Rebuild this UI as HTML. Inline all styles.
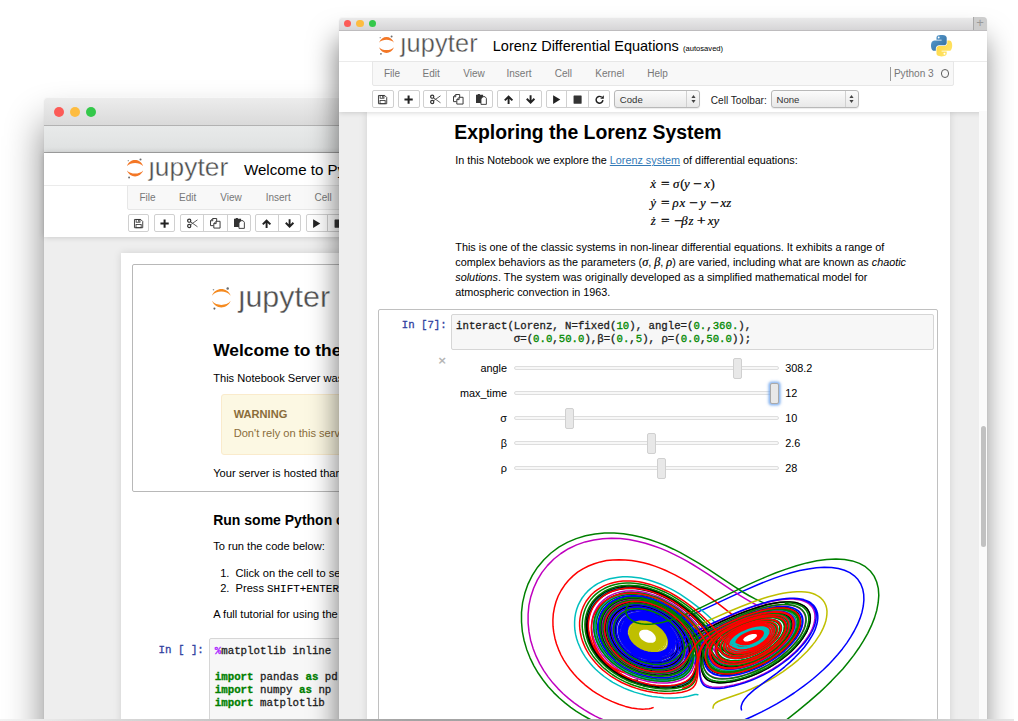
<!DOCTYPE html>
<html lang="en"><head><meta charset="utf-8"><title>Jupyter</title>
<style>
html,body{margin:0;padding:0;background:#fff;}
body{width:1018px;height:721px;overflow:hidden;position:relative;font-family:"Liberation Sans",sans-serif;color:#000;}
.abs,.win *{position:absolute;}
.win{position:absolute;background:#fff;border-radius:4px 4px 0 0;}
.t{white-space:pre;line-height:1;}
.btn{background:#fff;border:1px solid #d0d0d0;box-sizing:border-box;border-radius:2px;}
.btn i{top:0;bottom:0;width:1px;background:#d0d0d0;}
.menu{color:#777;font-size:10px;}
.mono{font-family:"Liberation Mono",monospace;-webkit-text-stroke:0.3px currentColor;}
.math{font-family:"Liberation Serif",serif;font-style:italic;-webkit-text-stroke:0.2px #000;}
svg{overflow:visible;}
.ic{fill:#333;}
.tl{border-radius:50%;}
.logoj{font-family:"Liberation Sans",sans-serif;color:#4e4e4e;-webkit-text-stroke:0.35px #fff;}
.kw{color:#008000;font-weight:bold;}
.num{color:#080;}
.sl{height:4px;border:1px solid #dedede;background:#f7f7f7;border-radius:3px;box-sizing:border-box;}
.sh{width:9px;height:21px;border:1px solid #d0d0d0;background:#e8e8e8;border-radius:2px;box-sizing:border-box;}
.lab{font-size:10.85px;text-align:right;width:80px;}
</style></head><body>

<!-- ================= BACK WINDOW ================= -->
<div class="win" id="w1" style="left:44px;top:97.3px;width:640px;height:640px;box-shadow:0 26px 38px rgba(0,0,0,.48), 0 1px 1px rgba(0,0,0,.12);">
  <div style="left:0;top:0;width:100%;height:28.4px;border-radius:4px 4px 0 0;background:linear-gradient(#ededed,#dadada);border-bottom:1px solid #b2b2b2;box-sizing:border-box;box-shadow:inset 0 1px 0 rgba(255,255,255,.55);"></div>
  <div class="tl" style="left:10px;top:9.9px;width:10px;height:10px;background:#fc5b57;"></div>
  <div class="tl" style="left:25.5px;top:9.9px;width:10px;height:10px;background:#fdbc40;"></div>
  <div class="tl" style="left:41.5px;top:9.9px;width:10px;height:10px;background:#34c84a;"></div>
  <div style="left:0;top:28.4px;width:100%;height:27.8px;background:linear-gradient(#e8eaea,#dfe1e1);border-bottom:1px solid #a6a6a6;box-sizing:border-box;"></div>
  <!-- header -->
  <div id="w1c" style="left:0;top:56.2px;width:100%;height:600px;background:#eee;">
    <div style="left:0;top:0;width:100%;height:83.5px;background:#fff;box-shadow:0 0 6px rgba(0,0,0,.18);"></div>
    <svg style="left:82.50px;top:6.50px;" width="16.1" height="16.5" viewBox="0 0 100 100" preserveAspectRatio="none">
<path d="M0,36 C9,12 30,0 50,0 C70,0 91,12 100,36 C88,23.0 69,17.5 50,17.5 C31,17.5 12,23.0 0,36 Z" fill="#f37726"/>
<path d="M0,64 C9,88 30,100 50,100 C70,100 91,88 100,64 C88,77.0 69,82.5 50,82.5 C31,82.5 12,77.0 0,64 Z" fill="#f37726"/>
<circle cx="84" cy="-3" r="6.5" fill="#6a6a6b"/><circle cx="8" cy="4" r="4.2" fill="#8e8e8e"/><circle cx="13" cy="106" r="5.6" fill="#616262"/>
</svg>
<div class="t logoj" style="left:104.80px;top:0.24px;font-size:26.3px;letter-spacing:0.1px;">jupyter</div>
<div style="left:105.33px;top:0.00px;width:5.26px;height:6.98px;background:#fff;"></div>
    <div class="t" style="left:200.3px;top:8.6px;font-size:15.1px;margin-left:-0.4px;">Welcome to Python</div>
    <div style="left:0;top:31.3px;width:100%;height:1px;background:#ebebeb;"></div><div style="left:83px;top:31.3px;width:600px;height:24.8px;background:#f8f8f8;border:1px solid #e7e7e7;box-sizing:border-box;border-radius:0 0 2px 2px;"></div>
    <div class="t menu" style="left:95.4px;top:39.6px;">File</div>
    <div class="t menu" style="left:135px;top:39.6px;">Edit</div>
    <div class="t menu" style="left:176.2px;top:39.6px;">View</div>
    <div class="t menu" style="left:221.7px;top:39.6px;">Insert</div>
    <div class="t menu" style="left:270.5px;top:39.6px;">Cell</div>
    <div class="btn" style="left:83.6px;top:61.0px;width:21.90px;height:17.90px;"></div><svg style="left:89.95px;top:65.35px;" width="9.2" height="9.2" viewBox="0 0 10 10"><path d="M0.5,0.5 H7.3 L9.5,2.7 V9.5 H0.5 Z" fill="none" stroke="#333" stroke-width="1"/><rect x="2.3" y="0.5" width="4.2" height="3" fill="none" stroke="#333" stroke-width="0.9"/><rect x="4.6" y="1" width="1.2" height="2" fill="#333"/><rect x="2.2" y="6" width="5.6" height="3.5" fill="none" stroke="#333" stroke-width="0.9"/></svg><div class="btn" style="left:110.19999999999999px;top:61.0px;width:21.20px;height:17.90px;"></div><svg style="left:116.20px;top:65.35px;" width="9.2" height="9.2" viewBox="0 0 10 10"><path d="M3.9,0.5 H6.1 V3.9 H9.5 V6.1 H6.1 V9.5 H3.9 V6.1 H0.5 V3.9 H3.9 Z" fill="#222"/></svg><div class="btn" style="left:136.2px;top:61.0px;width:70.70px;height:17.90px;"><i style="left:21.90px;"></i><i style="left:45.50px;"></i></div><svg style="left:142.60px;top:64.65px;" width="10.6" height="10.6" viewBox="0 0 10 10"><path d="M3.4,3.6 L9.9,8.3 M3.4,6.4 L9.9,1.7" stroke="#555" stroke-width="0.9" fill="none"/><circle cx="2.1" cy="2.5" r="1.5" fill="none" stroke="#333" stroke-width="1.15"/><circle cx="2.1" cy="7.5" r="1.5" fill="none" stroke="#333" stroke-width="1.15"/></svg><svg style="left:166.10px;top:64.65px;" width="10.6" height="10.6" viewBox="0 0 10 10"><path d="M2.6,0.5 H6.3 V3 M2.6,0.5 L0.5,2.6 V7.2 H3.3 M2.6,0.5 V2.6 H0.5" fill="none" stroke="#333" stroke-width="0.9"/><path d="M5.8,3.1 H9.5 V9.5 H3.6 V5.3 Z M5.8,3.1 V5.3 H3.6" fill="none" stroke="#333" stroke-width="0.9"/></svg><svg style="left:189.65px;top:64.55px;" width="10.8" height="10.8" viewBox="0 0 10 10"><path d="M0,0.6 H1.6 V0 H3.6 V0.6 H6.6 V2.6 L4.6,4.6 V8.4 H0 Z" fill="#333"/><path d="M6.4,2.5 H8.4 L9.6,4 V9.6 H4.6 V4.6 Z" fill="#fff" stroke="#333" stroke-width="0.85"/></svg><div class="btn" style="left:211.1px;top:61.0px;width:46.00px;height:17.90px;"><i style="left:21.60px;"></i></div><svg style="left:218.05px;top:65.35px;" width="9.2" height="9.2" viewBox="0 0 10 10"><path d="M5,0.2 L9.9,5.1 L8.4,6.6 L6.05,4.25 V9.8 H3.95 V4.25 L1.6,6.6 L0.1,5.1 Z" fill="#222"/></svg><svg style="left:241.05px;top:65.35px;" width="9.2" height="9.2" viewBox="0 0 10 10"><path d="M5,9.8 L9.9,4.9 L8.4,3.4 L6.05,5.75 V0.2 H3.95 V5.75 L1.6,3.4 L0.1,4.9 Z" fill="#222"/></svg><div class="btn" style="left:261.6px;top:61.0px;width:66.40px;height:17.90px;"><i style="left:20.30px;"></i><i style="left:42.90px;"></i></div><svg style="left:267.90px;top:65.35px;" width="9.2" height="9.2" viewBox="0 0 10 10"><path d="M1.2,0.2 L9,5 L1.2,9.8 Z" fill="#222"/></svg><svg style="left:290.10px;top:65.35px;" width="9.2" height="9.2" viewBox="0 0 10 10"><rect x="0.6" y="0.6" width="8.8" height="8.8" rx="0.5" fill="#333"/></svg><svg style="left:312.40px;top:65.35px;" width="9.2" height="9.2" viewBox="0 0 10 10"><path d="M8.6,5.6 A3.7,3.7 0 1 1 7.2,2.3" fill="none" stroke="#222" stroke-width="1.6"/><path d="M9.6,0.3 V4.2 H5.7 Z" fill="#222"/></svg>
    <!-- notebook container -->
    <div style="left:76.7px;top:99.5px;width:600px;height:600px;background:#fff;box-shadow:0 0 8px rgba(0,0,0,.12);">
      <div style="left:11.5px;top:11px;width:600px;height:228px;border:1px solid #b8b8b8;border-radius:2px;box-sizing:border-box;"></div>
      <svg style="left:91.50px;top:35.70px;" width="18.7" height="18.5" viewBox="0 0 100 100" preserveAspectRatio="none">
<path d="M0,36 C9,12 30,0 50,0 C70,0 91,12 100,36 C88,19.5 69,14 50,14 C31,14 12,19.5 0,36 Z" fill="#f58a1f"/>
<path d="M0,64 C9,88 30,100 50,100 C70,100 91,88 100,64 C88,80.5 69,86 50,86 C31,86 12,80.5 0,64 Z" fill="#f58a1f"/>
<circle cx="84" cy="-3" r="6.5" fill="#6a6a6b"/><circle cx="8" cy="4" r="4.2" fill="#8e8e8e"/><circle cx="13" cy="106" r="5.6" fill="#616262"/>
</svg>
<div class="t logoj" style="left:117.90px;top:27.87px;font-size:30.4px;letter-spacing:0.05px;">jupyter</div>
<div style="left:118.51px;top:27.46px;width:6.08px;height:8.21px;background:#fff;"></div>
      <div class="t" style="left:92.5px;top:89.5px;font-size:17.4px;font-weight:bold;">Welcome to the Temporary Notebook</div>
      <div class="t" style="left:92.5px;top:119.7px;font-size:11.1px;">This Notebook Server was launched</div>
      <div style="left:100px;top:141px;width:500px;height:61px;background:#fcf8e3;border:1px solid #faebcc;border-radius:3px;box-sizing:border-box;"></div>
      <div class="t" style="left:113px;top:156.2px;font-size:11.1px;font-weight:bold;color:#8a6d3b;">WARNING</div>
      <div class="t" style="left:113px;top:175.5px;font-size:11.1px;color:#8a6d3b;">Don't rely on this server</div>
      <div class="t" style="left:92.5px;top:215px;font-size:11.1px;">Your server is hosted thanks</div>
      <div class="t" style="left:92.5px;top:260.3px;font-size:14px;font-weight:bold;">Run some Python code</div>
      <div class="t" style="left:92.5px;top:287.7px;font-size:11.1px;">To run the code below:</div>
      <div class="t" style="left:99.5px;top:314.9px;font-size:11.1px;">1.  Click on the cell to select</div>
      <div class="t" style="left:99.5px;top:330.1px;font-size:11.1px;">2.  Press <span class="mono" style="position:static;font-size:10.9px;-webkit-text-stroke:0.1px currentColor;">SHIFT+ENTER</span></div>
      <div class="t" style="left:92.5px;top:356.5px;font-size:11.1px;">A full tutorial for using the</div>
      <div style="left:88px;top:385.5px;width:500px;height:120px;background:#f7f7f7;border:1px solid #d6d6d6;border-radius:2px;box-sizing:border-box;"></div>
      <div class="t mono" style="left:37.8px;top:391.6px;font-size:10.8px;color:#303f9f;">In [ ]:</div>
      <div class="t mono" style="left:94px;top:391.6px;font-size:10.8px;line-height:13.2px;color:#222;"><span style="position:static;color:#aa22ff;font-weight:bold;">%</span>matplotlib inline

<span class="kw" style="position:static">import</span> pandas <span class="kw" style="position:static">as</span> pd
<span class="kw" style="position:static">import</span> numpy <span class="kw" style="position:static">as</span> np
<span class="kw" style="position:static">import</span> matplotlib</div>
    </div>
  </div>
</div>

<!-- ================= FRONT WINDOW ================= -->
<div class="win" id="w2" style="left:339px;top:16.5px;width:648px;height:720px;box-shadow:-2px 22px 28px rgba(0,0,0,.5), 0 1px 1px rgba(0,0,0,.12);">
  <div style="left:0;top:0;width:100%;height:14.5px;border-radius:4px 4px 0 0;background:linear-gradient(#ebebeb,#d6d5d7);border-bottom:1px solid #bebcbe;box-sizing:border-box;box-shadow:inset 0 1px 0 rgba(255,255,255,.5);"></div>
  <div class="tl" style="left:4.7px;top:3.3px;width:7.4px;height:7.4px;background:#fc5b57;"></div>
  <div class="tl" style="left:17.3px;top:3.3px;width:7.4px;height:7.4px;background:#fdbc40;"></div>
  <div class="tl" style="left:30px;top:3.3px;width:7.4px;height:7.4px;background:#34c84a;"></div>
  <div style="left:633.5px;top:0;width:14.5px;height:13.5px;background:#cdcdcd;border-left:1px solid #a8a8a8;border-radius:0 4px 0 0;box-sizing:border-box;"></div>
  <div class="t" style="left:637.2px;top:-0.5px;font-size:13px;color:#9a9a9a;">+</div>
  <div id="w2c" style="left:0;top:14.5px;width:100%;height:700px;background:#eee;overflow:hidden;">
    <!-- notebook container -->
    <div style="left:28px;top:80px;width:583px;height:640px;background:#fff;box-shadow:0 0 8px rgba(0,0,0,.12);"></div>
    <!-- header -->
    <div style="left:0;top:0;width:100%;height:80.9px;background:#fff;box-shadow:0 0 6px rgba(0,0,0,.2);"></div>
    <svg style="left:40.40px;top:6.20px;" width="15" height="15.9" viewBox="0 0 100 100" preserveAspectRatio="none">
<path d="M0,36 C9,12 30,0 50,0 C70,0 91,12 100,36 C88,23.0 69,17.5 50,17.5 C31,17.5 12,23.0 0,36 Z" fill="#f37726"/>
<path d="M0,64 C9,88 30,100 50,100 C70,100 91,88 100,64 C88,77.0 69,82.5 50,82.5 C31,82.5 12,77.0 0,64 Z" fill="#f37726"/>
<circle cx="84" cy="-3" r="6.5" fill="#6a6a6b"/><circle cx="8" cy="4" r="4.2" fill="#8e8e8e"/><circle cx="13" cy="106" r="5.6" fill="#616262"/>
</svg>
<div class="t logoj" style="left:61.60px;top:0.28px;font-size:25.3px;letter-spacing:0.2px;">jupyter</div>
<div style="left:62.11px;top:0.00px;width:5.06px;height:6.77px;background:#fff;"></div>
    <div class="t" style="left:153.8px;top:7.7px;font-size:14.5px;">Lorenz Differential Equations</div>
    <div class="t" style="left:344px;top:14.2px;font-size:7.6px;">(autosaved)</div>
    <svg style="left:592px;top:4.100000000000001px;" width="21.2" height="21.58" viewBox="0 0 111 113">
<defs><linearGradient id="pb" x1="0" y1="0" x2="1" y2="1"><stop offset="0" stop-color="#5a9fd4"/><stop offset="1" stop-color="#306998"/></linearGradient>
<linearGradient id="py" x1="0" y1="0" x2="1" y2="1"><stop offset="0" stop-color="#ffd43b"/><stop offset="1" stop-color="#ffe873"/></linearGradient></defs>
<path fill="url(#pb)" d="M54.9,0 C50.3,0 46,0.4 42.1,1.1 C30.8,3.1 28.7,7.3 28.7,15 V25.25 H55.5 V28.66 H18.6 C10.8,28.66 4,33.3 1.9,42.25 C-0.6,52.5 -0.7,58.8 1.9,69.5 C3.8,77.4 8.3,83.1 16.1,83.1 H25.4 V70.8 C25.4,62 33,54.2 42.1,54.2 H68.9 C76.3,54.2 82.3,48 82.3,40.6 V15 C82.3,7.8 76.2,2.3 68.9,1.1 C64.3,0.3 59.5,0 54.9,0 Z M40.4,8.2 A5.05,5.1 0 1 1 40.4,18.4 A5.05,5.1 0 1 1 40.4,8.2 Z"/>
<path fill="url(#py)" d="M85.6,28.66 V40.6 C85.6,49.8 77.8,57.6 68.9,57.6 H42.1 C34.8,57.6 28.7,63.8 28.7,71.2 V96.7 C28.7,104 35,108.3 42.1,110.3 C50.6,112.8 58.7,113.3 68.9,110.3 C75.6,108.4 82.3,104.5 82.3,96.7 V86.5 H55.5 V83.1 H95.7 C103.5,83.1 106.4,77.7 109.1,69.5 C111.9,61.1 111.8,53 109.1,42.25 C107.2,34.5 103.5,28.66 95.7,28.66 Z M70.6,93.3 A5.05,5.1 0 1 1 70.6,103.5 A5.05,5.1 0 1 1 70.6,93.3 Z"/>
</svg>
    <div style="left:0;top:30.2px;width:100%;height:1px;background:#ebebeb;"></div><div style="left:33.4px;top:30.2px;width:581.5px;height:24.4px;background:#f8f8f8;border:1px solid #e7e7e7;box-sizing:border-box;border-radius:0 0 2px 2px;"></div>
    <div class="t menu" style="left:45px;top:38px;">File</div>
    <div class="t menu" style="left:83.6px;top:38px;">Edit</div>
    <div class="t menu" style="left:124.3px;top:38px;">View</div>
    <div class="t menu" style="left:167.5px;top:38px;">Insert</div>
    <div class="t menu" style="left:215.8px;top:38px;">Cell</div>
    <div class="t menu" style="left:256.3px;top:38px;">Kernel</div>
    <div class="t menu" style="left:308.2px;top:38px;">Help</div>
    <div style="left:550.5px;top:36px;width:1px;height:13.5px;background:#999;"></div>
    <div class="t menu" style="left:554.9px;top:38.2px;font-size:10.1px;">Python 3</div>
    <div style="left:601.6px;top:38.1px;width:8.8px;height:8.8px;border:1.4px solid #5e5e5e;border-radius:50%;box-sizing:border-box;"></div>
    <div class="btn" style="left:33.30000000000001px;top:59.400000000000006px;width:21.50px;height:17.60px;"></div><svg style="left:39.45px;top:63.60px;" width="9.2" height="9.2" viewBox="0 0 10 10"><path d="M0.5,0.5 H7.3 L9.5,2.7 V9.5 H0.5 Z" fill="none" stroke="#333" stroke-width="1"/><rect x="2.3" y="0.5" width="4.2" height="3" fill="none" stroke="#333" stroke-width="0.9"/><rect x="4.6" y="1" width="1.2" height="2" fill="#333"/><rect x="2.2" y="6" width="5.6" height="3.5" fill="none" stroke="#333" stroke-width="0.9"/></svg><div class="btn" style="left:59.30000000000001px;top:59.400000000000006px;width:21.40px;height:17.60px;"></div><svg style="left:65.40px;top:63.60px;" width="9.2" height="9.2" viewBox="0 0 10 10"><path d="M3.9,0.5 H6.1 V3.9 H9.5 V6.1 H6.1 V9.5 H3.9 V6.1 H0.5 V3.9 H3.9 Z" fill="#222"/></svg><div class="btn" style="left:84.30000000000001px;top:59.400000000000006px;width:69.70px;height:17.60px;"><i style="left:21.80px;"></i><i style="left:44.80px;"></i></div><svg style="left:90.65px;top:62.90px;" width="10.6" height="10.6" viewBox="0 0 10 10"><path d="M3.4,3.6 L9.9,8.3 M3.4,6.4 L9.9,1.7" stroke="#555" stroke-width="0.9" fill="none"/><circle cx="2.1" cy="2.5" r="1.5" fill="none" stroke="#333" stroke-width="1.15"/><circle cx="2.1" cy="7.5" r="1.5" fill="none" stroke="#333" stroke-width="1.15"/></svg><svg style="left:113.80px;top:62.90px;" width="10.6" height="10.6" viewBox="0 0 10 10"><path d="M2.6,0.5 H6.3 V3 M2.6,0.5 L0.5,2.6 V7.2 H3.3 M2.6,0.5 V2.6 H0.5" fill="none" stroke="#333" stroke-width="0.9"/><path d="M5.8,3.1 H9.5 V9.5 H3.6 V5.3 Z M5.8,3.1 V5.3 H3.6" fill="none" stroke="#333" stroke-width="0.9"/></svg><svg style="left:136.90px;top:62.80px;" width="10.8" height="10.8" viewBox="0 0 10 10"><path d="M0,0.6 H1.6 V0 H3.6 V0.6 H6.6 V2.6 L4.6,4.6 V8.4 H0 Z" fill="#333"/><path d="M6.4,2.5 H8.4 L9.6,4 V9.6 H4.6 V4.6 Z" fill="#fff" stroke="#333" stroke-width="0.85"/></svg><div class="btn" style="left:158.3px;top:59.400000000000006px;width:44.50px;height:17.60px;"><i style="left:20.80px;"></i></div><svg style="left:164.85px;top:63.60px;" width="9.2" height="9.2" viewBox="0 0 10 10"><path d="M5,0.2 L9.9,5.1 L8.4,6.6 L6.05,4.25 V9.8 H3.95 V4.25 L1.6,6.6 L0.1,5.1 Z" fill="#222"/></svg><svg style="left:187.10px;top:63.60px;" width="9.2" height="9.2" viewBox="0 0 10 10"><path d="M5,9.8 L9.9,4.9 L8.4,3.4 L6.05,5.75 V0.2 H3.95 V5.75 L1.6,3.4 L0.1,4.9 Z" fill="#222"/></svg><div class="btn" style="left:207.10000000000002px;top:59.400000000000006px;width:63.90px;height:17.60px;"><i style="left:19.20px;"></i><i style="left:40.80px;"></i></div><svg style="left:212.85px;top:63.60px;" width="9.2" height="9.2" viewBox="0 0 10 10"><path d="M1.2,0.2 L9,5 L1.2,9.8 Z" fill="#222"/></svg><svg style="left:234.00px;top:63.60px;" width="9.2" height="9.2" viewBox="0 0 10 10"><rect x="0.6" y="0.6" width="8.8" height="8.8" rx="0.5" fill="#333"/></svg><svg style="left:255.60px;top:63.60px;" width="9.2" height="9.2" viewBox="0 0 10 10"><path d="M8.6,5.6 A3.7,3.7 0 1 1 7.2,2.3" fill="none" stroke="#222" stroke-width="1.6"/><path d="M9.6,0.3 V4.2 H5.7 Z" fill="#222"/></svg><div style="left:275.2px;top:59.4px;width:86.0px;height:17.6px;border:1px solid #b8b8b8;border-radius:3px;box-sizing:border-box;background:linear-gradient(#fbfbfb,#e8e8e8);box-shadow:0 1px 1px rgba(0,0,0,.08);"></div><div style="left:347.2px;top:60.4px;width:1px;height:15.6px;background:#d0d0d0;"></div><div class="t" style="left:280.8px;top:64.1px;font-size:9.6px;color:#333;">Code</div><svg style="left:351.7px;top:64.2px;" width="5" height="8" viewBox="0 0 5 8"><path d="M2.5,0 L4.6,3 H0.4 Z M2.5,8 L4.6,5 H0.4 Z" fill="#444"/></svg><div class="t" style="left:371.8px;top:64.6px;font-size:10.1px;color:#222;">Cell Toolbar:</div><div style="left:431.9px;top:59.4px;width:87.8px;height:17.6px;border:1px solid #b8b8b8;border-radius:3px;box-sizing:border-box;background:linear-gradient(#fbfbfb,#e8e8e8);box-shadow:0 1px 1px rgba(0,0,0,.08);"></div><div style="left:505.7px;top:60.4px;width:1px;height:15.6px;background:#d0d0d0;"></div><div class="t" style="left:437.5px;top:64.1px;font-size:9.6px;color:#333;">None</div><svg style="left:510.2px;top:64.2px;" width="5" height="8" viewBox="0 0 5 8"><path d="M2.5,0 L4.6,3 H0.4 Z M2.5,8 L4.6,5 H0.4 Z" fill="#444"/></svg>
    <!-- content -->
    <div class="t" style="left:116.3px;top:92.3px;font-size:19.4px;font-weight:bold;margin-left:-1px;">Exploring the Lorenz System</div>
    <div class="t" style="left:116.3px;top:124.4px;font-size:10.82px;">In this Notebook we explore the <span style="position:static;color:#337ab7;text-decoration:underline;">Lorenz system</span> of differential equations:</div>
    <div class="t math" style="left:311.3px;top:147.4px;font-size:12.8px;">ẋ</div><div class="t math" style="left:322.1px;top:147.4px;font-size:12.8px;font-style:normal;transform:scaleX(1.18);transform-origin:0 50%;-webkit-text-stroke:0.35px #000;">=</div><div class="t math" style="left:334.0px;top:147.4px;font-size:12.8px;">σ</div><div class="t math" style="left:341.3px;top:147.4px;font-size:12.8px;font-style:normal;">(</div><div class="t math" style="left:345.0px;top:147.4px;font-size:12.8px;">y</div><div class="t math" style="left:354.0px;top:147.4px;font-size:12.8px;font-style:normal;transform:scaleX(1.18);transform-origin:0 50%;-webkit-text-stroke:0.35px #000;">−</div><div class="t math" style="left:365.3px;top:147.4px;font-size:12.8px;">x</div><div class="t math" style="left:371.6px;top:147.4px;font-size:12.8px;font-style:normal;">)</div><div class="t math" style="left:311.3px;top:165.6px;font-size:12.8px;">ẏ</div><div class="t math" style="left:322.1px;top:165.6px;font-size:12.8px;font-style:normal;transform:scaleX(1.18);transform-origin:0 50%;-webkit-text-stroke:0.35px #000;">=</div><div class="t math" style="left:333.5px;top:165.6px;font-size:12.8px;">ρ</div><div class="t math" style="left:340.5px;top:165.6px;font-size:12.8px;">x</div><div class="t math" style="left:350.1px;top:165.6px;font-size:12.8px;font-style:normal;transform:scaleX(1.18);transform-origin:0 50%;-webkit-text-stroke:0.35px #000;">−</div><div class="t math" style="left:360.9px;top:165.6px;font-size:12.8px;">y</div><div class="t math" style="left:370.7px;top:165.6px;font-size:12.8px;font-style:normal;transform:scaleX(1.18);transform-origin:0 50%;-webkit-text-stroke:0.35px #000;">−</div><div class="t math" style="left:381.6px;top:165.6px;font-size:12.8px;">xz</div><div class="t math" style="left:311.8px;top:183.7px;font-size:12.8px;">ż</div><div class="t math" style="left:322.1px;top:183.7px;font-size:12.8px;font-style:normal;transform:scaleX(1.18);transform-origin:0 50%;-webkit-text-stroke:0.35px #000;">=</div><div class="t math" style="left:334.9px;top:183.7px;font-size:12.8px;font-style:normal;transform:scaleX(1.18);transform-origin:0 50%;-webkit-text-stroke:0.35px #000;">−</div><div class="t math" style="left:342.3px;top:183.7px;font-size:12.8px;">β</div><div class="t math" style="left:349.6px;top:183.7px;font-size:12.8px;">z</div><div class="t math" style="left:357.5px;top:183.7px;font-size:12.8px;font-style:normal;transform:scaleX(1.18);transform-origin:0 50%;-webkit-text-stroke:0.35px #000;">+</div><div class="t math" style="left:368.8px;top:183.7px;font-size:12.8px;">xy</div>
    <div class="t" style="left:116.3px;top:209.4px;font-size:10.82px;line-height:15px;">This is one of the classic systems in non-linear differential equations. It exhibits a range of
complex behaviors as the parameters (<span class="math" style="position:static;font-size:12.2px;line-height:1">σ</span>, <span class="math" style="position:static;font-size:12.2px;line-height:1">β</span>, <span class="math" style="position:static;font-size:12.2px;line-height:1">ρ</span>) are varied, including what are known as <em style="position:static">chaotic</em>
<em style="position:static">solutions</em>. The system was originally developed as a simplified mathematical model for
atmospheric convection in 1963.</div>
    <!-- code cell -->
    <div style="left:39.3px;top:278px;width:559.5px;height:500px;border:1px solid #c0c0c0;border-radius:2px;box-sizing:border-box;"></div>
    <div style="left:112px;top:283px;width:482.5px;height:35.5px;background:#f7f7f7;border:1px solid #d6d6d6;border-radius:2px;box-sizing:border-box;"></div>
    <div class="t mono" style="left:62.8px;top:289.3px;font-size:10.7px;color:#303f9f;">In [7]:</div>
    <div class="t mono" style="left:117.1px;top:289.3px;font-size:10.7px;line-height:12.7px;color:#222;">interact(Lorenz, N=fixed(<span class="num" style="position:static">10</span>), angle=(<span class="num" style="position:static">0.</span>,<span class="num" style="position:static">360.</span>),
         σ=(<span class="num" style="position:static">0.0</span>,<span class="num" style="position:static">50.0</span>),β=(<span class="num" style="position:static">0.</span>,<span class="num" style="position:static">5</span>), ρ=(<span class="num" style="position:static">0.0</span>,<span class="num" style="position:static">50.0</span>));</div>
    <div class="t" style="left:99.2px;top:322.6px;font-size:13.5px;color:#b0b0b0;-webkit-text-stroke:0.3px #b0b0b0;">×</div>
    <div class="t lab" style="left:88.0px;top:332.2px;">angle</div><div class="sl" style="left:174.5px;top:335.4px;width:265.3px;"></div><div class="sh" style="left:394.0px;top:326.9px;"></div><div class="t" style="left:446.2px;top:332.2px;font-size:10.85px;">308.2</div><div class="t lab" style="left:88.0px;top:357.0px;">max_time</div><div class="sl" style="left:174.5px;top:360.2px;width:265.3px;"></div><div class="sh" style="left:430.7px;top:351.7px;box-shadow:0 0 2.5px 1.6px rgba(95,155,235,.75);border-color:#a9a9a9;"></div><div class="t" style="left:446.2px;top:357.0px;font-size:10.85px;">12</div><div class="t lab" style="left:88.0px;top:381.8px;">σ</div><div class="sl" style="left:174.5px;top:385.0px;width:265.3px;"></div><div class="sh" style="left:225.9px;top:376.5px;"></div><div class="t" style="left:446.2px;top:381.8px;font-size:10.85px;">10</div><div class="t lab" style="left:88.0px;top:406.8px;">β</div><div class="sl" style="left:174.5px;top:410.0px;width:265.3px;"></div><div class="sh" style="left:307.6px;top:401.5px;"></div><div class="t" style="left:446.2px;top:406.8px;font-size:10.85px;">2.6</div><div class="t lab" style="left:88.0px;top:432.0px;">ρ</div><div class="sl" style="left:174.5px;top:435.2px;width:265.3px;"></div><div class="sh" style="left:317.9px;top:426.7px;"></div><div class="t" style="left:446.2px;top:432.0px;font-size:10.85px;">28</div>
    <svg style="left:0;top:0;" width="648" height="700" viewBox="0 0 648 700" fill="none" stroke-width="1.5" stroke-linejoin="round" stroke-linecap="round">
<path stroke="#0000ff" d="M384.7,697.6 404.7,689.3 413.1,685.5 422.7,680.9 429.9,677.2 437.7,672.8 446.1,667.8 455.1,662.0 464.6,655.2 469.4,651.5 474.4,647.5 479.3,643.2 484.3,638.7 489.3,633.9 494.1,628.8 498.8,623.5 503.4,617.9 507.7,612.1 511.6,606.1 515.2,600.0 518.4,593.7 521.0,587.4 523.0,581.2 524.3,575.0 524.9,569.0 524.7,563.3 523.7,557.9 521.8,553.0 519.0,548.6 515.3,544.8 510.8,541.6 505.5,539.2 499.4,537.5 492.6,536.5 485.3,536.3 477.4,536.7 469.3,537.9 460.8,539.6 452.2,541.8 443.5,544.4 434.9,547.4 426.4,550.6 418.1,554.0 402.3,560.9 363.1,579.1 352.8,583.6 348.1,585.5 343.7,587.2 335.8,589.9 332.2,590.9 325.7,592.5 320.1,593.5 317.6,593.7 313.1,593.9 311.0,593.8 307.5,593.4 305.9,593.0 303.2,592.2 301.0,591.1 299.3,589.9 298.1,588.7 297.6,588.0 297.1,586.7 296.9,585.5 297.0,584.9 297.4,583.7 298.1,582.7 299.8,581.5 301.2,580.9 303.7,580.4 305.6,580.3 308.6,580.5 310.7,580.9 313.9,581.8 317.1,583.0 320.2,584.6 323.1,586.4 325.9,588.3 328.4,590.4 330.7,592.6 332.7,594.9 335.0,597.9 336.5,600.1 338.0,603.1 339.0,605.3 339.9,608.0 340.5,610.7 340.8,613.3 340.8,615.7 340.6,618.0 340.1,620.2 339.3,622.2 338.3,624.1 337.0,625.9 335.5,627.5 333.7,628.9 331.6,630.2 329.2,631.3 326.5,632.2 324.2,632.8 320.9,633.2 318.1,633.3 315.2,633.3 312.0,632.9 308.7,632.4 306.3,631.8 302.7,630.8 300.2,629.8 296.5,628.2 293.9,626.8 291.4,625.3 289.0,623.6 286.6,621.6 284.3,619.5 282.2,617.2 280.2,614.8 278.5,612.1 277.0,609.4 275.9,606.5 275.4,605.0 274.7,602.0 274.6,600.5 274.5,597.5 274.6,596.0 275.1,593.1 276.1,590.4 277.4,587.8 278.2,586.6 279.2,585.5 281.3,583.4 282.4,582.4 285.0,580.8 287.8,579.5 290.8,578.5 294.0,577.9 295.6,577.7 298.9,577.6 302.2,577.8 305.6,578.2 308.8,578.9 313.6,580.4 316.6,581.6 320.8,583.7 324.7,586.0 328.2,588.5 331.4,591.1 334.1,593.7 336.5,596.3 339.2,599.7 341.3,603.0 342.9,606.2 344.1,609.2 345.1,612.8 345.6,616.1 345.7,619.2 345.3,622.1 344.5,625.3 343.4,627.7 341.9,630.0 340.1,632.0 337.8,633.9 335.2,635.5 332.6,636.6 329.0,637.7 325.6,638.4 321.8,638.7 318.7,638.8 315.3,638.6 311.7,638.2 307.8,637.4 305.1,636.8 300.8,635.4 297.9,634.3 293.4,632.2 290.4,630.6 287.4,628.7 284.4,626.6 281.6,624.2 278.9,621.5 276.3,618.7 275.1,617.1 273.0,613.9 271.2,610.5 269.7,606.9 269.2,605.1 268.4,601.4 268.2,599.5 268.1,595.8 268.3,593.9 269.1,590.3 269.7,588.6 271.2,585.3 272.2,583.7 273.3,582.3 275.9,579.6 277.3,578.4 280.5,576.3 284.0,574.7 287.7,573.5 291.7,572.7 295.7,572.4 299.8,572.5 303.9,573.0 308.0,573.8 313.8,575.5 319.2,577.7 324.3,580.3 328.8,583.1 332.9,586.1 336.5,589.1 340.6,593.1 343.9,597.0 346.6,600.7 349.2,605.1 351.2,609.2 352.7,613.7 353.7,617.9 354.2,622.2 354.3,626.7 353.8,630.8 353.3,633.1 352.8,634.9 351.4,638.1 349.7,640.7 347.5,643.1 345.1,645.0 342.0,646.7 338.3,648.1 334.5,649.1 329.9,649.8 325.6,650.1 320.8,650.0 315.2,649.6 310.6,648.9 305.7,647.8 300.3,646.3 294.6,644.3 290.7,642.6 286.7,640.6 282.6,638.2 278.5,635.5 274.5,632.5 270.7,629.0 267.0,625.1 263.6,620.8 262.1,618.6 259.4,613.8 258.3,611.3 257.3,608.7 256.4,606.0 255.8,603.4 255.3,600.6 255.0,597.9 254.9,595.2 255.0,592.4 255.3,589.7 255.9,587.1 256.7,584.5 257.6,582.0 258.8,579.6 260.2,577.2 261.8,575.0 263.6,573.0 265.5,571.1 267.7,569.3 269.9,567.8 272.3,566.4 274.9,565.2 277.5,564.1 280.2,563.3 283.0,562.6 285.9,562.1 288.8,561.8 291.7,561.6 294.7,561.7 297.6,561.8 303.4,562.6 309.0,563.8 311.8,564.6 317.1,566.4 319.6,567.5 324.5,569.7 331.2,573.4 337.1,577.2 340.7,579.8 343.9,582.4 346.9,584.9 350.8,588.6 356.2,594.4 359.6,598.6 362.9,603.4 366.5,609.4 372.9,621.0 374.9,624.0 377.1,626.6 379.6,628.7 382.6,630.5 384.3,631.2 386.2,631.8 389.7,632.5 392.0,632.7 394.6,632.8 397.4,632.6 400.4,632.3 406.0,631.2 412.1,629.4 416.1,627.8 418.9,626.6 424.5,623.7 430.2,620.2 433.0,618.2 435.7,616.0 438.3,613.7 440.8,611.3 444.0,607.5 446.6,603.5 447.9,600.9 448.4,599.6 449.1,597.0 449.3,595.8 449.3,593.4 449.1,592.3 448.3,590.3 447.7,589.3 446.3,587.7 445.3,586.9 443.1,585.7 440.5,584.8 437.5,584.3 434.2,584.1 430.7,584.1 425.0,584.8 421.2,585.5 415.3,587.0 409.5,588.7 404.1,590.7 398.9,592.9 392.8,595.7 387.4,598.6 382.9,601.3 379.1,604.0 376.1,606.5 373.6,608.9 371.7,611.2 369.9,614.0 368.7,616.7 367.9,619.3 367.5,622.2 367.4,625.1 367.9,628.2 368.8,631.0 369.9,633.3 371.4,635.4 373.4,637.2 375.8,638.8 378.2,639.9 381.2,640.8 383.9,641.2 387.1,641.5 389.7,641.5 392.7,641.3 395.9,640.9 399.4,640.3 403.3,639.4 410.5,637.2 415.2,635.5 418.5,634.0 425.5,630.6 429.1,628.5 432.8,626.2 438.3,622.3 443.6,618.0 448.5,613.1 451.5,609.7 452.9,607.9 455.3,604.3 456.4,602.5 458.1,598.9 458.7,597.1 459.5,593.6 459.7,591.9 459.6,590.3 459.4,588.7 459.1,587.2 458.5,585.8 457.7,584.5 456.8,583.3 455.7,582.2 454.4,581.3 453.0,580.4 451.3,579.7 449.6,579.1 445.6,578.3 443.4,578.0 438.8,577.9 436.4,578.1 431.3,578.6 423.4,580.2 418.1,581.5 412.9,583.1 403.0,586.6 396.2,589.4 390.0,592.2 384.5,594.9 379.7,597.4 375.4,599.8 370.7,602.8 367.7,604.9 364.4,607.5 362.3,609.3 360.6,611.1 358.6,613.4 357.0,615.7 354.5,619.9 349.9,629.1 347.4,633.0 346.1,634.6 344.6,636.1 342.9,637.5 341.0,638.9 338.3,640.4 335.0,641.7 331.9,642.5 328.5,643.2 324.6,643.6 321.3,643.7 316.5,643.4 312.5,643.0 308.2,642.2 305.2,641.5 300.5,640.1 297.2,638.9 293.8,637.4 290.3,635.8 286.9,633.8 283.4,631.5 280.0,629.0 276.8,626.1 273.6,623.0 272.2,621.3 269.5,617.7 268.2,615.8 266.0,611.8 265.1,609.7 263.6,605.4 263.1,603.2 262.5,598.7 262.4,596.5 262.5,594.3 262.7,592.1 263.1,589.9 263.7,587.8 264.5,585.7 265.4,583.7 266.4,581.8 267.7,580.0 269.1,578.3 270.6,576.7 272.2,575.2 274.0,573.9 275.9,572.6 277.9,571.5 280.0,570.6 282.2,569.8 286.7,568.6 289.1,568.2 293.9,567.8 296.3,567.8 301.1,568.1 303.5,568.5 308.2,569.4 310.5,570.0 315.0,571.5 321.3,574.2 325.2,576.1 328.9,578.3 332.2,580.4 335.4,582.7 340.8,587.2 343.2,589.4 346.4,592.7 350.7,597.9 352.8,600.8 354.6,603.6 357.0,607.9 359.1,612.6 361.1,618.2 364.0,628.4 365.2,632.1 366.6,635.3 368.4,638.2 369.4,639.5 370.7,640.7 372.1,641.7 373.7,642.7 375.6,643.5 377.2,644.1 379.6,644.6 381.6,644.9 384.7,645.1 387.3,645.1 390.2,645.0 393.4,644.6 399.5,643.5 406.7,641.6 413.1,639.3 420.2,636.3 423.9,634.5 427.8,632.4 433.8,628.8 439.8,624.6 445.7,619.8 451.2,614.4 454.6,610.6 457.6,606.7 458.9,604.7 461.1,600.6 462.8,596.5 463.3,594.5 463.7,592.6 463.9,590.7 463.9,588.9 463.7,587.1 463.3,585.4 462.6,583.9 461.8,582.4 460.7,581.1 459.5,579.9 458.0,578.8 456.3,577.9 454.5,577.1 452.5,576.4 450.3,576.0 448.0,575.6 442.9,575.4 440.3,575.5 434.7,576.0 431.8,576.4 425.9,577.6 420.0,579.1 414.2,580.9 408.6,582.8 400.6,585.8 393.2,588.9 386.6,591.9 380.7,594.7 374.1,598.2 368.6,601.4 364.1,604.3 358.9,608.1 355.1,611.7 353.1,613.9 351.4,616.0 345.6,624.4 343.2,627.5 341.7,629.1 340.0,630.7 338.1,632.1 336.0,633.5 333.6,634.6 331.6,635.4 328.6,636.3 326.2,636.8 323.5,637.1 320.6,637.3 315.2,637.1 311.7,636.7 309.2,636.3 305.3,635.4 302.6,634.6 298.4,633.0 295.5,631.8 292.7,630.3 289.8,628.6 286.9,626.7 284.2,624.5 280.2,620.9 277.8,618.1 275.6,615.2 273.7,612.1 272.9,610.4 271.5,607.1 270.9,605.3 270.2,601.8 269.9,600.0 269.8,596.5 270.0,594.8 270.7,591.4 271.2,589.7 272.6,586.6 273.5,585.1 274.5,583.7 276.8,581.1 278.1,579.9 281.1,577.9 282.7,577.0 286.0,575.6 289.6,574.6 293.4,574.0 297.3,573.8 299.2,573.8 303.1,574.2 306.9,574.9 312.5,576.4 316.1,577.7 321.1,580.0 325.7,582.6 328.5,584.4 331.1,586.3 334.6,589.2 338.6,593.1 342.0,596.9 344.6,600.5 347.2,604.9 349.1,608.9 350.4,612.7 351.4,616.9 351.8,621.3 351.7,625.3 351.0,628.9 350.0,632.3 348.4,635.3 346.4,638.0 344.1,640.2 341.2,642.1 337.6,643.7 334.1,644.9 329.8,645.7 324.8,646.2 320.1,646.2 314.9,645.8 310.6,645.2 307.5,644.6 302.7,643.3 299.3,642.2 295.7,640.9 292.1,639.3 288.5,637.5 284.8,635.3 281.1,632.9 277.4,630.1 273.9,626.9 272.3,625.2 269.1,621.6 267.6,619.6 264.9,615.5 263.8,613.3 261.8,608.8 261.0,606.5 259.9,601.7 259.5,599.3 259.4,596.8 259.4,594.4 259.6,592.0 260.0,589.6 260.6,587.3 261.4,585.0 262.3,582.9 263.5,580.8 264.8,578.7 266.2,576.9 267.9,575.1 269.7,573.4 271.6,571.9 273.6,570.6 275.8,569.4 278.1,568.3 280.4,567.4 282.9,566.7 285.4,566.1 290.5,565.4 295.8,565.3 298.4,565.5 303.6,566.1 306.1,566.6 311.1,567.9 313.6,568.7 318.2,570.4 324.8,573.5 328.8,575.7 332.5,578.0 335.9,580.4 339.1,582.8 344.6,587.5 347.0,589.8 350.1,593.2 354.4,598.4 357.7,603.3 360.7,608.5 363.3,613.8 367.1,623.2 368.5,626.3 370.3,629.5 372.3,632.3 373.7,633.7 374.8,634.7 376.5,635.9 378.0,636.7 380.1,637.6 381.9,638.1 383.9,638.5 386.1,638.9 388.6,639.0 391.2,639.0 394.2,638.9 397.4,638.5 403.4,637.3 410.3,635.3 414.8,633.6 417.9,632.3 424.5,629.1 427.9,627.2 431.4,625.1 436.5,621.5 441.5,617.4 446.1,613.0 450.2,608.2 452.5,604.8 453.5,603.2 455.2,599.8 455.8,598.1 456.6,594.9 456.9,591.8 456.8,590.4 456.5,589.0 456.0,587.6 455.4,586.4 454.6,585.2 453.7,584.2 452.6,583.2 451.3,582.4 449.9,581.6 448.3,581.0 444.8,580.1 440.8,579.6 436.5,579.6 434.2,579.8 429.5,580.3 424.6,581.2 419.7,582.4 414.9,583.7 410.1,585.3 405.5,586.9 399.0,589.5 393.0,592.1 387.6,594.6 382.9,597.1 378.7,599.5 375.1,601.7 371.0,604.5 367.7,607.1 365.1,609.6 363.4,611.4 361.6,613.7 360.2,615.9 359.0,618.1 357.2,622.3 353.6,632.6 352.5,635.1 351.4,637.1 349.9,639.3 348.4,641.1 346.6,642.8 344.9,644.0 341.9,645.7 338.9,647.0 335.2,648.0 330.9,648.8 326.8,649.2 322.2,649.3 316.9,649.0 312.5,648.4 307.8,647.5 304.4,646.7 299.0,645.1 295.3,643.7 291.4,642.1 287.5,640.2 283.5,637.9 279.5,635.3 275.5,632.3 271.7,628.9 268.1,625.2 266.4,623.2 263.3,618.8 261.9,616.6 259.4,611.8 258.4,609.2 257.5,606.7 256.8,604.1 256.3,601.4 256.0,598.8 255.8,596.1 255.9,593.4 256.2,590.8 256.6,588.2 257.3,585.6 258.2,583.2 259.3,580.8 260.6,578.5 262.1,576.3 263.7,574.2 265.6,572.3 267.6,570.6 269.8,569.0 272.1,567.6 274.5,566.3 277.1,565.2 279.7,564.3 282.4,563.6 285.2,563.0 288.0,562.7 290.8,562.5 293.7,562.4 299.4,562.8 302.2,563.1 307.8,564.3 313.2,565.8 315.8,566.7 320.7,568.7 327.7,572.1 333.8,575.8 339.3,579.6 345.5,584.7 348.2,587.2 351.8,590.7 356.7,596.3 359.8,600.4 362.9,605.0 365.7,610.0 372.1,622.1 374.0,625.0 376.1,627.6 378.6,629.8 381.5,631.5 383.1,632.3 385.0,632.9 388.4,633.6 390.7,633.9 393.3,634.0 396.0,633.9 399.0,633.6 404.6,632.6 410.8,630.8 414.8,629.3 417.6,628.2 423.4,625.3 429.4,621.8 432.3,619.8 435.2,617.6 438.0,615.3 440.6,612.8 444.2,608.9 447.1,604.8 448.7,602.0 449.3,600.6 450.3,597.9 450.5,596.6 450.8,594.0 450.7,592.8 450.1,590.5 449.7,589.5 448.3,587.6 447.4,586.8 445.3,585.4 442.8,584.3 439.8,583.6 438.1,583.4 434.7,583.2 430.9,583.3 427.0,583.8 422.9,584.5 416.8,585.9 410.7,587.7 404.9,589.8 399.5,592.0 393.0,595.0 387.3,597.9 382.5,600.7 378.5,603.5 375.2,606.0 372.5,608.5 370.4,610.9 368.5,613.7 367.1,616.4 366.0,619.5 365.5,622.5 365.3,625.9 365.5,629.0 366.2,632.4 367.2,635.1 368.6,637.5 370.2,639.4 372.1,641.0 374.5,642.5 377.6,643.6 380.7,644.3 383.6,644.6 386.0,644.7 388.8,644.6 391.8,644.3 397.6,643.5 404.3,641.9 408.8,640.5 412.1,639.3 419.0,636.4 426.5,632.7 432.3,629.2 438.3,625.2 444.1,620.6 449.7,615.5 453.1,611.8 456.2,607.9 457.5,605.9 459.9,601.9 461.8,597.9 462.4,595.9 462.9,594.0 463.2,592.1 463.3,590.2 463.3,588.5 463.0,586.8 462.5,585.1 461.8,583.6 460.9,582.2 459.8,581.0 458.5,579.8 457.0,578.8 455.3,577.9 453.4,577.2 451.4,576.6 449.2,576.2 444.4,575.8 441.8,575.7 436.4,576.1 433.6,576.4 427.9,577.5 422.1,578.8 416.3,580.5 410.7,582.3 402.6,585.3 395.2,588.3 388.5,591.3 382.5,594.2 375.7,597.7 370.0,600.9 365.4,603.8 360.1,607.7 358.0,609.6 355.6,611.9 353.7,614.1 352.0,616.2 346.4,624.7 343.7,628.2 342.2,629.8 340.5,631.4 338.6,632.8 336.5,634.2 334.1,635.3 332.1,636.1 329.2,637.0 326.7,637.5 324.1,637.9 321.1,638.1 318.0,638.1 314.6,637.9 310.9,637.4 307.1,636.6 303.0,635.5 300.1,634.5 295.8,632.7 292.8,631.2 289.9,629.5 287.0,627.6 284.1,625.5 281.3,623.0 277.5,619.0 275.2,616.0 273.2,612.8 271.5,609.4 270.8,607.7 269.7,604.1 269.3,602.3 268.9,598.7 268.9,596.8 269.3,593.2 269.6,591.5 270.8,588.1 271.5,586.5 273.4,583.5 274.5,582.1 275.8,580.8 278.6,578.4 280.1,577.4 283.4,575.7 285.2,575.0 288.9,573.9 290.8,573.5 294.7,573.1 296.7,573.1 300.7,573.2 302.7,573.4 306.7,574.1 312.5,575.7 317.9,577.7 321.3,579.4 324.5,581.1 327.5,582.9 330.2,584.8 335.2,588.8 337.3,590.7 340.2,593.7 344.2,598.4 346.1,601.2 347.7,603.8 349.0,606.4 350.1,608.8 351.0,611.1 351.9,614.0 352.5,616.8 352.9,620.0 353.1,622.4 353.1,625.3 352.8,627.9 352.4,630.4 351.7,632.8 351.0,634.5 350.2,636.2 349.3,637.8 348.1,639.3 346.8,640.7 345.3,642.1 343.5,643.3 341.4,644.5 339.7,645.3 337.0,646.2 334.8,646.9 332.3,647.4 329.5,647.8 324.2,648.1 318.0,648.0 312.3,647.3 306.0,646.1 302.6,645.1 299.0,644.0 293.5,641.9 287.7,639.1 281.9,635.7 278.1,632.9 276.2,631.4"/>
<path stroke="#008000" d="M274.2,698.4 264.5,694.7 259.4,692.4 254.1,689.9 248.6,687.0 243.1,683.8 237.4,680.3 231.7,676.3 226.0,671.9 220.3,667.0 214.7,661.6 209.3,655.7 204.2,649.2 199.3,642.3 194.9,634.8 191.0,626.8 187.7,618.4 185.1,609.5 183.3,600.3 182.5,590.9 182.5,581.3 183.6,571.7 185.8,562.3 189.0,553.1 193.3,544.4 198.6,536.2 204.9,528.7 212.0,522.0 219.8,516.2 228.3,511.4 237.2,507.6 246.5,504.8 256.0,502.9 265.5,502.0 275.1,502.0 284.4,502.7 293.6,504.2 302.5,506.2 311.1,508.7 319.3,511.6 327.1,514.8 334.5,518.2 341.4,521.7 348.0,525.3 360.1,532.4 370.7,539.2 395.5,555.7 404.6,561.5 409.8,564.5 416.1,567.9 427.1,573.0 427.6,573.4 427.6,573.6 427.5,573.8 427.0,574.2 415.8,578.7 407.4,582.5 398.9,587.0 391.1,591.6 385.6,595.4 380.2,599.8 377.9,601.9 376.0,603.9 374.4,605.8 373.0,607.7 371.5,610.1 370.4,612.4 369.5,614.7 369.0,616.9 368.6,619.5 368.6,622.0 368.8,624.3 369.2,626.6 369.9,628.7 370.9,630.7 372.1,632.6 373.6,634.3 375.4,635.8 377.1,636.8 379.1,637.7 381.3,638.5 384.0,639.1 386.2,639.3 389.5,639.5 392.3,639.4 395.3,639.1 398.7,638.7 402.3,637.9 406.3,636.9 410.5,635.6 413.5,634.5 418.3,632.5 421.6,631.0 428.4,627.3 431.9,625.1 435.3,622.7 438.7,620.1 442.1,617.3 446.7,612.8 450.8,607.9 453.1,604.5 454.1,602.8 455.7,599.4 456.4,597.7 457.1,594.5 457.3,592.9 457.3,591.3 457.2,589.9 456.8,588.5 456.3,587.1 455.7,585.9 454.8,584.8 453.8,583.7 452.7,582.8 451.4,581.9 449.9,581.2 446.5,580.1 444.7,579.8 440.6,579.3 438.4,579.3 433.8,579.5 426.6,580.6 421.6,581.7 416.7,583.0 411.8,584.5 407.1,586.1 398.2,589.6 392.3,592.2 386.9,594.8 382.1,597.3 378.0,599.6 374.4,601.9 370.3,604.7 367.8,606.6 365.0,609.1 363.3,610.9 361.4,613.3 359.9,615.5 358.6,617.7 356.7,621.9 353.0,631.8 351.8,634.4 350.6,636.4 349.0,638.7 347.4,640.4 345.5,642.1 343.7,643.3 340.5,645.0 336.5,646.5 332.5,647.4 327.7,648.0 323.3,648.2 318.3,648.0 312.6,647.4 308.0,646.5 303.0,645.3 299.4,644.2 295.8,642.9 292.0,641.3 288.2,639.4 284.3,637.2 278.5,633.3 274.7,630.2 272.8,628.5 269.3,624.9 267.7,623.0 264.6,618.8 263.2,616.6 260.8,612.0 259.8,609.5 258.9,607.1 258.2,604.5 257.7,602.0 257.3,599.4 257.1,596.8 257.1,594.3 257.3,591.7 257.7,589.2 258.3,586.7 259.2,584.3 260.2,581.9 261.4,579.7 262.7,577.5 264.3,575.5 266.1,573.6 268.0,571.9 270.0,570.3 272.2,568.9 274.5,567.6 277.0,566.5 279.5,565.6 282.1,564.8 284.7,564.2 287.4,563.8 290.2,563.5 295.7,563.5 298.5,563.7 304.0,564.4 306.7,565.0 312.0,566.4 314.5,567.2 319.4,569.1 326.2,572.4 332.4,575.9 336.1,578.4 339.5,580.9 345.4,585.8 350.3,590.6 355.2,596.1 358.9,601.2 361.9,605.8 365.0,611.4 370.8,623.3 372.8,626.7 374.8,629.1 376.4,630.6 377.6,631.6 380.5,633.3 382.2,634.0 384.0,634.6 386.1,635.1 388.3,635.4 390.7,635.6 393.3,635.6 396.2,635.4 399.4,635.1 402.8,634.4 406.5,633.5 413.2,631.4 417.5,629.6 420.5,628.3 426.7,625.0 429.8,623.0 432.9,620.9 437.4,617.4 440.3,614.9 443.1,612.2 446.7,608.0 449.7,603.6 451.2,600.6 451.7,599.1 452.5,596.3 452.7,594.9 452.7,592.2 452.5,591.0 451.7,588.7 451.0,587.6 449.3,585.8 447.1,584.3 444.3,583.1 441.1,582.4 437.6,582.0 433.7,582.0 427.4,582.7 423.1,583.5 416.6,585.0 410.2,587.0 404.1,589.2 398.4,591.5 391.5,594.7 385.6,597.8 379.5,601.4 375.6,604.1 371.7,607.3 368.7,610.4 366.5,613.3 364.7,616.6 363.4,619.7 362.6,623.3 362.0,627.6 362.0,632.4 362.4,636.8 363.1,640.4 364.2,643.3 365.4,645.6 367.1,647.6 369.1,649.1 371.8,650.3 374.6,651.1 378.3,651.6 382.0,651.7 385.6,651.5 389.7,651.1 393.2,650.5 397.2,649.6 401.5,648.5 406.3,647.1 411.5,645.2 417.3,642.9 421.3,641.0 425.5,638.9 429.9,636.5 434.4,633.8 439.0,630.8 445.9,625.6 450.5,621.8 452.7,619.7 456.9,615.5 458.9,613.2 462.6,608.6 464.3,606.2 467.2,601.4 468.3,598.9 469.3,596.5 470.1,594.1 470.7,591.7 471.0,589.4 471.1,587.2 471.0,585.0 470.6,583.0 469.9,581.1 469.0,579.3 467.8,577.7 466.3,576.2 464.6,574.9 462.6,573.8 460.5,572.9 458.1,572.1 455.4,571.6 452.7,571.2 449.7,571.0 446.6,571.0 443.4,571.2 440.1,571.5 433.3,572.6 426.3,574.2 415.9,577.2 406.0,580.7 393.9,585.6 381.1,591.3 367.4,598.0 357.8,603.3 353.7,605.9 350.4,608.2 347.6,610.4 345.3,612.5 336.3,621.4 334.1,623.2 332.1,624.6 328.8,626.4 325.0,627.7 321.4,628.5 317.4,628.8 314.8,628.8 312.0,628.5 307.0,627.6 303.9,626.7 301.8,625.9 297.6,623.9 293.4,621.4 291.3,619.9 289.4,618.3 287.5,616.5 285.8,614.5 284.3,612.5 282.9,610.3 281.8,608.0 280.9,605.6 280.0,602.0 279.9,599.6 280.0,597.2 280.4,594.9 280.8,593.8 281.7,591.7 282.2,590.6 283.6,588.7 284.4,587.9 285.3,587.0 287.2,585.6 289.3,584.3 291.6,583.4 294.1,582.6 296.7,582.2 299.3,582.0 303.4,582.1 306.1,582.5 310.1,583.4 312.7,584.3 316.4,585.8 318.7,587.0 322.0,588.9 324.9,591.0 327.6,593.2 329.9,595.4 332.6,598.4 334.2,600.7 336.0,603.6 337.4,606.5 338.3,609.2 338.9,611.8 339.1,614.3 339.0,616.7 338.5,619.4 337.8,621.4 336.6,623.8 334.9,625.9 333.2,627.4 331.2,628.7 329.0,629.9 326.4,630.8 323.5,631.6 320.2,632.0 317.5,632.1 314.6,632.0 311.6,631.7 308.3,631.1 306.1,630.6 302.6,629.5 300.2,628.6 295.4,626.3 293.0,624.9 290.6,623.3 288.3,621.6 286.1,619.6 284.0,617.5 282.1,615.2 279.6,611.5 278.2,608.8 277.1,606.1 276.4,603.3 276.1,601.9 275.9,599.0 275.9,597.6 276.3,594.8 276.6,593.5 277.5,590.9 278.1,589.6 279.6,587.3 280.4,586.2 281.4,585.2 283.5,583.4 285.9,581.8 288.6,580.6 291.5,579.7 294.5,579.1 297.6,578.8 302.3,578.9 305.5,579.3 310.1,580.4 313.1,581.4 317.4,583.1 321.3,585.2 325.0,587.4 328.2,589.8 331.1,592.3 333.7,594.8 336.5,598.2 338.3,600.6 340.2,603.8 341.7,606.9 343.0,610.5 343.6,613.3 343.9,616.5 343.8,619.5 343.2,622.3 342.3,624.9 341.1,627.2 339.4,629.4 337.4,631.4 334.9,633.1 332.5,634.3 329.1,635.5 326.0,636.2 322.4,636.7 318.5,636.9 315.2,636.7 311.7,636.3 308.0,635.6 305.5,635.0 301.4,633.8 298.7,632.7 295.8,631.5 293.0,630.0 290.2,628.4 287.4,626.5 284.6,624.4 282.0,622.1 279.5,619.5 277.2,616.7 275.2,613.7 274.3,612.2 272.7,608.9 272.1,607.3 271.0,603.8 270.7,602.1 270.3,598.6 270.3,596.9 270.7,593.5 271.1,591.8 272.2,588.6 272.9,587.1 274.7,584.2 275.8,582.9 277.0,581.6 279.6,579.4 281.1,578.5 284.3,576.8 287.7,575.6 291.3,574.7 295.0,574.3 296.9,574.2 300.8,574.4 304.6,574.8 310.2,576.1 313.8,577.2 318.9,579.3 323.6,581.8 327.8,584.5 331.7,587.3 336.1,591.1 338.9,593.9 342.0,597.7 344.6,601.3 347.0,605.5 348.8,609.5 350.1,614.0 350.9,618.0 351.1,621.7 350.9,625.1 350.2,628.8 349.0,632.1 347.3,635.1 346.1,636.7 345.0,637.8 342.5,639.9 339.4,641.8 336.2,643.1 332.5,644.2 328.0,644.9 323.9,645.2 319.3,645.2 315.4,644.9 311.2,644.4 306.7,643.4 303.5,642.6 298.5,641.0 295.0,639.6 291.5,638.0 287.9,636.1 284.3,634.0 280.7,631.5 277.2,628.6 275.5,627.1 272.2,623.8 269.2,620.2 266.5,616.2 265.3,614.1 263.3,609.8 262.4,607.6 261.2,603.0 260.8,600.6 260.6,598.3 260.5,595.9 260.6,593.6 260.9,591.2 261.4,589.0 262.0,586.7 262.8,584.6 263.8,582.5 265.0,580.5 266.3,578.6 267.8,576.8 269.5,575.1 271.2,573.6 273.2,572.2 275.2,570.9 277.3,569.8 279.6,568.9 281.9,568.1 284.3,567.4 289.2,566.5 291.7,566.3 296.8,566.3 299.4,566.4 304.4,567.1 306.9,567.6 311.7,568.9 314.1,569.7 318.6,571.4 324.9,574.4 328.8,576.6 332.4,578.9 335.7,581.2 338.7,583.5 344.1,588.2 346.4,590.5 349.4,593.8 352.0,596.9 354.3,599.9 357.3,604.6 360.0,609.7 362.6,615.6 365.9,624.7 367.4,628.2 369.2,631.7 371.1,634.4 372.4,635.7 373.9,637.0 375.5,638.1 377.0,638.8 379.1,639.7 380.9,640.2 385.1,640.9 388.4,641.0 391.2,641.0 394.2,640.7 397.6,640.2 403.9,638.9 411.1,636.7 415.9,634.9 419.2,633.4 426.1,629.9 429.7,627.8 433.4,625.5 438.8,621.6 444.0,617.2 448.8,612.3 451.7,608.9 453.0,607.2 455.3,603.6 456.3,601.8 457.9,598.2 458.5,596.5 459.1,593.1 459.2,591.4 459.1,589.8 458.9,588.3 458.4,586.9 457.8,585.5 457.0,584.3 456.0,583.2 454.8,582.1 453.5,581.2 452.0,580.4 450.4,579.7 448.6,579.2 444.6,578.4 442.4,578.3 437.8,578.2 435.3,578.4 430.3,579.0 425.1,580.0 419.9,581.3 414.7,582.8 409.6,584.4 404.8,586.2 397.9,588.9 387.8,593.5 382.6,596.1 378.1,598.5 374.2,600.8 369.7,603.7 367.0,605.8 363.9,608.3 360.4,611.9 358.6,614.2 357.1,616.4 355.0,620.1 350.6,629.3 348.3,633.2 347.0,634.8 345.6,636.3 344.1,637.8 342.3,639.1 339.7,640.7 337.2,641.8 334.5,642.8 331.3,643.5 327.7,644.1 324.6,644.4 320.2,644.4 316.4,644.2 312.4,643.8 308.0,643.0 303.4,641.8 300.1,640.8 295.0,638.8 291.5,637.2 288.0,635.3 284.5,633.2 281.0,630.7 277.5,627.9 274.3,624.8 272.7,623.1 269.8,619.6 268.5,617.7 266.0,613.7 265.0,611.6 263.3,607.2 262.6,605.0 261.7,600.4 261.5,598.2 261.5,595.9 261.6,593.6 261.9,591.3 262.3,589.1 263.0,587.0 263.8,584.9 264.7,582.8 265.9,580.9 267.2,579.0 268.7,577.3 270.3,575.7 272.0,574.2 273.9,572.8 275.8,571.6 277.9,570.5 280.1,569.6 284.7,568.2 287.1,567.7 291.9,567.1 294.4,567.0 299.4,567.2 301.9,567.5 306.7,568.3 309.1,568.9 313.7,570.3 320.3,572.9 326.3,576.0 330.0,578.2 333.4,580.4 336.5,582.7 339.4,585.0 342.0,587.3 345.5,590.7 347.6,592.8 350.3,596.0 352.6,599.1 354.6,601.9 357.3,606.4 359.7,611.3 361.9,617.0 365.0,626.4 366.3,629.8 367.9,633.2 369.8,636.2 371.0,637.5 372.4,638.7 374.0,639.8 375.8,640.8 377.8,641.6 379.6,642.1 383.7,642.8 386.9,642.9 389.7,642.9 392.7,642.7 396.0,642.2 402.3,640.9 409.6,638.8 416.1,636.3 423.1,633.1 426.8,631.1 430.6,628.9 436.3,625.2 441.9,620.9 447.3,616.0 450.6,612.6 452.2,610.8 455.0,607.1 456.3,605.2 458.5,601.4 459.4,599.5 460.7,595.7 461.1,593.9 461.3,592.1 461.4,590.4 461.3,588.7 460.9,587.1 460.4,585.6 459.7,584.2 458.8,582.9 457.7,581.7 456.4,580.6 455.0,579.7 453.3,578.9 451.5,578.2 449.6,577.7 447.5,577.3 442.9,576.9 440.4,576.9 435.3,577.2 432.6,577.6 427.1,578.5 421.6,579.8 416.1,581.4 410.7,583.1 405.5,585.0 400.6,586.9 393.7,589.8 387.5,592.6 381.9,595.3 377.1,597.9 371.7,601.1 368.2,603.2 364.4,606.0 362.0,607.9 360.0,609.7 356.7,613.2 355.0,615.4 353.6,617.6 348.4,626.5 346.0,630.0 344.6,631.7 343.1,633.2 341.4,634.7 339.4,636.1 337.2,637.3 334.7,638.4 331.9,639.4 329.5,640.0 326.0,640.5 323.0,640.8 319.8,640.9 316.3,640.7 312.6,640.3 309.9,639.9 305.7,638.9 302.7,638.1 298.2,636.5 295.0,635.2 291.8,633.6 288.6,631.8 285.4,629.7 282.3,627.4 277.8,623.4 275.1,620.4 272.5,617.1 270.3,613.6 269.3,611.8 267.7,607.9 267.0,606.0 266.1,602.0 265.8,600.0 265.7,595.9 265.8,593.9 266.6,590.0 267.2,588.1 268.8,584.5 269.8,582.8 271.0,581.2 272.3,579.7 273.7,578.3 276.9,575.8 278.6,574.7 282.4,572.9 286.4,571.6 288.5,571.1 292.8,570.5 297.2,570.4 299.5,570.5 303.8,571.1 306.0,571.5 310.3,572.5 316.4,574.6 322.0,577.1 325.5,579.0 328.8,581.0 331.8,583.1 334.6,585.2 339.5,589.4 341.7,591.5 344.5,594.6 348.4,599.5 350.2,602.3 351.8,604.9 353.1,607.5 354.5,610.7 355.6,613.7 356.4,616.5 357.6,622.2 358.3,628.3 358.5,634.4 358.1,640.7 357.7,643.5 357.3,645.7 356.2,649.2 355.4,650.8 354.6,652.0 353.6,653.2 352.4,654.4 350.9,655.5 349.5,656.3 347.3,657.3 344.7,658.2 342.2,658.8 339.3,659.4 335.8,659.8 332.8,660.1 325.8,660.2 318.5,659.7 313.5,659.0 309.8,658.4 306.0,657.6 301.8,656.5 295.3,654.5 290.6,652.7 285.8,650.6 280.8,648.1 278.2,646.7 273.2,643.5 270.6,641.7 265.6,637.7 263.2,635.5 258.5,630.6 256.3,628.0 254.1,625.2 252.2,622.3 250.3,619.3 248.7,616.2 247.2,612.9 245.9,609.5 244.9,606.1 244.1,602.5 243.5,599.0 243.2,595.4 243.3,591.8 243.6,588.2 244.2,584.7 245.1,581.2 246.3,577.8 247.8,574.6 249.6,571.5 251.7,568.6 254.0,565.9 256.6,563.4 259.5,561.1 262.5,559.1 265.7,557.3 269.1,555.8 272.6,554.5 276.2,553.5 279.9,552.8 283.7,552.3 287.5,552.1 291.3,552.1 295.1,552.3 298.8,552.7 302.5,553.3 306.2,554.1 309.7,555.0 316.6,557.2 319.9,558.5 326.2,561.2 332.0,564.2 339.8,568.9 346.7,573.6 350.7,576.7 354.4,579.7 357.7,582.6 362.1,586.6 368.0,592.7 374.1,599.9 383.1,611.5 386.3,615.0 388.6,617.0 391.1,618.6 393.8,619.8 396.1,620.5 399.3,621.0 402.9,621.1 406.7,620.6 410.8,619.7 415.2,618.2 418.7,616.6 422.1,614.6 425.4,612.4 428.4,609.8 431.0,607.1 432.9,604.3 433.6,602.9 434.0,601.5 434.3,600.2 434.3,598.9 433.9,597.2 433.3,596.1 432.5,595.2 430.9,594.1 429.6,593.6 428.0,593.2 426.3,592.9 423.5,592.8 421.5,592.9 418.4,593.3 412.9,594.5 407.6,596.3 401.8,598.8 396.8,601.5 392.8,604.3 389.8,607.1 388.6,608.5 387.7,609.8 387.0,611.1 386.4,612.8 386.1,614.0 386.1,615.5 386.3,616.6 386.8,618.0 387.6,619.2 388.4,620.1 389.7,621.1 390.9,621.8 392.7,622.5 394.2,623.0 396.5,623.4 399.1,623.5 401.9,623.4 404.2,623.2 407.6,622.5 410.2,621.8 413.0,620.9 415.8,619.8 418.7,618.5 421.6,616.9 426.2,613.9 428.8,611.8 430.4,610.3 432.6,608.0 433.8,606.4 435.4,603.9 436.1,602.3 436.6,600.8 436.9,599.3 436.7,597.2 436.3,595.9 435.6,594.8 434.6,593.8 433.4,593.0 431.9,592.3 430.3,591.8 427.3,591.4 425.2,591.3 423.0,591.4 420.6,591.7 417.0,592.3"/>
<path stroke="#ff0000" d="M314.0,676.6 312.2,677.2 310.2,677.7 305.8,678.1 303.4,678.2 298.3,677.8 292.6,676.9 286.4,675.4 279.8,673.3 272.7,670.4 265.3,666.8 261.5,664.7 257.6,662.4 253.7,659.8 249.8,656.9 245.9,653.8 242.1,650.4 238.3,646.7 234.7,642.8 231.2,638.5 227.9,633.9 224.8,629.1 222.0,624.0 219.6,618.6 217.5,613.0 215.9,607.2 214.7,601.2 214.0,595.2 213.9,589.0 214.3,582.9 215.4,576.8 217.0,570.8 219.2,565.0 222.1,559.5 225.5,554.3 229.4,549.5 233.8,545.1 238.6,541.2 243.9,537.8 249.5,535.0 255.3,532.7 261.3,530.9 267.5,529.6 273.8,528.9 280.1,528.7 286.3,528.9 292.5,529.5 298.5,530.5 304.5,531.8 310.2,533.3 315.8,535.1 321.1,537.1 326.3,539.3 331.2,541.6 335.9,543.9 344.6,548.7 352.4,553.5 362.7,560.4 371.3,566.6 380.8,573.8 399.6,588.6 405.8,593.7 407.3,595.3 408.3,596.6 408.8,597.7 408.9,598.8 408.7,599.7 408.2,600.8 404.9,604.9 403.7,607.0 403.5,608.1 403.5,609.0 403.9,609.9 404.6,610.5 405.4,610.9 406.4,611.2 407.5,611.3 408.8,611.2 411.7,610.5 414.3,609.4 416.5,607.8 417.5,606.9 418.1,606.1 418.6,605.1 418.7,604.3 418.5,603.5 418.1,603.0 417.5,602.6 416.5,602.2 415.2,602.1 413.7,602.2 412.1,602.5 410.5,602.9 407.5,604.3 405.1,606.0 404.3,606.9 403.6,607.9 403.3,608.8 403.3,609.5 403.6,610.3 404.2,610.9 405.1,611.3 406.2,611.6 407.4,611.7 408.8,611.6 410.3,611.3 411.8,610.8 414.6,609.6 417.0,607.9 418.0,606.8 418.7,606.0 419.1,604.9 419.2,604.1 419.0,603.3 418.6,602.7 417.9,602.2 416.7,601.9 415.3,601.8 413.7,601.9 412.0,602.2 410.3,602.7 408.6,603.4 407.1,604.2 405.7,605.1 404.6,606.0 403.7,607.0 403.0,608.1 402.7,609.0 402.7,609.8 403.1,610.6 403.7,611.2 404.8,611.7 405.9,611.9 407.2,612.0 408.7,611.9 410.3,611.6 411.9,611.1 414.9,609.8 416.4,608.8 417.4,607.9 418.6,606.8 419.2,605.9 419.7,604.7 419.8,603.9 419.6,603.1 419.2,602.5 418.5,602.0 417.3,601.6 415.8,601.4 414.1,601.5 412.3,601.9 410.5,602.4 408.7,603.1 407.0,603.9 405.5,604.9 404.3,605.9 403.3,606.9 402.5,608.1 402.1,609.0 402.1,610.0 402.6,610.9 403.2,611.5 404.3,612.1 405.5,612.3 406.9,612.4 408.5,612.3 410.2,612.0 412.0,611.4 415.1,610.0 416.7,609.0 417.9,608.0 419.1,606.8 419.8,605.8 420.3,604.6 420.4,603.7 420.2,602.9 419.8,602.2 419.0,601.7 417.7,601.2 416.1,601.1 414.3,601.2 412.3,601.5 410.3,602.1 408.4,602.9 406.6,603.8 405.0,604.8 403.7,605.9 402.7,606.9 401.8,608.2 401.5,609.2 401.5,610.3 401.9,611.2 402.6,611.9 403.8,612.5 405.1,612.8 406.6,612.8 408.2,612.7 410.0,612.4 411.9,611.8 413.8,611.1 415.3,610.3 417.1,609.2 418.3,608.2 419.6,606.9 420.4,605.8 421.0,604.5 421.1,603.5 420.9,602.6 420.4,601.9 419.6,601.3 418.2,600.8 416.5,600.7 414.5,600.8 412.4,601.2 410.2,601.8 408.1,602.6 406.2,603.6 404.6,604.7 403.1,605.8 402.0,607.0 401.1,608.3 400.8,609.4 400.8,610.5 401.2,611.6 402.1,612.4 403.4,613.0 404.8,613.2 406.4,613.3 408.2,613.2 410.2,612.8 412.2,612.1 414.2,611.3 415.8,610.5 417.7,609.2 419.0,608.2 420.1,607.0 421.0,605.9 421.7,604.4 421.8,603.4 421.7,602.4 421.1,601.6 420.3,600.9 418.8,600.4 416.9,600.2 414.8,600.4 412.5,600.8 410.2,601.5 408.0,602.3 405.9,603.4 404.1,604.5 402.6,605.7 401.4,606.9 400.4,608.4 400.0,609.5 400.0,610.8 400.4,611.9 401.4,612.8 402.7,613.4 404.2,613.7 405.8,613.8 407.7,613.7 409.8,613.3 412.0,612.7 414.2,611.8 415.9,610.9 417.9,609.6 419.4,608.5 420.9,607.0 421.8,605.7 422.5,604.1 422.6,603.0 422.4,602.0 421.8,601.1 420.8,600.4 419.2,599.9 417.1,599.7 414.8,599.9 412.3,600.4 409.8,601.2 407.4,602.2 405.2,603.3 403.3,604.5 401.8,605.8 400.5,607.1 399.5,608.6 399.1,609.8 399.1,611.2 399.7,612.3 400.7,613.3 402.1,613.9 403.7,614.3 405.5,614.4 407.5,614.3 409.7,613.8 412.0,613.2 414.4,612.2 416.2,611.3 418.4,609.9 420.0,608.6 421.6,607.0 422.6,605.6 423.2,604.3 423.5,603.0 423.3,601.8 422.8,600.9 421.8,600.1 420.1,599.5 417.9,599.2 415.4,599.4 412.7,599.9 410.0,600.7 407.5,601.7 405.1,602.9 403.0,604.2 400.9,605.9 399.6,607.2 398.6,608.9 398.2,610.1 398.2,611.5 398.8,612.8 399.8,613.8 401.4,614.5 403.0,614.9 404.9,615.0 407.1,614.9 409.4,614.5 411.9,613.8 414.4,612.8 416.4,611.8 418.8,610.3 420.5,608.9 422.3,607.1 423.4,605.6 424.1,604.2 424.4,602.8 424.3,601.5 423.7,600.5 422.7,599.6 420.8,598.9 419.0,598.7 416.3,598.8 413.4,599.2 410.5,600.0 407.7,601.1 404.6,602.6 402.3,604.0 400.1,605.8 398.7,607.3 397.6,609.0 397.1,610.6 397.2,612.1 397.9,613.4 399.1,614.4 400.8,615.2 402.5,615.6 404.6,615.7 406.9,615.5 409.4,615.1 412.1,614.3 414.8,613.2 416.9,612.1 419.5,610.5 421.3,609.0 423.3,607.1 424.4,605.5 425.2,603.9 425.5,602.4 425.3,601.0 424.6,599.9 423.4,599.0 421.3,598.3 419.3,598.0 416.4,598.2 413.2,598.8 410.1,599.7 407.0,600.9 403.7,602.5 401.3,604.1 399.0,605.9 397.6,607.5 396.5,609.3 396.0,611.1 396.1,612.6 396.8,614.0 398.1,615.1 399.9,615.9 401.8,616.3 404.4,616.5 406.9,616.3 409.7,615.7 412.5,614.8 415.5,613.6 417.8,612.4 420.5,610.6 422.5,609.0 424.2,607.3 425.5,605.5 426.3,603.7 426.7,602.1 426.5,600.6 425.7,599.3 424.4,598.3 423.6,598.0 422.2,597.6 419.9,597.4 416.7,597.5 413.3,598.2 409.9,599.2 406.6,600.5 403.0,602.3 400.4,603.9 398.0,605.9 396.5,607.6 395.3,609.6 394.7,611.4 394.9,613.1 395.1,613.8 395.8,614.7 397.2,615.9 399.1,616.8 401.1,617.2 403.4,617.3 406.1,617.2 409.0,616.7 412.1,615.8 415.2,614.5 417.7,613.2 420.8,611.3 423.0,609.6 424.9,607.7 426.4,605.8 427.4,603.9 427.9,602.0 427.8,600.4 427.6,599.6 427.1,598.9 425.8,597.8 425.0,597.4 423.4,596.9 420.4,596.6 416.8,596.8 413.1,597.6 409.3,598.7 405.8,600.2 401.9,602.1 399.2,603.9 396.7,606.1 394.8,608.2 393.7,610.3 393.3,612.2 393.3,613.1 393.5,613.9 393.9,614.7 394.6,615.7 396.2,616.9 398.3,617.8 400.5,618.2 403.6,618.3 406.5,618.0 409.6,617.4 413.0,616.3 416.4,614.8 419.2,613.4 422.4,611.2 424.7,609.3 426.6,607.2 428.2,605.0 429.1,602.9 429.4,600.9 429.3,600.0 429.1,599.2 428.4,598.1 427.7,597.4 426.8,596.9 425.8,596.4 424.1,596.0 421.4,595.7 417.5,596.0 413.4,596.8 409.3,598.0 405.4,599.6 401.2,601.7 398.3,603.6 395.4,606.0 393.4,608.2 392.2,610.4 391.8,611.5 391.7,612.5 391.7,613.5 392.0,614.7 392.5,615.8 393.1,616.5 394.8,617.8 397.0,618.8 399.3,619.3 402.5,619.5 405.6,619.2 409.0,618.5 412.6,617.4 416.4,615.9 419.3,614.3 422.9,612.0 425.5,609.9 427.7,607.6 429.5,605.3 430.6,602.9 430.9,601.8 431.1,600.7 431.0,599.7 430.8,598.7 430.1,597.4 429.3,596.7 428.4,596.1 427.4,595.6 425.4,595.0 422.5,594.8 418.2,595.0 413.7,595.9 409.1,597.3 404.1,599.4 399.6,601.7 396.5,603.8 393.6,606.3 391.5,608.7 390.3,611.0 390.0,612.1 389.8,613.2 389.8,614.2 390.1,615.5 390.7,616.7 391.4,617.5 392.5,618.5 393.4,619.1 395.9,620.1 398.4,620.6 401.9,620.8 405.2,620.5 408.9,619.8 412.8,618.6 416.9,616.9 420.1,615.1 423.3,613.1 426.2,610.8 428.8,608.3 430.9,605.7 432.3,603.1 432.7,601.8 433.0,600.6 433.0,599.4 432.8,598.3 432.1,596.8 431.3,596.0 430.4,595.2 429.3,594.6 427.2,594.0 423.9,593.6 422.1,593.6 419.2,593.9 414.2,594.8 409.2,596.3 403.5,598.6 398.6,601.2 394.6,603.9 391.6,606.5 389.4,609.1 388.7,610.4 388.0,612.0 387.7,613.2 387.6,614.7 387.8,615.7 388.2,617.1 389.0,618.3 389.7,619.1 391.0,620.1 392.1,620.8 394.8,621.8 397.5,622.2 401.3,622.4 405.0,622.0 409.0,621.2 413.3,619.8 417.8,617.9 421.4,615.9 424.8,613.7 428.1,611.1 430.9,608.3 433.1,605.3 434.0,603.8 434.6,602.3 435.1,600.9 435.3,599.5 435.2,598.2 434.9,597.0 434.0,595.4 433.1,594.5 431.9,593.8 430.5,593.2 428.1,592.6 426.3,592.3 423.2,592.3 421.1,592.5 417.8,593.0 412.1,594.3 408.8,595.4 405.6,596.6 399.7,599.3 397.1,600.8 394.1,602.7 390.4,605.6 389.0,607.0 387.4,608.9 386.5,610.2 385.7,612.0 385.3,613.3 385.1,614.9 385.1,616.4 385.5,617.9 386.2,619.2 387.2,620.5 388.4,621.6 390.0,622.5 391.8,623.3 393.4,623.7 397.0,624.3 401.2,624.3 405.3,623.8 409.7,622.7 414.5,621.1 418.5,619.3 423.5,616.5 427.3,613.8 430.9,610.8 433.9,607.6 435.2,605.9 436.2,604.2 437.1,602.5 437.6,600.8 438.0,599.2 438.0,597.7 437.5,595.6 436.8,594.4 435.8,593.4 433.8,592.1 432.2,591.5 430.3,591.0 428.3,590.8 424.9,590.7 419.9,591.2 417.4,591.7 413.5,592.6 407.3,594.7 403.7,596.1 400.4,597.6 394.6,600.7 392.1,602.3 389.3,604.4 387.5,606.0 386.0,607.5 384.7,609.0 383.4,610.9 382.7,612.3 382.1,614.1 381.9,615.4 381.9,617.1 382.0,618.3 382.5,619.8 383.3,621.3 384.4,622.6 385.7,623.7 387.3,624.7 389.2,625.6 390.8,626.1 393.9,626.7 396.8,626.9 399.9,626.8 403.4,626.4 407.2,625.6 410.2,624.8 414.5,623.3 417.8,621.9 421.2,620.2 424.6,618.2 427.9,616.0 431.1,613.5 434.0,610.9 436.6,608.0 438.7,605.1 439.9,603.1 441.0,600.2 441.4,598.3 441.4,596.6 441.3,595.7 440.9,594.2 440.1,592.8 438.9,591.5 437.4,590.5 434.6,589.4 432.4,588.9 429.9,588.7 427.3,588.7 423.1,589.0 420.2,589.5 415.8,590.4 411.4,591.7 407.1,593.2"/>
<path stroke="#00bfbf" d="M358.9,663.7 357.5,663.5 355.9,663.6 349.3,665.3 344.3,666.2 340.6,666.6 336.0,666.9 330.4,666.9 325.0,666.7 318.6,666.1 313.1,665.4 307.0,664.2 302.6,663.1 295.5,661.1 290.4,659.3 285.0,657.1 279.5,654.4 273.8,651.3 270.9,649.5 265.1,645.5 262.2,643.2 259.4,640.8 256.6,638.2 253.9,635.5 251.3,632.5 248.8,629.4 246.4,626.1 244.2,622.7 242.2,619.1 240.5,615.3 238.9,611.5 237.6,607.5 236.6,603.4 235.9,599.2 235.6,595.0 235.6,590.8 235.9,586.6 236.6,582.4 237.7,578.3 239.1,574.4 241.0,570.6 243.1,567.0 245.7,563.6 248.5,560.4 251.6,557.6 255.0,555.0 258.7,552.7 262.5,550.8 266.5,549.1 270.7,547.8 275.0,546.9 279.3,546.2 283.7,545.8 288.1,545.8 292.5,546.0 296.9,546.4 301.2,547.1 305.4,548.0 309.5,549.0 313.5,550.2 321.2,553.0 324.9,554.6 331.7,557.9 335.0,559.7 341.0,563.2 346.5,566.8 351.5,570.3 360.0,576.9 368.5,584.3 373.8,589.3 378.1,593.7 388.6,605.5 391.6,608.6 393.4,610.3 395.2,611.7 397.0,612.8 398.4,613.5 400.8,614.4 402.8,614.8 405.4,615.0 407.6,614.8 410.5,614.4 412.8,613.7 415.1,612.8 417.4,611.7 420.0,610.1 421.9,608.6 423.8,606.6 424.9,604.9 425.7,602.9 425.7,601.5 425.3,600.2 424.3,599.2 422.9,598.4 420.5,597.9 417.6,597.9 414.5,598.3 411.2,599.1 408.0,600.2 405.1,601.6 401.9,603.4 399.8,605.0 397.8,606.9 396.4,608.8 395.7,610.6 395.6,612.3 396.2,613.7 397.3,614.9 398.9,615.9 401.1,616.5 403.2,616.7 405.7,616.6 408.4,616.2 411.3,615.5 413.7,614.6 416.7,613.2 419.0,611.9 421.7,610.0 423.6,608.2 425.1,606.4 426.3,604.6 426.9,602.9 427.0,601.2 426.6,599.8 425.5,598.6 424.0,597.8 423.0,597.5 421.4,597.2 418.3,597.2 414.8,597.6 411.2,598.5 407.8,599.8 404.6,601.2 401.2,603.2 398.8,604.9 396.7,606.9 395.2,608.9 394.4,610.9 394.3,612.6 394.5,613.4 394.8,614.2 395.5,615.1 396.2,615.7 398.0,616.7 400.3,617.4 402.6,617.6 405.2,617.5 408.1,617.1 411.2,616.3 414.4,615.1 417.6,613.6 420.2,612.0 423.0,609.9 425.0,608.0 426.6,606.0 427.8,604.0 428.3,602.1 428.3,600.3 428.0,599.6 427.6,598.8 426.7,597.9 425.0,597.0 423.9,596.7 422.1,596.4 419.4,596.4 415.6,596.8 411.7,597.7 407.2,599.3 403.7,600.9 400.1,603.0 397.6,604.9 395.3,607.1 393.8,609.2 393.0,611.3 392.8,612.2 392.8,613.1 393.0,614.0 393.5,615.1 394.3,616.0 395.0,616.7 397.0,617.7 399.4,618.4 401.9,618.6 404.7,618.6 407.8,618.1 411.2,617.2 414.0,616.2 417.5,614.6 420.3,613.0 423.5,610.7 425.8,608.6 427.6,606.5 429.0,604.3 429.8,602.1 429.9,601.1 429.9,600.1 429.6,599.2 429.2,598.4 428.3,597.4 427.5,596.8 426.5,596.3 425.4,595.9 423.5,595.6 422.0,595.5 419.7,595.5 415.6,596.1 411.3,597.1 407.2,598.6 402.6,600.7 398.8,603.0 395.7,605.3 393.4,607.7 391.9,610.0 391.5,611.1 391.2,612.1 391.1,613.1 391.2,614.1 391.5,615.0 392.0,616.1 392.9,617.1 393.7,617.8 395.8,618.9 398.5,619.6 401.2,619.8 404.8,619.7 408.2,619.1 411.9,618.0 414.9,616.9 418.8,615.0 421.8,613.2 424.6,611.1 427.1,608.9 429.2,606.5 430.7,604.0 431.5,601.6 431.6,600.5 431.6,599.4 431.3,598.5 430.9,597.6 429.8,596.4 428.9,595.8 427.7,595.2 426.5,594.9 424.3,594.5 421.0,594.5 416.4,595.0 411.7,596.2 406.2,598.1 401.3,600.4 397.2,602.9 393.9,605.5 391.6,608.0 390.0,610.4 389.6,611.6 389.3,612.7 389.2,613.8 389.3,615.1 389.6,616.1 390.3,617.3 391.3,618.3 392.1,619.0 394.4,620.2 397.3,621.0 400.1,621.2 404.0,621.1 407.7,620.5 411.6,619.4 414.9,618.1 419.1,616.1 422.5,614.1 425.6,611.9 428.4,609.4 430.7,606.7 432.5,604.0 433.1,602.6 433.5,601.3 433.6,600.0 433.6,598.8 433.3,597.7 432.8,596.7 431.7,595.4 430.6,594.7 429.4,594.1 427.9,593.7 425.5,593.3 421.8,593.3 419.8,593.5 416.7,594.0 411.4,595.3 408.4,596.3 405.4,597.5 400.0,600.0 395.6,602.8 392.1,605.5 389.5,608.2 388.6,609.5 387.9,610.8 387.3,612.0 387.0,613.6 386.9,614.7 387.1,616.2 387.4,617.2 388.1,618.5 389.1,619.6 390.1,620.4 391.6,621.3 392.8,621.8 395.9,622.6 399.6,622.9 403.2,622.8 407.1,622.1 411.4,620.9 415.1,619.6 419.7,617.4 423.4,615.2 426.9,612.7 430.1,609.9 432.7,606.9 433.8,605.3 434.7,603.8 435.4,602.2 435.8,600.8 436.0,598.6 435.9,597.3 435.4,596.1 434.3,594.6 433.2,593.7 431.9,593.0 430.3,592.5 427.6,592.0 425.6,591.8 423.5,591.9 421.3,592.1 417.8,592.6 412.0,594.0 408.5,595.1 405.2,596.4 399.2,599.2 396.5,600.7 393.4,602.7 389.7,605.6 388.2,607.1 387.0,608.5 386.0,609.9 385.0,611.7 384.5,613.0 384.2,614.7 384.2,615.9 384.4,617.5 384.9,618.9 385.7,620.2 386.8,621.4 388.2,622.5 389.8,623.4 391.3,624.0 394.6,624.8 398.7,625.1 402.6,624.8 406.9,624.1 411.6,622.7 415.6,621.2 420.8,618.7 424.9,616.3 428.9,613.4 432.4,610.2 435.4,606.7 437.1,604.1 438.0,602.3 438.6,600.6 439.0,598.1 438.8,596.6 438.4,595.2 437.7,593.9 437.2,593.3 436.0,592.3 434.5,591.5 432.8,590.9 429.7,590.3 427.5,590.1 425.1,590.2 422.5,590.4 418.6,591.0 415.9,591.6 411.9,592.7 408.0,594.0 404.3,595.4 400.8,597.0 397.5,598.6 394.6,600.2 391.2,602.4 388.9,604.0 387.0,605.6 385.4,607.1 383.7,609.2 382.6,610.7 381.6,612.6 381.1,614.0 380.8,615.8 380.7,617.5 381.0,619.1 381.5,620.6 382.6,622.4 383.7,623.7 385.2,624.9 386.9,625.8 388.9,626.7 391.2,627.3 393.1,627.6 395.3,627.8 397.6,627.8 400.1,627.7 402.8,627.4 407.7,626.4 413.0,624.7 418.8,622.3 423.5,619.8 428.1,616.8 432.5,613.3 434.6,611.5 436.5,609.5 438.2,607.5 439.6,605.4 441.4,602.3 442.2,600.3 442.6,598.3 442.7,596.4 442.6,595.5 442.2,593.8 441.8,593.1 440.8,591.6 440.2,591.0 438.7,589.9 436.8,589.1 434.6,588.4 430.9,588.0 428.1,587.9 423.7,588.3 420.7,588.8 416.0,589.8 411.4,591.1 406.9,592.6 402.6,594.3 397.4,596.7 393.9,598.5 389.8,600.9 386.3,603.3 383.5,605.6 381.1,607.8 379.3,610.0 378.0,612.1 377.0,614.1 376.3,616.6 376.1,618.9 376.4,621.1 377.0,623.1 378.0,625.0 379.4,626.8 381.2,628.3 383.4,629.7 386.1,630.7 388.5,631.3 391.4,631.7 394.6,631.9 397.2,631.8 400.1,631.5 405.4,630.5 411.3,628.8 417.8,626.2 423.2,623.6 428.7,620.3 434.0,616.3 436.6,614.2 438.9,611.9 441.2,609.5 443.1,607.0 445.5,603.3 446.7,600.7 447.2,599.5 447.8,597.1 447.9,595.9 447.9,593.7 447.7,592.6 446.9,590.7 446.3,589.8 444.9,588.2 444.0,587.6 443.0,587.0 440.6,586.0 437.9,585.3 434.9,584.9 431.6,584.9 428.1,585.1 424.5,585.5 418.9,586.7 415.2,587.6 409.7,589.3 404.4,591.2 399.5,593.3 395.0,595.3 389.6,598.1 385.0,600.8 381.2,603.4 378.1,605.9 375.5,608.3 373.6,610.6 371.7,613.4 370.5,616.1 369.7,618.6 369.3,621.6 369.4,624.4 370.0,627.0 371.1,629.8 372.4,632.1 373.9,633.8 376.1,635.5 378.3,636.8 381.1,637.8 383.6,638.4 387.3,638.9 390.7,639.0 393.5,638.9 396.7,638.5 400.1,638.0 403.8,637.1 410.7,635.1 416.8,632.7 423.3,629.6 430.1,625.8 433.6,623.5 437.0,621.0 441.9,616.9 446.5,612.4 450.5,607.6 452.7,604.3 453.7,602.6 455.3,599.3 455.8,597.7 456.6,594.4 456.7,592.9 456.7,591.4 456.6,590.0 456.2,588.6 455.7,587.3 455.1,586.1 454.2,585.0 453.2,583.9 452.1,583.0 450.8,582.2 447.7,580.9 446.0,580.4 442.2,579.8 440.1,579.7 435.8,579.7 431.1,580.2 426.3,580.9 421.4,582.0 416.6,583.3 411.8,584.8 404.9,587.2 400.5,588.9 394.4,591.5 388.9,594.1 384.0,596.6 377.2,600.5 373.8,602.6 370.9,604.7 368.4,606.7 366.3,608.6 364.5,610.4 362.9,612.1 360.6,615.5 358.6,619.3 356.9,623.4 354.0,632.3 352.3,636.0 351.2,638.0 350.2,639.5 348.8,641.2 347.4,642.6 345.4,644.1 343.5,645.3 340.8,646.6 338.2,647.6 335.2,648.4 332.6,648.9 328.8,649.4 325.6,649.6 320.7,649.5 316.7,649.3 312.2,648.7 307.4,647.8 302.2,646.4 298.6,645.3 292.9,643.1 288.9,641.2 284.9,639.1 280.9,636.6 276.9,633.8 273.0,630.5 269.3,626.9 267.5,624.9 264.2,620.7 262.7,618.5 260.0,613.8 258.9,611.3 257.9,608.8 257.0,606.2 256.4,603.5 255.9,600.8 255.6,598.2 255.5,595.5 255.6,592.8 255.9,590.1 256.4,587.5 257.1,584.9 258.1,582.4 259.2,580.0 260.6,577.8 262.1,575.6 263.9,573.5 265.8,571.7 267.8,569.9 270.1,568.4 272.4,567.0 274.9,565.7 277.5,564.7 280.2,563.8 282.9,563.1 285.7,562.6 288.6,562.3 291.5,562.1 297.3,562.3 300.1,562.5 305.8,563.5 308.6,564.2 314.0,565.8 316.5,566.7 321.5,568.8 328.4,572.2 334.6,576.0 338.3,578.5 341.7,581.1 344.8,583.6 348.9,587.4 351.3,589.8 354.5,593.2 358.9,598.6 362.3,603.4 365.8,609.3 372.4,621.6 374.7,625.0 376.8,627.5 379.4,629.6 382.4,631.4 384.2,632.0 386.0,632.6 389.6,633.3 392.0,633.5 394.6,633.5 397.5,633.3 400.5,632.9 406.2,631.8 412.5,629.8 416.6,628.2 419.4,627.0 425.2,624.0 431.0,620.3 433.9,618.2 436.7,615.9 439.3,613.6 441.8,611.0 445.1,607.1 447.7,603.0 448.9,600.3 449.4,599.0 450.0,596.4 450.2,595.1 450.1,592.7 449.8,591.6 449.0,589.5 448.3,588.6 446.7,586.9 445.7,586.2 443.3,585.0 440.5,584.2 437.4,583.7 433.9,583.5 430.2,583.7 424.4,584.5 420.4,585.3 414.3,586.8 408.5,588.7 402.9,590.8 397.7,593.0 391.5,595.9 386.2,598.8 381.7,601.6 377.9,604.3 374.9,606.8 372.5,609.2 370.1,612.1 368.5,614.9 367.3,617.5 366.5,620.6 366.1,624.0 366.3,627.2 366.8,630.3 367.7,633.1 369.1,635.6 370.6,637.6 372.5,639.3 374.9,640.9 377.4,641.9 380.3,642.7 383.8,643.2 387.1,643.3 389.9,643.2 394.1,642.8 397.5,642.3 401.4,641.5 405.5,640.3 410.1,638.9 413.3,637.7 418.4,635.6 422.0,633.9 425.6,632.0 429.4,629.9 433.2,627.5 437.0,624.9 442.7,620.5 448.1,615.6 451.4,612.0 453.0,610.2 455.8,606.5 457.0,604.6 459.2,600.7 460.0,598.8 461.2,595.0 461.6,593.2 461.8,591.4 461.8,589.6 461.6,588.0 461.2,586.4 460.6,584.9 459.8,583.5 458.8,582.3 457.6,581.1 456.3,580.1 454.7,579.2 453.0,578.4 451.1,577.8 449.1,577.3 446.9,577.0 442.2,576.7 439.7,576.7 434.4,577.1 431.7,577.5 426.1,578.6 417.8,580.7 412.3,582.4 407.0,584.3 397.1,588.1 386.5,592.9 381.0,595.6 376.2,598.2 372.1,600.6 368.5,602.8 365.5,604.9 362.1,607.5 358.2,611.1 356.6,612.8 354.8,615.0 352.3,618.8 347.7,626.6 345.2,630.1 342.6,632.9 340.8,634.3 339.3,635.4 337.2,636.7 334.7,637.8 331.9,638.7 329.5,639.3 327.0,639.8 324.2,640.1 321.1,640.3 317.8,640.2 314.1,640.0 311.6,639.6 307.6,638.8 304.7,638.1 300.3,636.7 297.2,635.6 294.1,634.2 291.0,632.5 287.8,630.7 284.7,628.6 280.2,624.9 277.3,622.1 274.7,619.0 272.3,615.7 271.2,614.0 269.3,610.4 268.5,608.5 267.3,604.6 266.9,602.7 266.4,598.7 266.3,596.7 266.7,592.8 267.0,590.9 268.2,587.2 269.1,585.5 271.1,582.2 272.3,580.6 275.1,577.9 276.7,576.7 280.1,574.6 283.9,573.0 287.9,571.8 292.1,571.2 294.3,571.0 298.6,571.0 302.9,571.4 305.1,571.8 309.3,572.7 313.3,574.0 319.1,576.3 324.4,578.9 329.3,581.9 333.6,584.9 338.5,589.1 342.6,593.2 346.7,598.2 349.9,602.8 352.2,607.2 354.2,611.9 355.7,616.9 356.3,619.5 356.8,622.6 357.2,628.1 357.0,633.8 356.7,636.8 356.2,639.1 355.6,641.3 355.0,643.1 354.1,645.1 353.2,646.6 352.0,648.1 351.0,649.2 349.7,650.3 348.2,651.3 345.0,652.9 340.8,654.4 336.2,655.3 330.4,655.9 324.5,656.0 319.0,655.7 314.3,655.2 310.9,654.6 305.4,653.5 301.5,652.5 297.4,651.2 293.1,649.6 288.7,647.8 284.1,645.5 279.5,642.9 277.2,641.4 272.5,638.2 270.2,636.3 265.7,632.3 263.6,630.2 259.5,625.4 257.6,622.9 255.9,620.2 254.2,617.4 252.8,614.6 251.5,611.6 250.3,608.5 249.4,605.4 248.7,602.2 248.2,599.0 248.0,595.8 248.0,592.6 248.3,589.3 248.8,586.2 249.6,583.1 250.7,580.0 252.0,577.1 253.6,574.3 255.5,571.7 257.5,569.2 259.8,566.9 262.3,564.8 265.0,563.0 267.8,561.3 270.8,559.9 274.0,558.7 277.2,557.7 280.5,556.9 283.9,556.4 287.3,556.1 290.7,556.0 294.1,556.1 297.5,556.3 300.9,556.8 307.6,558.1 313.9,560.0 317.0,561.1 322.8,563.5 325.6,564.8 330.9,567.5 335.8,570.4 340.2,573.3 344.3,576.2 348.0,579.1 354.4,584.6 360.8,590.9 363.9,594.4 367.4,598.6"/>
<path stroke="#bf00bf" d="M350.4,689.6 349.8,694.3 349.0,697.8M287.6,697.4 279.3,694.8 270.4,691.5 265.6,689.5 260.8,687.3 255.8,684.8 250.6,682.0 245.4,678.9 240.1,675.4 234.8,671.6 229.5,667.4 224.2,662.7 219.0,657.6 214.0,652.1 209.3,646.1 204.8,639.6 200.7,632.6 197.1,625.2 194.1,617.4 191.6,609.2 190.0,600.7 189.1,592.0 189.1,583.2 189.9,574.4 191.8,565.7 194.6,557.2 198.3,549.1 203.0,541.4 208.6,534.4 214.9,528.0 221.9,522.5 229.5,517.7 237.6,513.9 246.1,510.9 254.8,508.9 263.6,507.7 272.4,507.3 281.2,507.6 289.8,508.6 298.2,510.2 306.4,512.2 314.2,514.7 321.7,517.4 328.8,520.4 335.5,523.6 342.0,526.9 348.0,530.2 353.7,533.5 359.1,536.8 368.9,543.1 391.9,558.6 400.4,564.2 405.3,567.2 411.3,570.7 421.8,576.3 423.1,577.3 423.4,577.8 423.4,578.0 423.0,578.5 421.9,579.3 412.5,583.7 406.8,586.5 401.0,589.6 395.6,592.9 391.7,595.6 387.4,598.9 383.9,602.1 381.1,605.1 379.8,606.9 378.7,608.6 377.1,611.9 376.3,615.0 376.1,616.5 376.1,618.4 376.2,619.8 376.7,621.5 377.3,623.1 378.0,624.3 379.0,625.8 380.0,626.8 382.4,628.6 384.3,629.6 385.9,630.2 388.3,630.9 390.3,631.2 392.6,631.4 395.0,631.5 397.7,631.4 400.6,631.1 405.9,630.0 411.8,628.3 418.2,625.7 423.6,623.0 429.0,619.7 434.2,615.8 436.7,613.6 439.0,611.4 442.2,607.8 443.9,605.3 445.4,602.8 446.5,600.4 446.9,599.2 447.4,596.8 447.5,595.7 447.4,593.5 447.1,592.5 446.3,590.6 445.7,589.7 444.2,588.2 442.2,587.0 439.9,586.1 437.2,585.5 432.6,585.1 429.2,585.2 423.8,585.9 418.3,587.0 412.8,588.5 407.5,590.3 402.4,592.2 396.3,594.9 390.8,597.7 386.1,600.4 382.2,603.0 379.0,605.5 376.4,607.9 374.3,610.2 372.8,612.4 371.6,614.6 370.6,617.2 370.1,619.7 369.9,622.6 370.3,625.3 371.0,627.8 372.1,630.2 373.7,632.3 375.7,634.2 377.8,635.6 380.4,636.7 383.4,637.6 386.2,638.0 388.5,638.2 392.1,638.2 395.0,638.0 398.2,637.6 401.7,637.0 408.3,635.3 412.6,633.8 415.6,632.6 421.9,629.8 428.5,626.1 431.9,624.0 435.2,621.6 438.5,619.1 441.7,616.4 446.1,612.0 450.0,607.3 452.1,604.0 453.1,602.4 454.5,599.1 455.1,597.5 455.8,594.4 455.9,592.9 455.8,591.5 455.7,590.1 455.3,588.8 454.8,587.5 454.1,586.3 453.3,585.3 452.3,584.3 451.1,583.4 449.9,582.6 448.4,581.9 445.2,580.9 443.3,580.6 439.4,580.2 435.1,580.2 430.6,580.7 425.9,581.4 421.2,582.5 416.4,583.7 411.7,585.1 407.2,586.7 400.7,589.2 391.1,593.4 386.1,595.9 381.7,598.3 377.9,600.6 374.5,602.7 371.7,604.8 368.5,607.4 366.5,609.2 364.3,611.6 363.0,613.3 361.5,615.6 360.4,617.8 359.4,619.9 357.9,624.5 355.0,634.5 353.3,638.8 352.1,641.0 350.6,643.0 349.1,644.7 347.3,646.2 344.7,647.8 341.4,649.3 337.3,650.6 333.1,651.4 328.1,651.9 323.5,652.0 318.1,651.7 313.6,651.2 308.7,650.4 305.3,649.6 299.7,648.0 295.8,646.6 291.7,645.0 287.6,643.1 283.3,640.8 279.1,638.1 274.8,635.1 272.8,633.4 268.7,629.7 266.8,627.7 263.1,623.4 261.4,621.1 258.4,616.1 257.1,613.6 255.9,610.9 254.9,608.1 254.0,605.3 253.4,602.5 253.0,599.6 252.7,596.7 252.7,593.8 252.9,591.0 253.3,588.1 254.0,585.3 254.9,582.6 256.0,580.0 257.4,577.5 258.9,575.1 260.7,572.8 262.7,570.7 264.8,568.8 267.2,567.0 269.6,565.5 272.3,564.1 275.0,562.9 277.8,561.9 280.8,561.1 283.8,560.5 286.8,560.1 289.9,559.9 293.0,559.8 299.1,560.2 305.2,561.2 308.1,561.9 313.9,563.6 316.6,564.6 321.9,566.8 329.3,570.4 335.8,574.4 339.7,577.1 343.3,579.8 349.5,585.0 352.2,587.6 355.8,591.2 360.6,596.8 364.3,601.8 367.8,607.0 375.0,619.1 377.2,622.1 379.2,624.2 381.9,626.4 384.4,627.9 386.1,628.6 388.0,629.3 391.5,630.0 393.8,630.2 396.3,630.2 400.9,629.9 406.2,628.9 411.9,627.2 418.2,624.8 423.3,622.1 428.6,619.0 433.6,615.2 435.9,613.1 438.2,611.0 441.1,607.5 442.8,605.2 444.2,602.8 445.6,599.3 446.0,597.1 446.1,596.0 446.0,593.9 445.8,593.0 445.0,591.2 444.4,590.4 443.0,589.0 442.1,588.3 440.0,587.3 437.6,586.6 434.9,586.1 430.4,585.9 427.1,586.1 423.6,586.6 420.1,587.2 414.9,588.5 409.7,590.1 404.7,591.9 400.1,593.8 395.8,595.8 391.9,597.8 387.4,600.4 383.5,603.0 380.4,605.4 377.8,607.8 375.8,610.1 374.3,612.3 373.2,614.4 372.3,617.0 371.8,619.4 371.8,621.8 372.1,624.0 372.9,626.5 373.9,628.5 375.5,630.6 377.3,632.2 379.4,633.6 381.4,634.5 384.4,635.4 387.1,636.0 390.2,636.2 392.8,636.2 395.7,636.0 398.8,635.7 404.7,634.5 411.2,632.6 415.5,631.0 418.5,629.7 424.6,626.6 431.0,622.8 434.1,620.6 437.2,618.2 440.2,615.6 443.0,612.9 446.8,608.6 449.9,604.1 451.5,601.1 452.1,599.6 453.0,596.7 453.3,595.2 453.4,592.5 453.2,591.2 452.5,588.8 451.9,587.7 451.1,586.7 450.2,585.7 448.0,584.2 445.3,582.9 442.1,582.1 440.4,581.9 436.6,581.6 432.6,581.8 428.3,582.2 423.9,583.0 417.3,584.6 410.7,586.6 404.5,588.8 396.8,592.0 390.0,595.1 384.2,598.2 378.2,601.9 374.4,604.6 370.6,607.8 367.7,610.8 365.2,614.2 363.5,617.5 362.2,621.2 361.3,625.6 360.8,630.7 360.7,636.5 361.1,642.2 361.7,645.9 362.5,648.6 363.7,651.0 365.2,652.8 367.1,654.2 369.8,655.3 372.9,656.0 376.4,656.3 380.8,656.2 385.4,655.8 389.8,655.1 394.9,654.0 400.8,652.5 405.8,650.9 411.3,648.9 417.4,646.4 423.9,643.3 428.6,640.8 433.4,638.1 438.3,635.0 443.3,631.5 448.4,627.7 453.4,623.4 455.8,621.2 460.5,616.5 462.7,614.0 466.8,608.8 468.6,606.2 470.3,603.5 471.8,600.8 473.1,598.0 474.2,595.3 475.0,592.6 475.6,590.0 475.9,587.4 476.0,585.0 475.8,582.6 475.2,580.3 474.4,578.2 473.3,576.3 471.8,574.6 470.1,573.0 468.1,571.6 465.8,570.5 463.2,569.6 460.4,568.8 457.4,568.4 454.2,568.1 450.8,568.0 447.3,568.2 443.6,568.5 439.9,569.0 432.2,570.5 424.5,572.5 413.1,576.1 402.3,580.1 389.5,585.5 376.1,591.5 362.0,598.3 352.2,603.4 345.5,607.4 340.1,611.2 331.8,618.0 328.5,620.2 325.9,621.5 323.7,622.4 320.6,623.3 318.0,623.7 315.8,623.8 313.6,623.7 309.7,623.3 305.5,622.3 301.3,620.6 298.7,619.3 297.1,618.2 293.9,615.8 291.1,613.0 288.7,609.8 287.8,608.1 287.0,606.4 286.4,604.6 286.0,602.8 285.8,601.0 285.9,599.2 286.4,596.6 287.0,595.0 287.8,593.4 289.5,591.4 291.5,589.7 293.1,588.8 294.9,588.0 296.7,587.4 298.6,587.1 300.7,586.9 303.7,586.9 305.8,587.1 308.9,587.8 310.9,588.4 313.8,589.5 315.7,590.3 318.3,591.8 320.7,593.4 322.9,595.1 324.9,596.9 326.6,598.8 328.0,600.6 329.3,602.5 330.3,604.4 331.1,606.2 331.6,607.9 332.1,610.2 332.3,611.9 332.2,613.9 331.7,615.9 331.0,617.7 330.1,619.4 328.8,620.9 327.2,622.3 325.9,623.1 323.9,624.1 322.1,624.8 319.6,625.4 317.5,625.6 315.3,625.7 312.9,625.7 308.7,625.1 304.2,623.8 301.4,622.7 299.5,621.9 295.9,619.7 292.4,617.1 289.2,614.0 287.9,612.3 286.6,610.4 285.5,608.5 284.7,606.5 283.8,603.5 283.5,601.4 283.4,599.4 283.8,596.4 284.4,594.6 285.3,592.8 287.0,590.4 289.3,588.4 291.1,587.3 293.0,586.4 295.0,585.7 297.2,585.2 299.4,585.0 302.9,584.9 305.2,585.2 308.7,585.9 310.9,586.5 314.2,587.7 316.3,588.7 319.2,590.3 321.9,592.1 324.3,594.0 326.5,595.9 328.4,597.9 330.0,600.0 331.8,602.7 332.8,604.6 333.9,607.2 334.4,609.1 334.9,611.5 334.9,613.8 334.7,615.9 334.2,617.9 333.4,619.8 332.3,621.5 330.9,623.1 329.2,624.5 327.3,625.7 325.0,626.7 323.1,627.3 320.4,627.9 318.1,628.1 315.6,628.2 313.0,628.1 308.3,627.3 305.4,626.6 303.3,625.9 300.2,624.7 298.2,623.7 294.1,621.3 292.1,619.8 290.2,618.3 288.4,616.5 286.7,614.7 285.1,612.7 283.8,610.6 282.6,608.4 281.7,606.1 280.8,602.6 280.5,600.3 280.6,598.0 281.2,594.6 282.0,592.5 282.6,591.5 283.8,589.6 284.5,588.7 285.3,587.9 287.1,586.4 289.1,585.2 291.3,584.1 293.7,583.4 296.2,582.8 298.7,582.6 302.7,582.6 305.3,582.9 307.9,583.4 310.5,584.1 314.2,585.4 316.6,586.5 319.9,588.2 323.0,590.2 325.7,592.3 328.2,594.5 331.0,597.4 332.8,599.6 334.7,602.5 335.9,604.7 337.0,607.4 337.8,610.1 338.2,612.6 338.3,615.0 338.1,617.3 337.6,619.4 336.6,621.9 335.2,624.1 333.7,625.7 332.0,627.2 329.9,628.4 327.6,629.5 324.9,630.4 321.9,631.0 319.4,631.2 316.7,631.3 313.9,631.2 308.7,630.5 305.4,629.7 303.2,629.0 299.7,627.6 297.3,626.5 292.7,623.9 290.4,622.3 288.2,620.5 286.1,618.6 284.1,616.4 282.3,614.2 280.7,611.8 279.3,609.2 278.2,606.6 277.4,603.9 277.1,602.5 276.8,599.8 276.8,598.4 277.1,595.7 277.3,594.4 278.1,591.9 278.6,590.7 280.0,588.4 280.8,587.3 281.6,586.3 283.6,584.4 285.9,582.9 288.4,581.6 291.1,580.6 294.0,580.0 296.9,579.6 301.5,579.6 304.6,579.9 307.6,580.5 310.6,581.2 314.8,582.7 318.9,584.6 322.6,586.7 325.9,588.9 328.9,591.3 331.6,593.8 334.6,597.0 336.5,599.5 338.6,602.7 340.2,605.7 341.4,608.7 342.2,611.5 342.7,614.7 342.7,617.8 342.3,620.7 341.6,623.3 340.4,625.8 338.8,628.0 336.9,630.0 334.5,631.7 332.2,633.0 329.6,634.0 326.6,634.8 323.3,635.4 319.6,635.7 316.5,635.7 313.3,635.4 309.8,634.9 307.3,634.4 303.5,633.3 300.9,632.4 295.4,630.1 292.7,628.6 290.0,627.0 287.3,625.1 284.7,623.0 282.2,620.7 279.9,618.2 276.8,614.0 275.0,611.0 273.6,607.9 272.6,604.6 272.2,603.0 271.7,599.7 271.7,598.0 271.9,594.7 272.2,593.1 273.1,590.0 273.7,588.5 275.3,585.7 276.3,584.4 277.4,583.2 279.8,581.0 281.1,580.0 284.1,578.3 287.2,577.0 290.6,576.1 294.2,575.5 297.8,575.3 301.5,575.5 306.9,576.3 310.5,577.2 315.6,579.0 320.3,581.1 324.7,583.6 328.6,586.2 332.2,589.0 335.3,591.8 338.8,595.4 341.6,599.1 344.4,603.4 346.5,607.5 347.9,611.3 348.7,614.8 349.2,618.7 349.2,622.3 348.7,625.7 347.6,629.2 346.3,631.9 344.5,634.5 342.1,636.7 339.2,638.8 336.3,640.2 332.8,641.4 328.6,642.3 324.8,642.8 320.5,642.9 317.0,642.8 313.1,642.4 308.9,641.7 304.4,640.6 299.7,639.1 296.5,637.9 291.4,635.6 288.1,633.7 284.7,631.6 281.3,629.1 278.1,626.4 276.5,624.9 273.5,621.8 270.8,618.3 268.4,614.6 267.3,612.6 265.5,608.5 264.8,606.4 263.7,602.2 263.4,600.0 263.3,595.6 263.4,593.5 263.7,591.4 264.2,589.3 264.8,587.2 265.6,585.2 266.6,583.3 267.7,581.5 269.0,579.8 270.4,578.1 271.9,576.6 273.6,575.2 275.3,574.0 277.2,572.8 281.3,570.9 285.7,569.6 287.9,569.1 292.6,568.5 294.9,568.4 299.6,568.6 302.0,568.9 306.7,569.7 308.9,570.3 313.4,571.6 317.6,573.2 321.6,575.0 325.4,577.0 329.0,579.0 332.2,581.2 335.3,583.4 340.6,587.8 342.9,590.0 346.0,593.3 348.6,596.4 350.9,599.3 352.8,602.2 354.4,604.9 356.9,609.9 358.8,614.4 360.6,620.4 363.0,630.6 364.1,634.5 365.5,638.0 366.4,639.7 367.2,641.0 368.5,642.5 370.0,643.8 371.7,645.0 373.4,645.8 375.4,646.5 377.6,647.0 380.2,647.4 382.5,647.6 385.8,647.6 389.7,647.3 394.2,646.7 398.0,646.0 402.2,644.9 406.8,643.6 411.7,641.8 415.3,640.5 420.9,637.9 424.9,636.0 428.9,633.8 433.1,631.3 437.3,628.5 441.6,625.4 447.8,620.3 451.8,616.5 453.7,614.5 457.2,610.4 458.8,608.3 461.7,604.0 462.9,601.8 464.9,597.5 465.7,595.3 466.2,593.2 466.5,591.1 466.7,589.1 466.6,587.2 466.3,585.3 465.7,583.6 464.9,581.9 463.9,580.4 462.7,579.1 461.2,577.8 459.6,576.8 457.7,575.8 455.6,575.1 453.4,574.5 450.9,574.1 448.4,573.8 445.6,573.7 442.8,573.8 436.9,574.3 430.7,575.3 427.6,576.0 421.3,577.6 412.0,580.4 406.1,582.5 400.4,584.7 387.8,590.1 377.5,595.1 367.8,600.2 364.0,602.5 359.8,605.2 355.6,608.3 351.7,611.8 348.3,615.5 343.0,622.2 340.7,624.8 337.7,627.6 334.7,629.7 331.2,631.4 329.2,632.2 327.0,632.8 323.0,633.6 318.5,633.9 315.5,633.8 312.2,633.5 308.8,632.9 306.5,632.3 302.8,631.3 300.3,630.3 295.2,628.0 292.6,626.5 290.1,624.9 287.6,623.1 285.2,621.0 282.9,618.8 280.8,616.4 278.1,612.4 276.5,609.6 275.3,606.6 274.5,603.6 274.2,602.1 273.9,599.0 273.9,597.5 274.2,594.5 274.5,593.0 275.5,590.2 276.1,588.8 277.7,586.3 278.7,585.1 279.7,584.0 282.0,582.0 283.3,581.2 286.0,579.7 289.0,578.5 292.2,577.7 295.5,577.2 297.1,577.1 300.5,577.2 303.9,577.5 309.0,578.5 312.2,579.5 316.8,581.3 321.2,583.4 325.1,585.8 328.7,588.3 331.8,590.9 334.6,593.5 337.8,597.0 340.3,600.5 342.3,603.8 343.9,606.9 345.2,610.7 346.0,614.2 346.4,617.4 346.3,620.5 345.8,623.8 344.8,626.9 343.2,629.7 341.2,632.2 339.1,634.1 336.5,635.8 333.5,637.3 329.9,638.4 326.5,639.1 322.8,639.5 318.6,639.6 315.1,639.4 311.4,638.9 307.4,638.1 303.2,637.0 298.7,635.5 295.7,634.2 292.6,632.7 289.5,631.0 286.5,629.0 283.5,626.8 279.1,623.0 276.5,620.1 274.0,617.0 271.8,613.6 270.9,611.9 269.3,608.3 268.6,606.4 267.6,602.6 267.3,600.7 267.1,596.8 267.2,594.9 267.8,591.1 268.4,589.3 269.8,585.8 270.8,584.2 273.0,581.1 274.3,579.7 275.7,578.4 278.9,576.2 280.6,575.2 284.3,573.6 288.2,572.5 290.2,572.1 294.4,571.7 298.6,571.7 300.7,571.8 304.9,572.4 309.0,573.3 315.0,575.2 320.5,577.5 325.6,580.3 330.1,583.2 335.4,587.3 339.9,591.3 341.8,593.4 344.4,596.3 347.9,601.1 350.5,605.5 352.7,610.4 354.4,615.5"/>
<path stroke="#bfbf00" d="M374.0,677.1 374.3,675.3 374.7,674.3 375.4,673.3 376.7,672.0 379.1,670.5 383.3,668.7 400.5,662.7 406.1,660.6 412.3,658.0 419.3,654.8 424.3,652.3 429.6,649.5 435.2,646.3 444.1,640.6 450.1,636.2 453.2,633.9 459.3,628.8 462.3,626.0 468.2,620.2 473.6,613.9 476.2,610.6 478.5,607.2 480.7,603.8 482.6,600.4 484.3,596.9 485.7,593.4 486.8,590.0 487.5,586.6 487.9,583.3 488.0,580.2 487.6,577.1 486.8,574.3 485.6,571.7 484.0,569.3 482.0,567.2 479.6,565.3 476.8,563.8 473.7,562.5 470.2,561.6 466.4,561.0 462.3,560.7 458.0,560.7 453.5,560.9 448.9,561.5 444.1,562.3 439.3,563.3 429.5,565.8 424.6,567.3 415.1,570.5 401.6,575.7 389.4,580.8 352.6,596.9 330.5,605.9 319.2,611.0 316.9,611.8 315.1,612.3 313.2,612.6 311.3,612.6 309.4,612.4 307.5,611.9 305.6,611.2 303.9,610.2 302.3,609.0 301.3,607.9 300.2,606.4 299.6,604.8 299.3,603.2 299.4,602.0 300.0,600.6 300.7,599.6 301.7,598.9 303.2,598.2 304.6,597.9 306.5,597.8 308.4,598.1 310.3,598.8 312.1,599.6 313.7,600.7 315.0,602.0 316.3,603.6 317.1,605.0 317.6,606.7 317.6,608.0 317.3,609.5 316.6,610.8 315.7,611.7 314.3,612.5 312.9,612.9 311.3,613.1 309.5,613.0 307.7,612.7 305.8,612.0 304.0,611.1 302.3,609.9 300.9,608.5 299.9,607.2 299.1,605.5 298.7,604.1 298.6,602.8 298.8,601.5 299.3,600.3 300.1,599.2 301.2,598.4 302.8,597.7 304.3,597.4 306.4,597.3 308.4,597.7 310.5,598.3 312.4,599.3 314.1,600.5 315.6,601.8 316.9,603.5 317.7,605.0 318.2,606.8 318.3,608.2 318.0,609.8 317.2,611.2 316.1,612.3 314.5,613.1 313.0,613.5 311.2,613.7 309.3,613.6 307.4,613.1 305.4,612.4 303.5,611.4 302.0,610.4 300.4,608.9 299.4,607.5 298.4,605.7 298.0,604.2 297.9,602.7 298.1,601.3 298.6,600.0 299.5,598.8 300.6,597.9 302.4,597.1 304.0,596.8 306.2,596.7 308.4,597.1 310.6,597.8 312.7,598.8 314.5,600.1 316.1,601.5 317.5,603.4 318.4,605.0 319.0,606.9 319.1,608.4 318.7,610.1 318.0,611.5 316.7,612.7 315.1,613.6 313.5,614.1 311.3,614.3 309.3,614.2 307.1,613.7 305.0,612.9 303.0,611.7 301.4,610.6 299.7,609.0 298.6,607.5 297.6,605.5 297.2,603.9 297.1,602.3 297.4,600.8 298.0,599.4 299.0,598.2 300.3,597.2 301.9,596.6 303.6,596.2 305.9,596.1 308.3,596.5 310.7,597.2 312.9,598.3 314.9,599.7 316.6,601.2 318.2,603.2 319.1,604.9 319.8,606.9 319.9,608.8 319.5,610.6 318.6,612.1 317.3,613.4 315.5,614.3 313.8,614.8 311.4,615.0 309.3,614.8 307.0,614.3 304.7,613.4 302.5,612.2 300.9,611.0 299.0,609.2 297.9,607.6 296.8,605.5 296.3,603.7 296.3,602.0 296.6,600.3 297.3,598.8 298.4,597.6 299.9,596.6 301.6,595.9 303.5,595.5 306.0,595.4 308.6,595.9 311.1,596.7 313.5,597.9 315.6,599.4 317.4,601.1 319.0,603.2 320.0,605.0 320.7,607.2 320.8,609.2 320.3,611.1 319.4,612.7 318.0,614.0 316.1,615.0 314.3,615.5 312.2,615.8 309.9,615.6 307.5,615.2 305.0,614.3 302.6,613.1 300.8,611.9 298.8,610.0 297.4,608.3 296.1,606.0 295.5,604.1 295.3,602.2 295.6,600.4 296.3,598.7 297.4,597.3 298.8,596.1 300.6,595.3 302.6,594.8 305.4,594.7 308.2,595.1 311.0,595.9 313.5,597.2 315.8,598.7 317.8,600.5 319.7,602.7 320.9,605.1 321.6,607.3 321.7,609.5 321.3,611.5 320.3,613.2 318.8,614.6 316.9,615.7 314.5,616.4 312.3,616.6 309.8,616.4 307.2,615.9 304.6,615.0 302.0,613.6 300.0,612.3 297.9,610.2 296.4,608.4 295.1,605.9 294.5,603.8 294.3,601.7 294.7,599.8 295.5,598.0 296.8,596.4 298.4,595.2 300.4,594.4 302.7,593.9 305.6,593.9 308.7,594.4 311.7,595.4 314.4,596.8 316.8,598.5 318.9,600.4 320.8,602.9 322.1,605.4 322.7,607.8 322.8,610.1 322.3,612.1 321.2,614.0 319.6,615.5 317.5,616.6 315.0,617.3 312.6,617.5 310.0,617.4 307.2,616.8 304.3,615.8 301.5,614.3 299.4,612.9 297.0,610.7 295.5,608.7 294.3,606.5 293.5,604.2 293.2,602.0 293.5,599.8 294.3,597.8 295.5,596.0 297.3,594.6 299.4,593.6 301.8,593.1 305.0,592.9 308.3,593.4 311.6,594.5 314.6,596.0 317.7,598.2 319.9,600.2 321.9,602.9 323.3,605.5 323.9,608.1 324.0,610.5 323.5,612.7 322.8,614.0 322.1,614.9 320.3,616.5 318.0,617.7 315.3,618.4 312.7,618.5 309.9,618.3 306.9,617.7 303.8,616.6 300.8,615.0 298.5,613.4 295.9,610.9 294.3,608.7 293.0,606.4 292.2,603.9 292.0,601.4 292.3,599.0 293.3,596.9 294.4,595.4 296.2,593.9 298.5,592.7 301.1,592.1 302.5,591.9 304.6,591.9 308.3,592.4 311.8,593.6 315.0,595.2 316.8,596.3 318.5,597.5 320.8,599.8 323.0,602.6 324.5,605.4 325.3,608.2 325.4,610.8 325.2,612.0 324.7,613.5 324.0,614.9 323.2,615.9 322.4,616.7 321.3,617.5 318.9,618.7 316.0,619.5 312.6,619.7 309.6,619.4 306.3,618.7 303.0,617.4 299.7,615.6 297.3,613.8 295.1,611.6 293.2,609.3 291.8,606.7 290.9,603.9 290.6,601.2 290.7,599.9 291.0,598.6 291.4,597.4 292.0,596.2 293.2,594.6 294.1,593.7 295.2,592.9 297.7,591.7 300.6,591.0 302.1,590.8 304.5,590.8 306.1,590.9 308.4,591.4 312.3,592.6 315.8,594.4 318.9,596.6 320.6,598.0 322.0,599.4 323.3,600.9 324.3,602.5 325.2,604.0 325.9,605.5 326.4,607.0 326.7,608.4 326.9,609.8 326.9,611.2 326.7,612.5 326.2,614.1 325.5,615.6 324.7,616.6 323.8,617.6 322.8,618.4 321.2,619.4 319.8,620.0 316.7,620.8 313.1,621.0 309.8,620.7 306.3,619.9 302.7,618.6 299.1,616.6 296.4,614.7 294.0,612.4 291.9,609.8 290.3,606.9 289.3,603.9 289.1,602.4 289.0,600.9 289.1,599.4 289.4,598.0 289.9,596.6 290.6,595.4 291.9,593.6 293.0,592.6 294.2,591.7 295.5,591.0 297.0,590.4 298.5,589.9 300.2,589.6 301.8,589.5 304.4,589.5 306.2,589.7 308.8,590.3 310.5,590.8 313.0,591.7 316.8,593.7 320.1,596.0 321.9,597.5 323.4,599.1 324.8,600.8 325.9,602.4 326.8,604.0 327.6,605.7 328.1,607.2 328.5,609.3 328.6,610.8 328.6,612.2 328.4,613.6 327.8,615.3 327.0,616.8 326.2,617.9 324.8,619.2 323.7,620.0 321.9,621.0 320.4,621.6 318.8,622.0 317.0,622.3 315.1,622.5 313.1,622.5 309.4,622.1 305.6,621.2 301.7,619.6 297.8,617.4 294.8,615.2 292.2,612.6 290.0,609.7 289.1,608.1 288.4,606.5 287.8,604.8 287.4,603.1 287.2,601.5 287.3,599.8 287.7,597.4 288.2,595.9 288.9,594.5 290.4,592.5 292.3,590.9 293.7,590.0 295.3,589.3 296.9,588.7 298.7,588.3 300.6,588.1 303.4,588.0 305.3,588.2 308.2,588.7 310.1,589.2 312.9,590.2 314.6,591.0 317.1,592.3 319.4,593.8 321.5,595.4 323.4,597.1 325.1,598.8 326.5,600.6 327.7,602.3 328.7,604.1 329.5,605.8 330.0,607.5 330.5,609.7 330.6,611.3 330.6,613.3 330.3,614.7 329.7,616.5 328.8,618.1 327.9,619.2 326.5,620.6 325.3,621.5 323.4,622.5 321.8,623.2 319.5,623.8 317.6,624.1 315.5,624.3 313.3,624.3 309.4,623.8 305.2,622.8 301.7,621.4 299.1,620.2 297.4,619.2 294.1,616.8 291.1,614.0 289.8,612.4 288.6,610.8 287.5,609.1 286.6,607.3 285.9,605.4 285.4,603.5 285.2,601.7 285.1,599.8 285.5,597.1 286.0,595.3 286.8,593.7 288.4,591.5 290.4,589.6 292.0,588.6 293.8,587.8 295.6,587.1 297.6,586.6 299.7,586.4 302.8,586.3 305.0,586.5 307.1,586.8 309.3,587.3 312.3,588.3 314.3,589.1 317.1,590.5 319.8,592.1 322.1,593.8 324.3,595.6 326.2,597.5 327.8,599.4 329.2,601.3 330.4,603.2 331.6,605.7 332.2,607.6 332.8,609.9 333.0,611.6 333.0,613.7 332.6,615.8 332.0,617.7 331.1,619.4 329.9,621.0 328.4,622.4 327.1,623.4 325.1,624.5 323.5,625.1 321.0,625.8 318.9,626.2 316.7,626.4 314.4,626.4 310.1,626.0 305.6,624.9 302.7,624.0 300.8,623.2 297.9,621.7 296.0,620.6 292.4,618.0 290.7,616.5 289.1,614.8 287.6,613.0 286.2,611.2 285.1,609.2 284.1,607.2 283.1,604.0 282.7,601.9 282.6,599.8 282.9,596.7 283.5,594.7 284.3,592.8 286.1,590.3 288.3,588.1 290.1,586.9 292.1,585.9 294.2,585.2 296.4,584.6 298.7,584.3 302.3,584.3 304.7,584.5 307.1,584.9 309.5,585.4 313.0,586.6 315.2,587.5 318.3,589.1 321.2,590.8 323.8,592.7 326.2,594.7 328.2,596.8 330.0,598.9 332.0,601.7 333.2,603.7 334.4,606.4 335.1,608.3 335.7,610.8 335.9,613.2 335.8,615.4 335.4,617.5 334.7,619.5 333.7,621.3 332.5,623.0 331.0,624.5 329.1,625.8 327.0,626.9 324.6,627.9 321.9,628.5 319.6,628.9 317.2,629.0 314.6,629.0 311.8,628.8 308.9,628.3 305.9,627.6 303.8,626.9 300.6,625.7 298.4,624.7 294.2,622.3 292.1,620.9 290.1,619.3 288.1,617.5 286.3,615.6 284.7,613.6 283.2,611.4 282.0,609.2 280.9,606.8 279.9,603.2 279.5,600.7 279.5,598.3 279.8,595.9 280.1,594.7 280.9,592.5 281.4,591.4 282.6,589.4 283.4,588.5 284.2,587.6 286.0,586.0 288.0,584.6 290.3,583.5 292.8,582.7 295.3,582.1 298.0,581.8 302.1,581.8 304.9,582.0 307.6,582.5 310.3,583.2 314.2,584.6 316.6,585.7 320.1,587.5 323.3,589.5 326.2,591.7 328.8,593.9 331.0,596.2 333.0,598.5 335.1,601.5 336.8,604.4 338.0,607.3 338.9,610.0 339.4,612.6 339.5,615.0 339.4,617.4 339.0,619.5 338.1,622.1 336.7,624.4 335.3,626.1 333.7,627.6 331.7,629.0 329.5,630.2 326.9,631.1 324.0,631.9 320.8,632.3 318.1,632.5 315.2,632.4 310.0,631.8 306.6,631.1 304.3,630.5 300.7,629.2 298.3,628.2 293.4,625.6 291.0,624.0 288.6,622.3 286.3,620.4 284.2,618.3 282.2,616.0 280.4,613.5 278.8,610.9 277.5,608.2 276.5,605.4 276.1,604.0 275.6,601.1 275.5,599.6 275.5,596.8 275.7,595.3 276.3,592.6 277.4,590.0 278.8,587.6 279.6,586.4 280.6,585.4 282.7,583.5 283.9,582.6 286.4,581.1 289.2,580.0 292.1,579.1 295.2,578.6 300.0,578.4 303.2,578.6 306.4,579.1 309.6,579.9 314.1,581.4 317.0,582.6 321.1,584.6 324.8,586.9 328.1,589.3 331.1,591.8 334.5,595.2 336.7,597.8 339.1,601.1 340.9,604.3 342.4,607.3 343.4,610.3 344.2,613.7 344.4,616.9 344.3,619.9 343.8,622.7 342.7,625.8 341.3,628.1 339.6,630.2 337.5,632.2 334.9,633.9 331.9,635.3 329.0,636.2 325.8,636.9 322.2,637.3 319.2,637.4 316.0,637.3 312.5,637.0 308.8,636.4 304.8,635.4 302.1,634.6 297.9,633.0 295.0,631.7 290.7,629.3 287.8,627.5 285.0,625.4 282.3,623.1 279.7,620.6 277.3,617.8 275.1,614.8 274.2,613.2 272.5,609.9 271.1,606.5 270.2,603.0 269.9,601.2 269.6,597.7 269.7,595.9 270.2,592.4 270.6,590.8 271.9,587.5 272.7,586.0 274.7,583.1 275.8,581.8 277.1,580.6 279.9,578.4 283.1,576.6 286.5,575.3 288.3,574.7 292.1,574.0 294.0,573.8 297.9,573.7 299.9,573.7 303.8,574.1 309.5,575.4 315.0,577.1 318.4,578.6 321.7,580.2 324.8,581.9 327.7,583.7 332.9,587.6 337.2,591.4 339.1,593.4 341.6,596.2 343.8,599.0 345.6,601.7 347.1,604.3 348.4,606.8 349.4,609.2 350.5,612.2 351.1,614.4 351.6,617.1 351.9,619.7 352.1,622.7 352.0,625.0 351.6,627.6 351.2,629.6 350.5,632.0 349.7,633.8 348.8,635.5 347.7,637.1 346.4,638.6 344.9,640.0 343.2,641.3 341.2,642.6 339.5,643.4 336.9,644.4 334.8,645.1 332.4,645.7 329.7,646.1 324.6,646.6 318.6,646.5 314.6,646.1 311.7,645.7 305.5,644.5 302.2,643.5 298.8,642.4 293.4,640.3 287.8,637.5 282.2,634.1 278.5,631.4 276.7,629.9"/>
<path stroke="#000000" d="M298.5,649.3 295.3,649.0 291.9,648.4 290.0,647.9 286.2,646.5 282.1,644.7 277.9,642.4 273.6,639.6 269.3,636.3 267.2,634.5 263.1,630.4 261.2,628.2 257.5,623.4 255.8,620.9 254.3,618.2 252.9,615.4 251.6,612.5 250.6,609.5 249.7,606.5 249.0,603.4 248.5,600.3 248.3,597.1 248.3,594.0 248.6,590.8 249.1,587.7 249.8,584.7 250.8,581.7 252.1,578.8 253.6,576.1 255.4,573.5 257.4,571.0 259.6,568.7 262.0,566.6 264.5,564.8 267.3,563.1 270.2,561.6 273.2,560.4 276.3,559.4 279.5,558.6 282.8,558.0 286.1,557.6 289.5,557.4 292.8,557.4 296.2,557.6 299.5,558.0 306.0,559.2 309.2,560.0 315.3,561.9 321.1,564.2 323.8,565.5 329.1,568.1 333.9,570.9 340.4,575.2 346.1,579.4 352.5,584.9 355.3,587.5 358.9,591.2 362.0,594.6 364.7,597.9 369.7,604.5 377.6,616.3 379.2,618.4 380.9,620.3 383.6,622.7 386.1,624.3 387.7,625.1 389.5,625.8 392.8,626.6 394.9,626.9 397.3,627.0 401.6,626.8 406.3,626.0 411.6,624.6 417.1,622.5 421.8,620.2 426.4,617.4 430.8,614.2 434.8,610.6 437.4,607.7 438.9,605.7 440.1,603.6 441.4,600.6 441.9,598.7 442.1,596.9 441.9,595.1 441.6,594.3 440.9,592.8 440.4,592.1 439.1,590.9 438.4,590.4 436.6,589.5 434.6,588.9 432.2,588.5 428.3,588.3 425.5,588.4 422.6,588.8 419.6,589.3 415.0,590.3 410.5,591.7 406.2,593.2 402.1,594.9 398.3,596.6 394.8,598.4 390.7,600.8 388.0,602.5 385.0,604.8 383.1,606.5 381.0,608.7 379.8,610.3 378.5,612.4 377.6,614.3 377.1,616.3 376.9,618.1 377.1,620.3 377.5,622.0 378.4,623.9 379.6,625.7 381.0,627.0 383.0,628.4 384.9,629.4 387.1,630.2 389.6,630.7 391.8,631.0 394.1,631.1 396.7,631.1 399.4,630.9 402.4,630.4 405.6,629.8 411.4,628.1 417.7,625.6 423.0,623.0 428.4,619.8 433.6,616.0 436.0,613.9 438.3,611.7 441.5,608.1 443.2,605.7 444.7,603.3 446.3,599.7 446.9,597.3 447.0,596.2 446.9,594.0 446.7,593.0 446.0,591.1 445.5,590.3 444.1,588.7 443.2,588.1 441.2,587.0 438.7,586.2 436.0,585.6 431.3,585.4 427.9,585.6 424.4,586.0 420.8,586.7 415.4,588.0 410.1,589.6 404.9,591.4 400.1,593.4 395.7,595.4 391.7,597.5 387.0,600.2 383.0,602.8 379.7,605.2 377.1,607.6 375.0,610.0 373.4,612.2 372.2,614.3 371.2,616.9 370.7,619.4 370.6,621.8 370.8,624.5 371.6,627.1 372.5,629.1 374.0,631.3 375.6,632.9 377.6,634.4 379.9,635.6 382.8,636.6 385.4,637.1 387.6,637.4 390.1,637.5 392.8,637.5 395.8,637.3 401.3,636.4 407.7,634.8 411.8,633.5 414.8,632.3 420.9,629.6 427.4,626.1 432.4,623.0 437.2,619.4 441.9,615.4 446.1,611.1 449.8,606.4 451.8,603.3 452.6,601.7 453.9,598.5 454.4,597.0 454.9,594.0 455.0,592.5 454.6,589.8 454.2,588.6 453.7,587.4 452.9,586.3 452.1,585.3 451.0,584.4 449.9,583.5 448.5,582.8 447.1,582.2 443.8,581.3 440.1,580.8 436.0,580.7 431.7,581.0 427.2,581.6 422.6,582.5 417.9,583.7 413.3,585.0 406.6,587.3 400.4,589.7 394.6,592.2 389.4,594.7 384.7,597.1 380.6,599.4 376.0,602.3 373.1,604.4 369.8,607.0 367.2,609.4 365.1,611.8 363.5,614.1 362.2,616.3 361.1,618.5 360.1,621.1 358.8,626.1 356.5,637.0 355.7,639.6 354.8,642.1 353.6,644.4 352.4,646.3 350.8,648.1 349.2,649.5 346.4,651.2 342.6,652.8 338.6,654.0 334.4,654.7 329.3,655.1 324.6,655.2 319.1,654.9 312.8,654.2 307.6,653.2 303.9,652.3 297.9,650.6 293.7,649.0 289.4,647.2 284.9,645.0 280.3,642.5 275.7,639.5 271.2,636.1 269.0,634.2 264.7,630.1 262.6,627.9 258.8,623.0 257.0,620.4 255.4,617.8 253.9,615.0 252.6,612.1 251.5,609.1 250.5,606.1 249.8,603.0 249.3,599.8 249.0,596.7 249.0,593.5 249.2,590.3 249.6,587.2 250.3,584.2 251.3,581.2 252.6,578.3 254.0,575.5 255.8,572.9 257.7,570.5 259.9,568.2 262.3,566.1 264.9,564.2 267.6,562.5 270.5,561.0 273.5,559.8 276.6,558.7 279.8,557.9 283.1,557.3 286.4,557.0 289.8,556.8 293.2,556.8 296.5,557.0 299.8,557.4 306.4,558.6 309.6,559.4 315.7,561.3 321.5,563.6 324.3,564.9 329.5,567.5 334.4,570.3 341.0,574.6 346.7,578.9 353.1,584.4 355.9,587.0 359.5,590.7 362.7,594.2 365.4,597.4 370.3,604.0 377.9,615.3 379.5,617.5 381.2,619.4 383.8,621.8 386.3,623.5 387.9,624.3 389.7,625.0 392.9,625.9 395.0,626.2 397.3,626.3 401.4,626.2 406.1,625.5 411.2,624.2 416.6,622.1 421.1,620.0 425.5,617.4 429.9,614.3 433.8,610.8 435.6,608.9 437.1,607.0 438.5,605.1 439.6,603.1 440.8,600.3 441.1,598.4 441.2,596.7 440.9,595.0 440.6,594.3 439.8,592.9 439.3,592.2 438.7,591.7 437.2,590.6 435.4,589.8 433.4,589.3 431.1,588.9 427.3,588.8 424.5,589.0 421.7,589.3 418.8,589.9 414.4,590.9 410.0,592.2 405.8,593.7 401.9,595.3 398.2,597.0 394.9,598.8 390.9,601.1 388.4,602.8 385.5,605.1 383.6,606.7 381.7,608.9 380.5,610.4 379.3,612.5 378.5,614.4 378.1,616.3 378.0,618.1 378.1,619.8 378.6,621.5 379.5,623.4 380.8,625.1 382.1,626.4 383.8,627.5 385.6,628.5 387.8,629.2 390.4,629.8 392.5,630.1 394.8,630.2 397.3,630.1 400.0,629.9 405.0,629.1 410.6,627.6 416.7,625.3 421.8,622.8 426.9,619.8 432.0,616.3 434.4,614.3 436.7,612.2 439.8,608.9 441.5,606.6 443.1,604.3 444.8,600.8 445.5,598.5 445.8,596.3 445.7,594.3 445.5,593.3 444.7,591.5 444.2,590.7 442.8,589.3 442.0,588.7 440.0,587.6 437.7,586.8 435.0,586.3 430.6,586.1 427.3,586.3 424.0,586.7 420.5,587.3 415.3,588.6 410.2,590.1 405.2,591.9 400.6,593.8 396.3,595.7 392.4,597.7 387.9,600.3 384.0,602.8 380.9,605.3 378.3,607.7 376.3,609.9 374.7,612.1 373.6,614.2 372.7,616.8 372.3,619.3 372.2,621.6 372.5,623.8 373.4,626.3 374.4,628.3 375.8,630.1 377.5,631.7 379.6,633.1 381.6,634.0 384.5,634.9 387.2,635.4 390.3,635.7 392.9,635.7 395.8,635.6 398.9,635.2 404.6,634.1 411.1,632.2 415.3,630.6 418.3,629.4 424.3,626.3 430.6,622.6 435.2,619.3 438.2,616.9 441.0,614.3 445.0,610.1 448.3,605.8 450.1,602.8 450.9,601.3 452.0,598.4 452.4,597.0 452.8,594.2 452.8,592.9 452.4,590.4 452.0,589.2 451.4,588.1 450.7,587.1 449.8,586.2 447.7,584.6 445.1,583.4 442.0,582.5 440.3,582.3 436.6,582.0 432.7,582.1 428.5,582.5 424.2,583.2 417.7,584.7 411.2,586.7 405.0,588.8 399.3,591.1 392.3,594.3 386.3,597.4 380.0,601.0 376.0,603.8 372.0,607.0 368.9,610.1 366.7,613.0 365.0,615.8 363.6,619.0 362.7,622.5 362.1,626.4 361.9,631.0 362.1,635.5 362.7,639.2 363.6,642.2 364.8,644.9 366.3,647.0 367.2,647.9 368.3,648.8 370.7,650.1 373.4,651.0 376.7,651.6 380.1,651.9 383.4,651.8 387.2,651.5 390.4,651.1 394.0,650.5 398.0,649.6 402.4,648.4 407.3,646.9 412.7,644.9 416.5,643.3 424.8,639.4 429.1,637.1 433.6,634.4 440.5,629.8 447.5,624.5 452.0,620.6 454.2,618.5 458.3,614.1 460.3,611.8 463.8,607.1 466.9,602.2 468.1,599.8 469.2,597.3 470.1,594.9 470.7,592.5 471.1,590.2 471.3,587.9 471.3,585.7 471.0,583.6 470.4,581.7 469.5,579.8 468.4,578.1 467.0,576.6 465.4,575.2 463.5,574.1 461.4,573.1 459.1,572.2 456.5,571.6 453.8,571.2 450.9,571.0 447.8,570.9 441.3,571.3 438.0,571.7 431.0,573.0 427.5,573.8 420.5,575.7 410.3,579.1 403.9,581.5 397.7,583.9 384.2,589.8 377.3,593.0 369.5,596.8 363.2,600.2 358.0,603.1 353.9,605.7 350.5,608.0 347.6,610.2 344.7,612.7 336.2,621.2 334.0,623.0 331.5,624.7 328.1,626.4 324.3,627.7 320.6,628.4 316.5,628.6 313.8,628.5 311.0,628.2 306.1,627.1 303.0,626.1 300.9,625.3 296.6,623.2 292.5,620.6 290.5,619.0 288.7,617.3 286.9,615.4 285.3,613.5 283.8,611.4 282.6,609.1 281.6,606.9 280.8,604.5 280.2,600.9 280.1,598.5 280.4,596.2 281.0,594.0 281.4,592.9 282.4,590.8 283.1,589.9 283.8,589.0 285.4,587.3 286.3,586.5 288.3,585.2 290.5,584.1 292.8,583.2 295.3,582.6 297.9,582.3 300.6,582.2 304.6,582.5 307.3,582.9 311.2,584.0 313.7,584.9 317.3,586.5 320.7,588.3 323.7,590.3 326.5,592.5 328.9,594.7 331.0,596.9 333.4,599.9 334.9,602.1 336.5,605.0 337.6,607.8 338.4,610.5 338.8,613.0 338.8,615.4 338.6,617.7 337.9,620.3 336.8,622.7 335.6,624.5 334.2,626.1 332.4,627.6 330.4,628.9 328.0,630.0 325.3,630.8 322.3,631.4 318.9,631.8 316.2,631.8 311.2,631.4 307.9,630.8 305.7,630.2 302.2,629.1 299.9,628.2 295.1,625.9 292.7,624.4 290.4,622.8 288.1,621.1 285.9,619.1 283.9,617.0 282.0,614.7 279.6,611.0 278.3,608.3 277.3,605.6 276.6,602.8 276.4,601.4 276.2,598.6 276.3,597.2 276.7,594.5 277.0,593.2 278.0,590.7 278.6,589.4 280.1,587.2 281.0,586.1 281.9,585.1 284.1,583.4 286.5,581.9 289.2,580.7 292.0,579.9 295.0,579.3 298.1,579.1 302.8,579.2 305.9,579.7 310.5,580.7 313.4,581.7 317.6,583.5 321.5,585.5 325.1,587.8 328.3,590.2 331.1,592.7 333.6,595.1 336.4,598.5 338.6,601.7 340.4,604.8 341.7,607.8 342.8,611.4 343.3,614.1 343.5,617.2 343.2,620.2 342.6,622.9 341.6,625.4 340.1,627.7 338.4,629.8 336.1,631.7 333.5,633.3 331.0,634.4 328.1,635.3 324.9,636.0 321.3,636.3 317.2,636.4 313.9,636.2 310.4,635.7 306.7,634.9 304.1,634.2 300.0,632.8 297.3,631.7 294.5,630.4 291.7,628.8 288.9,627.1 286.2,625.1 282.2,621.7 279.8,619.2 277.6,616.4 275.6,613.5 274.7,611.9 273.1,608.8 272.0,605.4 271.2,602.0 271.0,600.3 270.8,596.9 271.0,595.2 271.6,591.9 272.1,590.3 273.4,587.3 274.2,585.8 275.2,584.5 277.4,581.9 278.7,580.8 281.4,578.8 283.0,577.9 286.2,576.5 289.7,575.5 293.3,574.9 297.0,574.6 298.9,574.7 302.7,574.9 306.4,575.6 311.8,577.0 315.3,578.2 320.2,580.4 324.7,582.9 328.8,585.6 332.4,588.4 336.6,592.2 339.3,595.0 342.2,598.7 344.6,602.2 346.9,606.4 348.5,610.3 349.6,613.9 350.2,618.0 350.4,621.7 350.1,625.6 349.2,629.2 347.8,632.4 346.2,635.0 344.1,637.3 341.4,639.4 338.2,641.2 334.9,642.5 331.0,643.5 326.3,644.1 322.1,644.4 317.3,644.2 313.3,643.8 309.0,643.1 304.5,642.0 301.2,641.1 296.2,639.2 292.8,637.7 289.3,635.9 285.7,633.9 282.2,631.5 278.8,628.9 275.5,625.9 273.9,624.3 270.9,620.8 269.5,619.0 266.9,615.1 265.8,613.0 263.9,608.8 263.2,606.6 262.1,602.1 261.7,599.8 261.6,597.5 261.6,595.2 261.7,592.9 262.1,590.7 262.6,588.5 263.3,586.4 264.1,584.3 265.2,582.3 266.3,580.4 267.7,578.6 269.2,576.9 270.8,575.3 272.6,573.9 274.5,572.5 276.5,571.4 278.6,570.3 280.8,569.4 283.1,568.7 285.4,568.1 290.2,567.3 292.7,567.1 297.6,567.1 300.1,567.3 305.0,568.1 307.4,568.6 312.1,569.9 318.8,572.3 322.9,574.3 326.8,576.3 330.4,578.5 333.8,580.8 336.9,583.1 339.7,585.4 342.3,587.6 345.7,591.0 347.7,593.2 350.4,596.3 352.7,599.3 354.7,602.2 357.3,606.7 359.6,611.5 361.9,617.2 364.9,626.5 366.1,629.9 367.7,633.3 369.6,636.3 370.8,637.7 372.2,638.9 373.7,640.0 375.5,640.9 377.5,641.8 379.2,642.3 381.8,642.8 384.0,643.0 387.3,643.2 390.1,643.1 393.2,642.8 396.6,642.3 403.0,640.9 410.4,638.7 417.0,636.1 424.2,632.7 427.9,630.7 431.7,628.4 437.4,624.5 443.0,620.1 448.4,615.2 451.7,611.6 453.2,609.8 456.0,606.1 457.2,604.1 459.2,600.3 460.1,598.4 461.2,594.6 461.5,592.8 461.7,591.0 461.6,589.3 461.4,587.7 460.9,586.1 460.3,584.7 459.5,583.3 458.5,582.1 457.3,581.0 455.9,580.0 454.3,579.1 452.5,578.4 450.6,577.8 448.6,577.3 446.4,577.0 441.6,576.7 439.1,576.8 433.8,577.3 431.1,577.7 425.6,578.7 420.0,580.1 414.5,581.8 409.1,583.5 404.0,585.4 399.1,587.4 392.3,590.3 386.2,593.1 380.8,595.8 376.0,598.4 370.7,601.5 367.4,603.6 363.6,606.3 361.3,608.2 358.8,610.6 357.1,612.4 355.3,614.6 352.7,618.4 347.5,627.1 345.0,630.6 342.3,633.4 340.5,634.8 339.0,635.8 336.8,637.1 334.2,638.2 331.3,639.1 328.9,639.7 326.3,640.1 323.4,640.4 320.2,640.5 316.8,640.4 313.1,640.0 310.5,639.6 306.4,638.7 303.5,637.9 299.0,636.4 295.9,635.2 292.8,633.7 289.6,631.9 286.4,630.0 283.3,627.7 278.9,623.9 276.1,621.0 273.5,617.8 271.2,614.4 270.2,612.6 268.5,608.9 267.8,606.9 266.7,603.0 266.4,601.0 266.1,597.0 266.2,595.1 266.8,591.2 267.3,589.3 268.7,585.7 269.7,583.9 271.9,580.8 273.3,579.3 276.3,576.7 278.0,575.6 281.6,573.7 285.5,572.3 289.6,571.3 293.9,570.9 296.1,570.8 300.4,571.0 304.7,571.6 306.9,572.0 311.1,573.1 317.0,575.2 322.6,577.8 327.6,580.6 332.1,583.7 337.3,587.9 341.7,592.0 345.3,596.1 348.8,600.9 351.5,605.3 353.8,610.2 355.6,615.4 356.7,620.7 357.4,626.4 357.5,632.4 357.0,637.9 356.1,642.3 355.4,644.3 354.5,646.2 353.6,647.7 352.5,649.1 351.2,650.5 350.0,651.5 348.5,652.5 346.8,653.4 343.0,654.9 338.1,656.1 332.7,656.8 327.2,657.0 320.6,656.8 314.3,656.1 309.1,655.2 303.4,653.9 297.2,652.1 292.9,650.5 288.4,648.6 283.7,646.3 279.0,643.7 274.2,640.5 269.5,637.0 267.2,635.0 262.7,630.6 260.6,628.3 258.6,625.8 256.6,623.2 254.8,620.5 253.2,617.6 251.7,614.7 250.3,611.6 249.2,608.5 248.3,605.3 247.6,602.0 247.1,598.7 246.9,595.4 246.9,592.1 247.2,588.8 247.8,585.5 248.7,582.3 249.8,579.2 251.2,576.3 252.8,573.4 254.7,570.7 256.9,568.2 259.3,565.9 261.9,563.8 264.7,561.9 267.6,560.2 270.7,558.8 273.9,557.6 277.2,556.6 280.6,555.9 284.1,555.4 287.6,555.1 291.1,555.1 294.6,555.2 298.1,555.5 301.6,556.0 305.0,556.7 311.6,558.4 317.9,560.5 323.9,563.0 326.7,564.4 332.0,567.2 339.2,571.6 345.5,576.1 352.6,581.8 358.4,587.2 363.2,592.1 367.9,597.6 372.2,603.2 380.2,614.4 382.3,616.9 384.5,619.1 386.9,620.9 389.5,622.4 392.5,623.5 395.1,624.0"/>
<path stroke="#0000ff" d="M402.5,678.9 402.2,677.8 402.1,676.7 402.2,675.5 402.5,674.2 403.4,671.7 404.1,670.5 405.8,667.9 409.2,664.1 412.0,661.6 415.1,658.9 420.5,654.8 438.2,641.8 445.7,635.8 450.8,631.4 455.8,626.6 460.7,621.6 465.3,616.2 469.5,610.5 473.1,604.7 474.6,601.8 476.0,598.9 477.0,595.9 477.9,593.1 478.5,590.2 478.8,587.5 478.8,584.8 478.5,582.3 477.8,579.9 476.9,577.7 475.6,575.6 474.0,573.8 472.2,572.2 470.0,570.7 467.5,569.6 464.7,568.6 461.7,567.9 458.5,567.5 455.1,567.2 451.5,567.2 447.7,567.4 443.8,567.9 439.9,568.4 431.8,570.1 423.7,572.3 411.8,576.1 400.7,580.4 387.6,585.9 371.6,593.1 356.5,600.3 351.1,603.0 345.8,605.9 339.6,609.8 330.2,616.6 326.4,619.0 323.8,620.2 321.6,620.9 319.3,621.5 316.7,621.8 312.6,621.8 309.0,621.3 305.1,620.2 301.3,618.6 297.6,616.4 294.8,614.2 292.4,611.6 290.4,608.7 289.0,605.6 288.5,604.0 288.2,602.4 288.1,600.8 288.2,599.3 288.8,597.0 289.3,595.6 290.1,594.3 291.6,592.6 292.8,591.6 294.2,590.7 295.7,590.0 297.3,589.4 298.9,589.0 300.7,588.8 302.5,588.7 305.2,588.9 307.1,589.1 309.8,589.8 311.6,590.4 314.1,591.4 318.0,593.6 320.1,595.1 322.0,596.7 323.7,598.3 325.2,600.0 326.4,601.7 327.5,603.4 328.3,605.1 328.9,606.8 329.4,608.4 329.7,610.5 329.7,612.0 329.4,613.9 329.0,615.2 328.3,616.9 327.2,618.4 326.3,619.4 324.8,620.6 323.5,621.4 321.5,622.3 319.8,622.8 318.0,623.2 316.1,623.4 314.0,623.4 311.8,623.3 307.9,622.7 303.8,621.5 300.5,620.0 298.1,618.6 296.5,617.6 293.4,615.1 290.8,612.3 288.6,609.1 287.7,607.4 287.0,605.6 286.5,603.9 286.2,602.1 286.1,600.3 286.3,598.6 286.9,596.1 287.6,594.5 288.5,593.1 290.2,591.1 292.4,589.5 294.0,588.7 295.7,588.0 297.6,587.5 299.5,587.2 301.5,587.1 304.5,587.2 306.6,587.5 309.6,588.2 311.6,588.8 314.4,590.0 316.2,590.9 318.7,592.4 321.1,594.0 323.2,595.7 325.0,597.5 326.7,599.3 328.1,601.2 329.2,603.0 330.2,604.8 331.1,607.2 331.5,608.9 331.8,611.1 331.9,612.7 331.6,614.7 331.1,616.6 330.2,618.3 329.1,619.9 328.1,621.0 326.5,622.3 325.1,623.1 323.0,624.1 321.3,624.6 318.7,625.1 316.6,625.4 314.3,625.4 311.9,625.2 307.7,624.5 303.2,623.1 300.4,622.0 298.6,621.0 295.0,618.8 291.7,616.1 290.2,614.5 288.7,612.9 287.5,611.1 286.3,609.3 285.4,607.3 284.7,605.4 284.0,602.4 283.8,600.4 283.9,598.4 284.5,595.5 285.3,593.7 286.2,592.1 288.1,589.9 290.5,588.0 292.3,587.1 294.3,586.3 296.3,585.7 298.5,585.4 300.8,585.2 304.2,585.4 306.5,585.7 309.8,586.5 312.0,587.2 315.2,588.5 317.2,589.5 320.0,591.1 322.5,592.9 324.8,594.8 326.8,596.8 328.6,598.7 330.1,600.7 331.8,603.4 332.8,605.3 333.7,607.9 334.2,609.7 334.5,612.0 334.5,614.2 334.1,616.3 333.5,618.3 332.6,620.1 331.4,621.8 330.0,623.2 328.2,624.6 326.7,625.4 324.4,626.4 322.5,627.0 319.7,627.5 317.4,627.7 315.0,627.8 312.4,627.6 307.7,626.8 304.8,626.0 302.8,625.3 298.7,623.5 294.7,621.2 290.8,618.3 289.0,616.7 287.4,614.9 285.8,612.9 284.4,610.9 283.3,608.8 282.3,606.6 281.4,603.1 281.1,600.9 281.0,598.6 281.6,595.3 282.3,593.2 283.3,591.2 284.6,589.4 285.4,588.6 288.0,586.4 290.0,585.2 292.2,584.3 294.5,583.6 297.0,583.2 299.5,582.9 303.4,583.1 306.0,583.4 308.5,583.9 311.0,584.6 314.7,586.0 316.9,587.0 320.2,588.8 323.1,590.8 325.8,592.8 328.2,595.0 330.9,597.9 332.6,600.1 334.4,602.9 335.5,605.0 336.6,607.8 337.3,610.4 337.7,612.9 337.7,615.2 337.5,617.4 336.9,619.5 335.8,621.9 334.3,624.1 332.8,625.7 331.0,627.1 328.9,628.3 326.4,629.3 323.7,630.1 320.6,630.6 318.1,630.8 315.4,630.8 312.5,630.5 307.3,629.6 304.0,628.7 301.7,627.9 297.2,625.9 292.6,623.2 290.4,621.6 288.2,619.9 286.2,617.9 284.3,615.8 282.6,613.6 281.0,611.2 279.7,608.7 278.7,606.2 277.7,602.2 277.5,599.5 277.5,598.2 277.8,595.6 278.0,594.3 278.8,591.8 279.4,590.7 280.7,588.5 281.5,587.4 282.4,586.5 284.4,584.7 286.6,583.2 289.1,582.0 291.7,581.1 294.5,580.4 297.4,580.1 301.9,580.1 304.9,580.4 307.8,581.0 310.7,581.8 314.9,583.3 318.8,585.1 322.4,587.1 325.7,589.4 328.6,591.7 331.2,594.1 334.2,597.3 336.0,599.7 338.0,602.8 339.6,605.9 340.7,608.8 341.5,611.5 341.9,614.8 341.9,617.2 341.6,620.1 340.8,622.7 339.6,625.2 338.1,627.4 336.5,629.0 334.2,630.8 332.0,632.0 329.5,633.1 326.6,634.0 323.4,634.6 319.7,634.9 316.8,634.9 313.6,634.7 310.2,634.2 307.8,633.7 304.1,632.7 301.5,631.9 297.6,630.3 294.9,629.0 292.2,627.5 289.6,625.8 287.0,623.9 284.5,621.8 282.2,619.5 280.0,617.0 277.1,612.9 275.5,610.0 274.2,606.9 273.3,603.7 273.0,602.1 272.6,598.9 272.6,597.3 273.0,594.2 273.3,592.6 274.3,589.7 275.0,588.3 276.6,585.6 277.6,584.4 278.7,583.2 281.1,581.1 282.4,580.2 285.3,578.7 288.5,577.5 291.8,576.7 295.2,576.2 298.8,576.1 302.3,576.3 307.6,577.2 311.0,578.1 315.9,579.9 320.5,582.0 324.7,584.4 328.5,587.0 331.9,589.7 334.9,592.4 338.3,596.0 341.0,599.6 343.2,603.0 344.9,606.2 346.4,610.1 347.4,613.7 347.9,617.0 348.0,620.7 347.6,624.1 346.7,627.2 345.4,630.1 343.7,632.7 341.8,634.7 339.1,636.8 336.3,638.4 332.9,639.7 329.0,640.7 325.4,641.2 321.3,641.4 317.9,641.4 314.2,641.1 310.2,640.5 307.4,639.9 303.0,638.8 300.0,637.8 296.8,636.5 293.6,635.1 290.4,633.4 287.1,631.5 282.3,628.1 279.2,625.5 276.2,622.6 273.5,619.4 272.2,617.7 269.9,614.2 268.9,612.3 267.2,608.4 266.5,606.4 265.5,602.4 265.2,600.3 265.0,596.2 265.4,592.1 265.8,590.1 266.4,588.2 267.1,586.3 268.0,584.5 269.0,582.7 270.2,581.1 271.5,579.5 272.9,578.0 274.5,576.7 276.2,575.4 279.8,573.3 281.7,572.5 285.9,571.1 288.0,570.6 292.4,570.0 296.9,569.9 301.4,570.2 305.8,570.9 310.2,571.9 314.4,573.3 318.4,574.9 322.2,576.6 327.4,579.6 330.6,581.6 335.0,584.8 338.8,588.0 342.1,591.2 345.0,594.3 347.5,597.3 349.6,600.2 351.9,603.9 353.8,607.3 355.2,610.6 357.1,615.7 358.5,621.5 359.5,628.7 360.5,640.9 361.0,645.1 361.8,649.0 362.4,650.7 363.1,652.0 363.9,653.2 365.0,654.4 366.4,655.3 367.8,656.0 369.5,656.6 371.6,657.1 376.1,657.5 380.5,657.4 385.1,656.9 389.5,656.1 394.7,655.0 400.7,653.4 405.7,651.8 411.3,649.8 415.4,648.1 424.1,644.1 428.8,641.6 433.7,638.8 438.8,635.6 443.9,632.0 449.0,628.1 451.6,626.0 456.6,621.5 459.0,619.1 463.6,614.1 465.8,611.5 469.7,606.1 471.4,603.3 473.0,600.5 474.3,597.7 475.4,595.0 476.2,592.2 476.8,589.5 477.1,586.9 477.2,584.3 476.9,581.9 476.3,579.6 475.5,577.5 474.3,575.5 472.7,573.7 470.9,572.1 468.8,570.8 466.4,569.6 463.8,568.7 460.9,568.0 457.7,567.6 454.4,567.3 450.9,567.3 447.3,567.5 443.5,567.9 439.6,568.5 431.8,570.1 427.8,571.1 419.9,573.4 408.5,577.3 397.8,581.5 382.5,588.1 366.0,595.8 353.3,602.1 348.7,604.6 344.9,606.8 339.3,610.6 330.4,617.5 327.0,619.6 324.4,620.8 322.2,621.6 319.8,622.2 317.2,622.5 315.2,622.6 313.0,622.6 309.2,622.1 305.3,621.0 301.3,619.4 297.4,617.1 294.5,614.8 291.9,612.1 289.7,609.1 288.9,607.6 288.2,605.9 287.7,604.2 287.4,602.6 287.2,600.9 287.3,599.2 287.8,596.9 288.4,595.4 289.2,594.0 290.8,592.1 292.0,591.0 293.4,590.1 295.0,589.4 296.7,588.8 298.4,588.3 300.3,588.1 302.2,588.0 305.0,588.1 307.0,588.4 309.8,589.1 311.7,589.7 314.4,590.8 318.4,593.1 320.6,594.7 322.6,596.3 324.4,598.0 325.9,599.8 327.2,601.5 328.3,603.3 329.2,605.0 330.0,607.3 330.4,609.0 330.7,611.1 330.7,612.6 330.4,614.6 329.9,615.9 329.1,617.6 328.0,619.1 327.0,620.2 325.5,621.4 324.1,622.2 322.1,623.1 320.3,623.7 318.5,624.0 316.5,624.3 314.3,624.3 312.0,624.2 308.0,623.6 303.7,622.3 300.3,620.8 297.7,619.4 296.0,618.3 292.8,615.7 290.0,612.7 288.8,611.1 287.7,609.4 286.8,607.6 286.0,605.8 285.5,603.9 285.2,602.0 285.1,600.1 285.2,598.3 285.9,595.6 286.6,594.0 287.6,592.4 289.4,590.4 291.7,588.8 293.4,587.9 295.3,587.2 297.2,586.7 299.3,586.4 301.4,586.3 304.6,586.4 306.8,586.7 309.9,587.5 312.0,588.2 315.0,589.4 316.8,590.3 319.5,591.9 321.9,593.6 324.1,595.4 326.0,597.3 327.7,599.2 329.1,601.1 330.3,603.0 331.3,604.9 332.2,607.3 332.7,609.1 333.0,611.4 333.1,613.0 332.8,615.1 332.3,617.0 331.5,618.8 330.4,620.5 329.0,622.0 327.3,623.3 325.9,624.1 323.7,625.1 321.9,625.7 319.2,626.2 317.0,626.4 314.7,626.5 312.2,626.3 307.8,625.6 303.1,624.1 299.2,622.5 295.4,620.3 291.8,617.5 290.1,616.0 288.6,614.3 287.1,612.5 285.8,610.6 284.7,608.6 283.8,606.5 282.9,603.4 282.6,601.2 282.6,599.1 283.0,596.0 283.7,594.1 284.6,592.2 286.4,589.8 288.8,587.7 290.7,586.5 292.7,585.6 294.8,584.9 297.1,584.5 299.5,584.2 303.1,584.3 305.5,584.5 309.1,585.3 311.4,586.0 314.8,587.3 316.9,588.3 319.9,590.0 322.7,591.8 325.1,593.8 327.3,595.8 329.3,597.9 330.9,600.0 332.7,602.8 333.8,604.8 334.9,607.4 335.6,609.9 335.9,612.4 335.9,614.6 335.6,616.8 335.0,618.8 334.2,620.7 333.0,622.4 331.6,624.0 329.9,625.4 327.8,626.6 325.5,627.6 322.9,628.4 320.0,628.9 317.6,629.1 315.0,629.1 312.2,628.9 307.3,628.0 304.2,627.1 302.1,626.4 297.8,624.5 293.5,622.0 291.5,620.5 289.5,618.8 287.6,617.0 285.8,615.1 284.2,613.0 282.8,610.8 281.6,608.5 280.6,606.1 279.7,602.5 279.5,600.0 279.5,597.6 279.9,595.2 280.2,594.1 281.1,591.9 281.7,590.8 283.0,588.8 283.8,587.9 284.6,587.1 286.5,585.5 288.6,584.2 291.0,583.2 293.5,582.4 296.1,581.9 298.8,581.7 302.9,581.8 305.7,582.1 309.7,583.0 312.4,583.9 316.1,585.4 318.5,586.6 321.9,588.5 324.9,590.6 327.6,592.8 330.0,595.1 332.7,598.1 334.5,600.4 336.3,603.4 337.7,606.3 338.7,609.0 339.3,611.7 339.6,614.2 339.5,616.6 339.1,619.3 338.4,621.4 337.2,623.8 335.6,625.9 334.0,627.5 332.0,628.9 329.8,630.1 327.3,631.1 324.4,631.8 321.2,632.4 318.6,632.5 315.7,632.5 312.7,632.3 309.5,631.8 307.2,631.3 303.7,630.3 301.3,629.5 297.7,628.0 295.2,626.7 292.8,625.3 290.4,623.7 288.0,621.9 285.8,619.9 283.6,617.8 281.7,615.4 279.1,611.6 277.7,608.9 276.6,606.1 275.9,603.3 275.6,601.8 275.4,598.9 275.4,597.5 275.8,594.6 276.1,593.3 277.0,590.6 277.6,589.3 279.1,587.0 280.0,585.9 281.0,584.8 283.2,583.0 285.7,581.4 288.4,580.2 291.3,579.2 294.4,578.6 297.6,578.4 300.8,578.4 304.0,578.7 308.8,579.6 311.9,580.5 316.3,582.2 320.4,584.2 324.2,586.5 327.6,588.9 330.7,591.4 333.4,593.9 336.4,597.3 338.9,600.7 340.8,603.9 342.3,607.0 343.6,610.6 344.2,613.4 344.5,616.6 344.4,619.6 343.9,622.5 343.1,625.1 341.9,627.5 340.3,629.6 338.3,631.6 335.9,633.4 333.6,634.6 330.3,635.9 327.3,636.7 323.8,637.3 319.9,637.5 316.7,637.5 313.3,637.2 309.6,636.6 305.7,635.7 301.7,634.5 298.8,633.5 296.0,632.2 293.1,630.8 290.2,629.1 287.3,627.2 284.5,625.1 281.8,622.8 279.2,620.2 276.8,617.3 274.7,614.3 273.8,612.7 272.1,609.4 271.4,607.7 270.3,604.2 270.0,602.4 269.6,598.9 269.5,597.1 269.9,593.6 270.2,591.8 271.3,588.5 272.0,586.9 273.9,584.0 275.0,582.6 276.2,581.3 278.9,579.0 280.4,578.0 283.6,576.3 287.1,575.0 290.8,574.1 294.6,573.7 298.6,573.6 302.5,573.9 308.3,575.0 312.0,576.0 317.4,578.0 322.3,580.4 326.8,583.1 330.9,585.9 334.5,588.8 338.6,592.7 342.0,596.5 344.7,600.2 347.4,604.6 349.3,608.7 350.7,612.5 351.7,616.7 352.2,621.1 352.1,625.2 351.6,628.8 351.1,630.8 350.4,632.6 349.0,635.6 346.9,638.4 344.7,640.5 342.0,642.4 338.5,644.1 335.1,645.3 330.9,646.2 326.0,646.7 321.5,646.8 317.7,646.6 313.6,646.2 309.1,645.5 304.3,644.3 299.2,642.8 295.6,641.4 292.0,639.9 288.3,638.0 284.5,635.8 280.7,633.3 277.1,630.5 273.5,627.3 270.2,623.8 268.6,621.9 265.7,617.8 264.3,615.7 262.1,611.2 261.1,608.9 259.7,604.1 259.2,601.6 258.9,599.2 258.7,596.7 258.7,594.2 259.0,591.8 259.4,589.4 260.0,587.0 260.8,584.7 261.7,582.5 262.9,580.3 264.2,578.3 265.8,576.4 267.4,574.6 269.3,572.9 271.2,571.4 273.3,570.0 275.6,568.8 277.9,567.7 280.3,566.8 282.8,566.1 285.3,565.5 287.9,565.1 293.2,564.7 295.9,564.8 301.2,565.2 303.9,565.6 309.0,566.8 311.5,567.5 316.4,569.1 323.2,572.1 327.4,574.3 331.3,576.6 334.9,579.0 338.2,581.4 344.0,586.2 346.5,588.6 349.9,592.0 354.4,597.4 357.9,602.3 360.6,606.8 363.4,612.4 367.9,622.6 369.4,625.7 371.2,628.9 373.4,631.7 374.9,633.1 376.1,634.1 378.0,635.2 379.5,635.9 383.0,637.1 385.1,637.5 387.3,637.8 390.7,638.0 393.5,637.9 396.6,637.6 400.0,637.1 406.2,635.6 410.3,634.4 413.3,633.3 417.8,631.5 421.0,630.0 427.6,626.5 430.9,624.4 434.2,622.1 439.1,618.4 442.3,615.6 445.2,612.7 449.1,608.1 451.4,604.9 452.3,603.2 453.9,600.0 454.5,598.4 455.4,595.3 455.5,593.8 455.5,590.9 455.2,589.6 454.8,588.3 454.2,587.1 453.5,586.0 452.6,584.9 451.5,584.0 450.3,583.2 447.5,581.8 445.9,581.3 442.3,580.6 440.4,580.4 436.2,580.4 431.8,580.7 427.2,581.3 422.5,582.3 417.7,583.5 413.1,584.8 408.5,586.4 404.1,588.0 397.9,590.5 392.3,593.0 387.2,595.5 380.0,599.4 376.5,601.6 373.4,603.7 370.7,605.7 368.5,607.6 366.5,609.5 364.9,611.3 363.6,613.0 362.1,615.3 360.9,617.5 359.9,619.6 358.4,624.2 356.2,632.5"/>
<path stroke="#008000" d="M435.6,698.3 459.1,679.7 469.7,670.9 480.9,661.1 486.6,655.7 492.3,650.1 498.1,644.1 503.8,637.9 509.3,631.3 514.7,624.4 519.7,617.3 524.4,609.9 528.7,602.3 532.4,594.7 535.5,586.9 537.8,579.2 539.2,571.7 539.8,564.4 539.3,557.4 537.7,551.0 535.1,545.1 531.3,540.0 526.4,535.7 520.4,532.4 513.4,529.9 505.6,528.5 496.9,528.0 487.7,528.5 477.9,529.8 467.8,531.9 457.5,534.7 447.2,538.1 437.0,541.8 426.9,545.9 417.1,550.1 407.7,554.4 360.3,577.4 348.0,582.8 342.5,585.1 337.4,587.0 332.6,588.7 328.1,590.1 323.9,591.2 320.1,592.0 316.4,592.6 313.1,593.0 310.0,593.2 307.1,593.2 304.4,593.0 302.0,592.7 299.7,592.3 297.6,591.7 295.8,591.0 294.1,590.2 291.3,588.3 289.1,586.2 287.7,584.0 286.9,581.7 286.8,579.4 287.3,577.2 288.3,575.2 289.8,573.4 291.8,571.9 294.2,570.7 295.5,570.2 298.4,569.5 301.5,569.2 303.1,569.2 306.4,569.3 309.8,569.8 314.9,571.1 318.2,572.3 323.0,574.4 327.6,576.9 331.7,579.7 335.5,582.6 338.9,585.6 341.9,588.6 345.3,592.5 348.1,596.4 350.9,600.9 353.1,605.2 354.9,610.0 356.2,614.3 357.2,619.6 357.8,625.4 357.9,631.0 357.6,636.7 356.8,641.6 356.0,644.6 354.8,647.4 353.3,649.6 351.3,651.7 348.9,653.4 345.8,654.9 342.3,656.1 338.7,656.9 335.3,657.4 331.3,657.7 326.7,657.9 322.7,657.7 318.3,657.4 313.5,656.8 308.1,655.8 304.2,654.9 300.2,653.8 295.9,652.4 291.4,650.7 286.8,648.7 282.0,646.3 279.6,644.9 274.8,641.9 272.4,640.2 267.6,636.4 265.3,634.3 260.8,629.7 258.7,627.3 256.7,624.7 254.8,621.9 253.0,619.1 251.4,616.1 250.0,613.0 248.7,609.9 247.7,606.6 246.9,603.3 246.3,600.0 246.0,596.6 245.9,593.2 246.1,589.8 246.6,586.5 247.4,583.2 248.4,580.0 249.8,576.9 251.4,573.9 253.2,571.1 255.4,568.5 257.7,566.0 260.3,563.8 263.1,561.8 266.0,560.0 269.2,558.5 272.4,557.2 275.8,556.1 279.2,555.3 282.8,554.8 286.3,554.4 289.9,554.3 293.5,554.4 297.1,554.7 300.6,555.1 307.5,556.5 310.9,557.4 317.3,559.6 323.4,562.1 329.1,564.9 334.4,567.8 339.2,570.8 343.6,573.8 347.6,576.8 351.3,579.7 356.1,583.9 360.2,587.9 364.8,592.7 367.7,596.0 370.9,600.0 380.3,612.7 382.0,614.9 383.8,616.9 386.1,618.9 388.0,620.3 390.6,621.7 393.0,622.6 396.2,623.3 399.8,623.5 403.8,623.3 408.2,622.5 412.8,621.1 416.7,619.6 421.7,617.1 425.6,614.6 429.2,611.8 432.4,608.7 434.9,605.5 436.3,603.0 437.0,601.4 437.4,599.8 437.5,597.6 437.2,596.2 436.6,595.0 435.2,593.4 433.9,592.6 431.5,591.6 429.6,591.2 426.5,591.0 424.2,591.0 420.6,591.4 418.1,591.8 414.4,592.6 410.6,593.7 407.0,595.0 403.5,596.4 399.3,598.4 396.4,599.9 393.0,602.0 390.8,603.6 388.3,605.6 386.8,607.1 385.1,609.1 383.9,611.0 383.0,612.9 382.5,614.6 382.4,616.3 382.6,617.9 383.2,619.8 384.3,621.5 385.5,622.7 386.9,623.8 388.6,624.8 390.7,625.5 393.0,626.1 395.6,626.4 397.8,626.4 400.2,626.3 402.7,626.1 407.4,625.2 412.4,623.7 416.7,622.0 421.1,619.8 425.5,617.2 429.8,614.1 433.6,610.7 435.4,608.8 436.9,606.9 438.8,604.1 439.7,602.2 440.4,600.3 440.8,597.6 440.7,595.9 440.3,594.4 439.5,593.0 438.9,592.4 438.3,591.8 436.9,590.8 434.1,589.8 432.0,589.3 429.6,589.1 427.0,589.0 422.9,589.4 420.1,589.8 415.8,590.7 412.9,591.5 408.6,592.9 404.6,594.4 400.8,596.0 397.3,597.7 394.1,599.4 391.2,601.2 387.9,603.4 385.8,605.1 383.5,607.3 381.6,609.4 380.3,611.4 379.3,613.4 378.7,615.3 378.5,617.1 378.6,619.3 378.9,621.0 379.8,622.9 381.1,624.6 382.4,625.9 384.4,627.3 386.4,628.2 388.6,628.9 391.2,629.5 394.1,629.7 396.5,629.8 399.1,629.6 401.9,629.3 407.1,628.2 412.8,626.5 417.6,624.5 422.7,622.0 427.7,618.9 432.6,615.3 435.0,613.3 437.1,611.2 439.1,609.0 440.9,606.8 443.1,603.4 444.2,601.1 444.9,598.9 445.2,596.7 445.3,595.7 445.0,593.7 444.7,592.8 443.8,591.2 443.2,590.4 442.5,589.7 440.8,588.5 439.8,588.0 437.6,587.2 435.0,586.7 432.2,586.5 429.1,586.5 424.3,586.9 420.9,587.5 415.8,588.7 412.4,589.6 407.4,591.3 402.8,593.1 398.4,595.0 394.4,596.9 390.8,598.9 387.6,600.8 383.9,603.3 380.9,605.7 378.5,608.0 376.6,610.3 374.8,613.0 373.9,615.1 373.2,617.6 372.9,620.0 373.0,622.2 373.5,624.4 374.6,626.8 375.8,628.7 377.4,630.4 379.3,631.8 381.7,633.1 384.6,634.1 387.2,634.6 390.2,635.0 393.6,635.0 396.5,634.8 399.6,634.4 405.3,633.3 411.7,631.3 415.9,629.7 418.8,628.5 424.8,625.4 430.9,621.7 433.9,619.5 436.8,617.2 441.0,613.5 443.6,610.8 445.9,608.0 448.8,603.7 450.3,600.8 450.8,599.4 451.6,596.6 451.8,595.3 451.9,592.7 451.7,591.5 450.9,589.2 450.3,588.2 448.6,586.3 447.6,585.6 445.2,584.2 442.4,583.3 439.1,582.7 435.5,582.5 429.6,582.8 425.5,583.4 419.1,584.8 414.9,585.9 408.7,587.9 402.8,590.1 397.4,592.4 390.9,595.4 385.2,598.4 380.5,601.3 376.6,604.0 373.4,606.6 370.3,609.6 368.0,612.6 366.0,615.9 364.7,619.1 363.9,622.6 363.5,626.9 363.6,630.9 364.3,635.0 364.9,636.9 365.5,638.6 367.0,641.2 368.7,643.2 370.9,644.9 373.3,646.2 376.3,647.2 379.4,647.7 383.1,648.0 387.5,647.8 391.7,647.4 395.2,646.8 399.1,646.0 403.4,644.9 408.1,643.4 411.5,642.2 416.9,640.0 420.7,638.3 424.7,636.4 428.8,634.1 433.0,631.6 437.2,628.8 441.5,625.8 445.7,622.4 449.8,618.8 451.8,616.8 455.5,612.8 457.3,610.7 460.5,606.5 461.9,604.3 464.3,599.9 465.2,597.7 466.0,595.5 466.5,593.3 466.9,591.2 467.1,589.2 467.0,587.2 466.7,585.3 466.2,583.6 465.4,581.9 464.4,580.4 463.2,579.0 461.7,577.7 460.1,576.6 458.2,575.7 456.1,574.9 453.8,574.3 451.4,573.9 448.8,573.6 443.2,573.5 440.3,573.7 434.2,574.5 427.8,575.7 418.3,578.2 409.1,581.3 397.7,585.7 385.4,591.1 375.5,595.9 366.2,600.9 359.5,605.1 355.2,608.3 351.3,611.7 347.9,615.4 342.8,621.6 340.5,624.2 337.6,627.0 334.6,629.1 331.1,630.9 327.8,632.1 323.9,632.9 319.5,633.4 316.6,633.4 313.5,633.2 310.3,632.7 308.0,632.3 304.4,631.3 302.0,630.5 298.2,629.0 295.7,627.8 293.1,626.4 290.6,624.8 288.2,623.0 285.8,621.0 283.6,618.8 281.5,616.5 278.8,612.6 277.2,609.9 276.0,607.0 275.1,604.0 274.8,602.5 274.5,599.5 274.4,598.0 274.7,595.1 275.0,593.6 275.9,590.8 276.4,589.5 277.9,587.0 278.8,585.8 279.8,584.7 282.0,582.7 283.2,581.8 285.9,580.3 288.7,579.1 291.8,578.3 295.0,577.7 300.0,577.6 303.3,577.9 306.7,578.4 309.9,579.2 314.6,580.7 319.0,582.7 323.1,584.9 326.7,587.3 330.0,589.9 333.0,592.5 336.3,596.0 339.0,599.4 341.1,602.7 342.8,605.9 344.3,609.7 345.2,613.2 345.7,616.5 345.7,619.6 345.2,623.0 344.2,626.1 343.0,628.5 341.1,631.1 339.0,633.0 336.6,634.8 333.6,636.3 330.1,637.5 326.9,638.2 323.3,638.7 319.2,638.8 315.9,638.7 312.2,638.3 308.4,637.6 305.7,637.0 301.5,635.7 298.5,634.6 295.6,633.4 292.6,631.9 289.5,630.1 286.5,628.2 282.2,624.8 279.4,622.2 276.8,619.4 274.5,616.3 273.4,614.7 271.5,611.3 270.7,609.6 269.3,605.9 268.8,604.1 268.2,600.3 268.0,598.5 268.2,594.7 268.4,592.9 269.3,589.3 270.0,587.6 271.7,584.4 272.8,582.9 273.9,581.5 276.6,578.9 278.1,577.7 281.4,575.8 285.0,574.2 288.8,573.2 292.8,572.5 296.8,572.3 301.0,572.5 303.0,572.8 307.1,573.5 311.0,574.5 316.7,576.6 321.9,579.0 326.7,581.7 331.0,584.6 334.9,587.6 339.2,591.7 342.8,595.6 345.8,599.4 348.6,603.9 350.7,608.1 352.5,612.7 353.7,617.6 354.3,622.0 354.4,626.5 353.9,631.0 352.9,635.1 351.4,638.3 349.8,640.9 347.5,643.3 344.7,645.5 341.5,647.1 337.7,648.5 333.7,649.4 329.0,650.0 323.4,650.3 319.5,650.1 315.3,649.7 310.7,649.1 307.4,648.4 302.2,647.1 298.5,645.9 294.6,644.5 290.7,642.8 286.6,640.8 282.6,638.4 278.5,635.7 276.5,634.2 272.5,630.9 270.6,629.1 266.9,625.2 265.2,623.1 262.0,618.7 260.6,616.3 258.1,611.3 257.1,608.7 256.2,606.1 255.6,603.4 255.1,600.7 254.8,597.9 254.7,595.2 254.8,592.4 255.2,589.7 255.7,587.1 256.5,584.4 257.4,581.9 258.6,579.5 260.0,577.2 261.6,574.9 263.4,572.9 265.4,571.0 267.5,569.2 269.8,567.6 272.2,566.2 274.8,565.0 277.4,564.0 280.2,563.1 283.0,562.4 285.9,561.9 288.8,561.6 291.7,561.5 297.6,561.7 300.5,562.0 306.3,563.0 309.1,563.7 314.5,565.4 317.2,566.3 322.2,568.5 326.9,570.8 331.3,573.3 335.4,575.8 339.1,578.4 342.5,581.0 347.0,584.9 349.7,587.4 353.3,591.0 358.1,596.5 362.5,602.5 366.3,608.5 373.2,621.0 375.5,624.4 377.8,626.9 379.5,628.3 380.9,629.3 382.5,630.1 384.1,630.9 386.0,631.5 388.0,632.0 391.7,632.5 394.2,632.6 397.0,632.5 400.0,632.2 403.2,631.6 409.0,630.2 415.4,627.9 419.5,626.1 422.3,624.7 428.0,621.5 433.5,617.6 437.5,614.2 440.0,611.9 442.2,609.4 445.1,605.5 447.3,601.6 448.3,599.0 448.7,597.7 449.0,595.3 449.0,594.1 448.6,591.9 448.3,590.9 447.2,589.0 446.4,588.2 445.6,587.4 443.5,586.2 441.0,585.2 438.2,584.6 435.0,584.2 431.5,584.2 427.9,584.5 422.2,585.4 418.3,586.3 412.5,587.9 406.9,589.8 401.7,591.8 396.8,594.0 390.9,596.8 385.9,599.6 381.7,602.3 378.2,604.9 375.4,607.4 373.2,609.7 371.0,612.6 369.6,615.3 368.6,617.9 368.0,620.9 367.8,623.8 368.1,626.6 368.8,629.5 370.0,632.3 371.4,634.4 373.3,636.3 375.2,637.7 377.5,638.9 380.2,639.9 383.5,640.6 386.5,640.9 390.0,640.9 392.9,640.7 396.1,640.4 399.6,639.8 406.2,638.1 410.6,636.7 413.7,635.6 420.3,632.8 427.3,629.1 430.9,627.0 434.5,624.6 439.8,620.6 445.0,616.1 449.7,611.2 452.4,607.8 453.7,606.0 455.8,602.4 456.7,600.7 458.1,597.1 458.6,595.4 459.0,592.0 459.0,590.4 458.8,588.9 458.4,587.5 457.8,586.1 457.1,584.8 456.2,583.6 455.1,582.6 453.8,581.6 452.4,580.8 450.8,580.1 449.1,579.5 447.2,579.0 443.1,578.4 440.8,578.3 436.1,578.4 433.7,578.7 428.6,579.4 423.4,580.5 418.2,581.8 413.1,583.3 405.7,585.9 401.0,587.7 394.5,590.5 385.0,594.9 380.2,597.4 376.0,599.8 372.4,602.1 369.3,604.2 366.6,606.2 363.7,608.7 360.3,612.3 358.5,614.6 357.1,616.8 355.1,620.5 351.0,629.2 348.7,633.1 347.6,634.7 346.2,636.2 344.7,637.7 343.0,639.1 340.5,640.7 338.2,641.8 335.5,642.8 332.5,643.6 329.0,644.3 326.1,644.6 322.9,644.8 319.3,644.7 315.5,644.5 311.4,643.9 306.9,643.0 303.8,642.2 298.8,640.6 295.4,639.3 291.9,637.7 288.3,635.9 284.8,633.7 281.2,631.3 277.8,628.5 276.1,627.0 272.8,623.8 269.9,620.2 267.2,616.3 266.0,614.3 263.9,610.0 263.1,607.8 261.8,603.3 261.4,601.0 261.2,598.7 261.1,596.4 261.2,594.1 261.4,591.8 261.8,589.5 262.4,587.3 263.2,585.2 264.2,583.1 265.3,581.1 266.6,579.2 268.0,577.5 269.6,575.8 271.3,574.3 273.2,572.9 275.1,571.6 277.2,570.5 279.4,569.5 281.7,568.7 284.0,568.0 288.9,567.0 291.3,566.8 296.3,566.7 298.8,566.8 303.8,567.5 306.3,568.0 311.1,569.2 313.4,569.9 317.9,571.6 324.2,574.5 328.0,576.6 331.6,578.9 334.9,581.2 338.0,583.5 340.8,585.8 344.5,589.2 346.7,591.4 349.6,594.7 352.1,597.8 354.2,600.8 357.1,605.3 359.7,610.3 362.1,616.2 365.4,625.7 366.7,629.1 368.4,632.6 369.4,634.2 370.5,635.6 371.8,636.9 373.2,638.1 374.8,639.2 376.7,640.2 378.9,640.9 380.7,641.4 383.5,641.9 385.8,642.1 389.3,642.1 392.2,642.0 395.5,641.6 399.0,641.0 402.9,640.1 407.1,638.9 411.7,637.4 414.9,636.1 420.0,633.9 423.5,632.2 427.2,630.2 430.9,628.0 434.6,625.6 438.3,622.9 443.8,618.5 448.8,613.6 451.9,610.1 453.3,608.3 455.9,604.6 456.9,602.8 458.7,599.0 459.4,597.2 460.3,593.6 460.5,591.9 460.5,590.2 460.3,588.6 459.9,587.1 459.4,585.6 458.6,584.3 457.7,583.1 456.6,581.9 455.3,580.9 453.8,580.0 452.2,579.3 450.4,578.6 446.4,577.8 444.2,577.6 439.4,577.5 436.9,577.6 431.8,578.2 423.7,579.7 418.3,581.1 413.0,582.7 402.9,586.3 398.2,588.2 391.7,591.1 382.3,595.6 377.6,598.1 373.5,600.5 370.0,602.7 366.9,604.8 364.4,606.8 362.1,608.7 358.6,612.2 355.7,616.1 353.4,619.8 349.3,627.6 347.0,631.1 344.6,634.0 341.7,636.5 339.7,637.8 337.4,639.0 334.8,640.1 332.6,640.8 329.4,641.5 326.7,642.0 323.7,642.2 320.5,642.3 316.9,642.1 313.1,641.8 309.0,641.1 306.1,640.4 299.9,638.6 296.7,637.3 293.4,635.9 290.1,634.2 286.8,632.2 281.8,628.8 277.1,624.6 274.2,621.5 272.8,619.9 270.3,616.4 269.1,614.5 267.1,610.6 266.3,608.6 265.0,604.5 264.5,602.4 264.0,598.1 264.1,593.9 264.4,591.8 264.9,589.7 265.5,587.7 266.2,585.8 267.1,583.9 268.2,582.1 269.4,580.4 270.8,578.8 272.3,577.3 273.9,575.9 275.6,574.7 277.4,573.5 281.4,571.6 283.5,570.9 287.8,569.8 292.4,569.2 297.0,569.1 299.3,569.2 303.9,569.8 308.4,570.7 312.8,572.0 317.0,573.5 320.9,575.3 324.7,577.2 328.2,579.2 331.5,581.3 335.9,584.6 338.5,586.8 342.1,590.0 345.1,593.2 347.8,596.3 350.7,600.2 353.0,603.9 355.7,609.0 357.0,612.1 358.1,615.1 359.1,618.4 360.0,622.2 362.2,633.8 363.1,637.8 363.8,639.9 364.7,641.9 365.5,643.4 366.5,644.8 368.0,646.4 369.8,647.7 371.7,648.7 374.0,649.5 376.8,650.0 380.1,650.4 383.3,650.4 387.0,650.2 391.2,649.7 396.2,648.8 401.8,647.4 406.5,646.0 411.7,644.1 417.3,641.8 423.4,639.0 427.6,636.8 434.2,632.9 438.6,630.0 443.1,626.7 447.6,623.1 451.9,619.2 456.0,615.1 459.8,610.6 461.5,608.4 464.6,603.7 465.9,601.4 467.1,599.0 468.0,596.7 468.8,594.3 469.3,592.0 469.7,589.8 469.8,587.7 469.6,585.6 469.2,583.6 468.6,581.8 467.7,580.0 466.5,578.4 465.1,577.0 463.5,575.7 461.6,574.7 459.5,573.7 457.2,573.0 454.7,572.5 452.0,572.1 449.2,571.9 446.2,571.9"/>
<path stroke="#ff0000" d="M284.9,641.3 283.5,641.0 280.4,640.1 277.1,638.5 273.6,636.4 270.2,633.7 268.4,632.2 265.0,628.7 263.4,626.8 260.3,622.7 258.9,620.4 256.4,615.6 255.3,613.1 254.4,610.5 253.6,607.8 253.0,605.1 252.6,602.4 252.4,599.6 252.3,596.8 252.5,594.0 252.9,591.2 253.5,588.5 254.3,585.8 255.3,583.3 256.6,580.8 258.0,578.4 259.6,576.1 261.5,574.0 263.5,572.0 265.7,570.2 268.0,568.6 270.5,567.2 273.1,565.9 275.8,564.8 278.5,563.9 281.4,563.2 284.3,562.7 287.3,562.3 290.3,562.2 293.2,562.2 296.2,562.3 302.1,563.0 307.9,564.3 310.7,565.1 316.0,566.9 318.6,567.9 323.6,570.1 330.3,573.8 336.4,577.7 340.0,580.3 343.2,582.8 346.2,585.4 350.2,589.1 355.6,594.9 359.0,599.1 362.5,603.9 366.1,609.8 372.4,621.5 374.4,624.5 376.6,627.0 379.1,629.2 382.1,631.0 383.8,631.7 385.6,632.3 389.1,633.0 391.4,633.3 394.0,633.3 396.8,633.2 399.8,632.9 405.4,631.8 411.6,630.0 415.6,628.5 418.4,627.3 424.1,624.5 429.9,620.9 432.7,618.9 435.5,616.7 438.2,614.4 440.8,611.9 444.1,608.1 446.9,604.0 448.3,601.3 448.9,600.0 449.7,597.4 449.9,596.1 450.0,593.6 449.8,592.5 449.2,590.3 448.6,589.3 447.2,587.6 446.3,586.8 444.1,585.5 441.5,584.6 438.5,583.9 435.2,583.7 431.6,583.7 425.8,584.3 421.9,585.0 415.9,586.5 410.0,588.3 404.4,590.3 399.1,592.5 392.8,595.4 387.3,598.3 382.6,601.1 378.8,603.8 374.9,606.9 372.5,609.3 370.3,612.2 368.6,615.0 367.5,617.6 366.7,620.7 366.4,623.6 366.5,626.9 367.1,629.9 368.0,632.7 369.4,635.3 371.0,637.2 372.9,639.0 375.4,640.5 377.9,641.5 380.9,642.3 384.4,642.8 387.8,642.9 391.6,642.7 396.0,642.2 399.6,641.5 403.6,640.5 407.9,639.3 412.6,637.6 415.9,636.3 421.1,634.0 424.8,632.1 428.5,630.1 432.3,627.8 436.0,625.2 439.8,622.4 443.5,619.4 447.1,616.2 450.4,612.7 453.4,609.1 456.1,605.4 457.3,603.5 459.2,599.7 459.9,597.8 461.0,594.1 461.2,592.3 461.3,590.6 461.2,588.9 460.9,587.3 460.4,585.8 459.7,584.4 458.8,583.1 457.7,581.9 456.5,580.8 455.0,579.9 453.4,579.0 451.6,578.4 449.7,577.8 445.4,577.1 443.0,577.0 438.1,577.1 435.5,577.3 430.1,578.0 421.9,579.8 413.7,582.2 408.4,584.0 403.3,585.8 394.0,589.7 385.8,593.5 377.4,597.8 370.7,601.7 365.5,605.2 363.0,607.2 360.8,609.1 357.4,612.6 354.8,615.9 352.8,619.1 348.3,626.9 346.2,630.0 343.8,632.8 340.8,635.4 338.7,636.7 336.4,637.9 333.8,639.0 331.6,639.7 328.3,640.4 325.6,640.8 322.6,641.0 319.3,641.0 315.8,640.8 311.9,640.4 307.8,639.6 305.0,638.9 300.5,637.5 297.4,636.4 294.2,635.0 291.0,633.3 287.8,631.5 284.6,629.3 279.9,625.6 277.0,622.8 274.3,619.7 271.8,616.3 270.7,614.6 268.7,610.9 267.9,609.0 266.6,605.0 266.1,603.0 265.5,598.9 265.5,596.9 265.8,592.9 266.7,589.0 267.3,587.1 268.1,585.3 269.1,583.5 270.2,581.9 271.4,580.3 272.8,578.8 274.3,577.5 277.6,575.0 281.3,573.1 285.3,571.7 289.6,570.7 291.7,570.5 296.1,570.2 300.6,570.5 302.8,570.7 307.2,571.5 311.4,572.7 317.5,574.9 323.1,577.5 328.1,580.4 331.2,582.5 334.1,584.6 339.2,588.8 343.3,593.0 347.5,598.0 350.7,602.7 353.5,607.9 354.6,610.3 355.7,613.3 357.3,618.8 358.3,624.8 358.8,631.0 358.9,639.0 358.7,642.9 358.4,646.1 357.9,648.7 357.4,650.8 356.7,652.7 355.8,654.3 354.8,655.6 353.8,656.6 352.6,657.6 351.1,658.5 349.3,659.4 347.5,660.1 342.9,661.3 337.4,662.1 331.3,662.5 325.0,662.4 319.0,661.9 313.9,661.3 308.2,660.2 301.9,658.7 297.5,657.4 292.7,655.8 287.8,653.8 282.7,651.5 277.5,648.7 272.1,645.4 269.5,643.5 264.2,639.4 261.7,637.1 259.1,634.6 256.7,632.1 254.4,629.3 252.1,626.4 250.0,623.4 248.1,620.2 246.3,616.9 244.8,613.4 243.4,609.9 242.3,606.2 241.5,602.5 240.9,598.7 240.6,594.9 240.6,591.1 241.0,587.3 241.7,583.6 242.6,580.0 244.0,576.4 245.6,573.0 247.5,569.7 249.8,566.7 252.3,563.8 255.1,561.2 258.2,558.9 261.4,556.8 264.9,554.9 268.5,553.4 272.2,552.2 276.0,551.2 280.0,550.5 283.9,550.1 287.9,549.9 291.9,550.0 295.9,550.3 299.8,550.8 303.7,551.5 307.5,552.4 311.3,553.4 314.9,554.6 321.8,557.2 328.3,560.2 331.3,561.7 337.0,565.0 344.7,569.9 349.2,573.2 353.4,576.3 357.1,579.4 362.0,583.7 366.1,587.7 369.7,591.3 376.2,598.6 385.2,609.6 388.5,613.1 390.8,615.0 393.2,616.6 395.8,617.8 398.1,618.4 401.1,618.9 404.4,618.9 407.9,618.4 410.9,617.7 414.7,616.5 417.8,615.1 420.8,613.4 423.7,611.4 426.3,609.3 428.4,606.9 430.1,604.5 431.1,602.2 431.3,601.1 431.3,600.0 431.2,599.0 430.8,598.1 430.3,597.2 429.5,596.5 428.1,595.6 426.9,595.2 425.6,594.8 424.1,594.6 421.7,594.6 417.3,595.0 412.6,596.0 408.1,597.5 403.0,599.7 398.7,602.1 395.1,604.6 392.5,607.1 390.7,609.6 390.1,610.7 389.7,611.9 389.5,613.0 389.5,614.4 389.7,615.4 390.2,616.6 391.0,617.7 391.8,618.4 393.1,619.3 394.3,619.9 397.0,620.7 400.4,621.0 403.6,620.9 407.2,620.4 411.0,619.4 415.1,617.9 418.5,616.3 422.5,613.9 425.6,611.6 428.3,609.1 430.6,606.5 432.3,603.8 432.8,602.5 433.2,601.2 433.4,600.0 433.3,598.8 432.8,597.2 432.1,596.3 431.3,595.5 429.6,594.5 428.3,594.0 426.8,593.7 425.1,593.5 422.4,593.4 418.4,593.8 413.3,594.9 408.2,596.5 402.6,598.9 397.7,601.5 393.8,604.2 390.9,606.9 388.8,609.5 388.1,610.8 387.5,612.4 387.3,613.6 387.3,615.1 387.5,616.2 388.0,617.5 388.8,618.7 389.6,619.5 390.9,620.5 392.0,621.1 393.8,621.8 395.3,622.2 398.8,622.7 402.2,622.6 406.0,622.1 410.2,621.1 414.6,619.5 418.3,617.9 422.8,615.3 426.3,612.9 429.5,610.1 432.2,607.2 434.2,604.1 434.9,602.6 435.4,601.2 435.6,599.7 435.7,598.4 435.2,596.5 434.6,595.5 433.7,594.5 431.9,593.4 430.4,592.8 428.8,592.4 426.9,592.1 423.9,592.1 419.5,592.5 413.7,593.7 408.0,595.5 404.8,596.7 401.8,598.1 396.4,601.0 394.1,602.5 391.4,604.4 388.3,607.3 387.2,608.7 386.0,610.6 385.3,611.9 384.8,613.6 384.6,614.8 384.6,616.4 385.0,617.9 385.6,619.3 386.5,620.5 387.4,621.4 388.8,622.4 390.6,623.3 392.5,624.0 394.2,624.4 398.1,624.7 402.7,624.5 407.0,623.7 411.6,622.4 416.6,620.5 420.7,618.5 424.7,616.1 428.6,613.3 432.1,610.1 435.0,606.7 436.2,605.0 437.2,603.3 438.1,600.7 438.5,599.1 438.5,597.5 438.2,596.1 438.0,595.4 437.3,594.1 436.3,593.1 434.2,591.8 432.5,591.1 430.6,590.7 428.5,590.4 425.0,590.4 419.9,591.0 417.3,591.5 413.4,592.5 409.5,593.7 405.8,595.0 402.2,596.5 398.9,598.1 393.2,601.3 390.8,602.9 388.1,605.0 386.4,606.6 384.5,608.6 383.5,610.1 382.4,612.0 381.8,613.4 381.3,615.2 381.2,616.9 381.4,618.5 381.9,620.1 382.7,621.5 383.7,622.8 385.0,624.0 386.6,625.1 388.5,626.0 390.7,626.7 392.5,627.0 394.5,627.3 396.7,627.4 399.1,627.3 401.7,627.1 406.4,626.3 411.6,624.8 417.1,622.6 421.7,620.4 426.3,617.6 430.7,614.4 434.8,610.7 436.6,608.8 438.1,606.8 439.5,604.8 440.6,602.7 441.7,599.8 442.1,597.9 442.1,596.1 441.7,594.4 441.4,593.6 440.5,592.2 439.9,591.6 439.2,591.0 437.7,590.0 435.7,589.2 433.5,588.7 431.1,588.4 427.1,588.3 424.2,588.5 421.2,589.0 418.2,589.6 413.6,590.7 409.2,592.1 404.9,593.7 400.9,595.4 397.1,597.1 393.7,598.9 389.8,601.3 387.2,603.1 384.3,605.4 382.5,607.0 380.5,609.2 379.1,611.3 378.0,613.3 377.3,615.3 376.9,617.2 376.9,619.0 377.2,621.1 377.9,623.1 378.8,624.6 380.2,626.4 381.6,627.6 383.3,628.7 385.3,629.6 387.6,630.3 390.2,630.9 392.4,631.1 394.8,631.2 397.4,631.1 400.2,630.8 403.3,630.3 406.5,629.6 412.5,627.8 418.8,625.2 424.2,622.4 429.5,619.1 434.6,615.1 437.0,613.0 439.3,610.7 442.3,607.1 443.9,604.7 445.3,602.3 446.3,599.8 446.6,598.6 447.0,596.3 447.1,595.2 446.8,593.1 446.5,592.2 445.6,590.4 445.0,589.6 443.4,588.2 442.4,587.5 440.2,586.6 437.6,585.9 434.7,585.5 431.6,585.4 428.2,585.5 422.9,586.2 419.3,587.0 413.9,588.4 408.6,590.1 403.5,592.0 398.8,594.0 394.5,596.0 390.6,598.0 386.0,600.7 382.2,603.3 379.1,605.8 376.6,608.1 374.6,610.4 373.1,612.7 372.0,614.8 371.1,617.4 370.6,619.9 370.5,622.2 370.8,624.9 371.6,627.5 372.6,629.4 374.1,631.6 375.8,633.2 377.8,634.6 380.2,635.8 383.1,636.8 385.8,637.3 388.9,637.6 391.5,637.6 394.4,637.5 397.5,637.1 400.9,636.6 404.6,635.7 411.3,633.7 415.8,632.0 418.8,630.7 425.2,627.4 428.5,625.5 431.8,623.4 436.7,619.9 439.9,617.3 442.9,614.5 447.1,610.1 450.6,605.4 452.4,602.2 453.2,600.6 454.4,597.5 454.7,596.0 455.1,593.0 455.0,591.6 454.8,590.2 454.5,589.0 454.0,587.7 453.3,586.6 452.5,585.6 451.5,584.6 450.4,583.8 449.1,583.0 446.1,581.8 442.7,581.0 440.8,580.8 436.8,580.6 432.5,580.9 428.0,581.4 423.3,582.3 418.7,583.4 414.1,584.8 409.5,586.2 405.2,587.8 399.0,590.3 393.3,592.8 388.2,595.2 383.7,597.6 379.7,599.9 376.3,602.1 373.3,604.1 370.8,606.1 367.9,608.6 366.2,610.4 364.3,612.8 363.1,614.5 361.9,616.7 360.9,618.8 359.9,621.4 358.7,625.9 356.4,636.5 355.6,639.1 354.8,641.3 353.8,643.4 352.6,645.3 351.1,647.1 349.6,648.5 346.9,650.4 344.0,651.8 340.2,653.1 336.4,653.9 331.9,654.6 327.5,654.8 322.5,654.8 316.8,654.3 312.0,653.7 306.7,652.6 301.0,651.1 296.9,649.8 292.7,648.3 288.4,646.4 283.9,644.1 279.4,641.5 274.8,638.4 272.6,636.7 268.2,633.0 266.1,631.0 262.0,626.5 260.1,624.1 258.3,621.6 256.6,619.0 255.1,616.3 253.7,613.5 252.5,610.6 251.5,607.6 250.6,604.6 250.0,601.5 249.6,598.4 249.4,595.2 249.5,592.1 249.8,589.0 250.4,585.9 251.2,582.9 252.3,580.0 253.6,577.2 255.2,574.6 257.0,572.1 259.1,569.7 261.3,567.5 263.7,565.5 266.4,563.7 269.1,562.2 272.1,560.8 275.1,559.7 278.2,558.7 281.4,558.0 284.7,557.5 288.0,557.2 291.3,557.1 294.7,557.2 298.0,557.5 301.2,557.9 304.5,558.5 310.8,560.1 316.8,562.1 319.7,563.2 325.2,565.7 332.8,569.7 339.5,574.0 345.3,578.3 351.9,583.8 354.7,586.4 358.5,590.1 361.7,593.7 364.4,596.9 369.5,603.6 377.5,615.7 379.5,618.3 381.2,620.2 383.9,622.6 386.4,624.2 388.0,625.0 389.8,625.6 393.1,626.4 395.3,626.7 397.6,626.8 401.9,626.6 406.7,625.8 411.9,624.3 417.4,622.2 422.0,619.9 426.5,617.1 430.9,613.9 434.8,610.3 437.4,607.4 438.8,605.4 440.0,603.4 441.2,600.4 441.7,598.5 441.8,596.7 441.6,595.0 441.3,594.2 440.5,592.8 440.0,592.1 438.7,591.0 438.0,590.5 436.2,589.6 434.1,589.0 431.8,588.6 427.9,588.5 425.1,588.6 422.2,589.0 419.2,589.5 414.7,590.5 410.3,591.9 406.0,593.4 401.9,595.1 398.1,596.8 394.7,598.6 390.7,600.9 388.0,602.7 385.1,605.0 383.2,606.6 381.2,608.8 380.0,610.4 378.7,612.4 377.9,614.4 377.4,616.3 377.2,618.1 377.4,620.3 377.9,622.0 378.8,623.9 380.1,625.7 381.5,626.9 383.5,628.3 385.5,629.2 387.8,630.0 390.4,630.5 392.5,630.8 394.9,630.8 397.5,630.8 400.3,630.5 403.3,630.0 406.6,629.3 412.4,627.5 418.7,624.9 424.0,622.2 429.3,618.9 434.3,615.0 436.7,612.9 438.9,610.7 441.9,607.2 443.5,604.8 444.8,602.4 445.8,600.0 446.2,598.8 446.6,596.5 446.6,595.4 446.4,593.4 446.1,592.4 445.2,590.6 444.6,589.8 443.1,588.4 442.1,587.8 440.0,586.8 437.4,586.2 434.6,585.7 431.5,585.6 428.2,585.8 423.0,586.4 419.4,587.1 414.1,588.5 408.8,590.2 403.8,592.0 399.2,594.0 394.9,596.0 391.0,598.0 386.5,600.7 382.7,603.2 379.6,605.7 377.1,608.1 375.1,610.4 373.6,612.6 372.5,614.7 371.6,617.3 371.2,619.7 371.1,622.1 371.5,624.8 372.3,627.3 373.3,629.2 375.0,631.3 376.7,632.9 378.9,634.3 380.9,635.2 383.8,636.1 386.6,636.7 389.7,636.9 392.3,636.9 395.2,636.8 398.3,636.4 404.2,635.3 410.8,633.3 415.1,631.7 418.1,630.4 424.4,627.3 430.8,623.5 435.6,620.1 438.8,617.6 441.7,614.9 445.9,610.6 449.4,606.1 451.3,603.0 452.1,601.4 453.4,598.4 453.8,596.8 454.3,593.9 454.3,592.5 453.9,589.9 453.4,588.7 452.8,587.5 452.1,586.5 451.2,585.5 450.2,584.6 447.7,583.1 444.7,582.1 441.3,581.4 437.4,581.1 433.3,581.2 428.9,581.7 424.5,582.5 419.9,583.5 413.1,585.4 406.6,587.6 400.4,590.0 394.8,592.5 388.1,595.7 382.4,598.8 377.6,601.7 374.6,603.8 372.0,605.8 369.8,607.7 367.9,609.5 366.3,611.3 364.6,613.6 363.6,615.3 362.5,617.5 361.1,621.1 360.0,625.6 359.3,629.8 358.0,639.6 357.3,643.7 356.3,647.1 354.9,649.9 353.1,652.2 351.9,653.4 350.6,654.3 347.5,656.0 343.8,657.3"/>
</svg>
    <!-- scrollbar -->
    <div style="left:640.2px;top:80px;width:7.8px;height:640px;background:#fafafa;"></div>
    <div style="left:641.5px;top:395px;width:5px;height:121px;border-radius:3px;background:#c1c1c1;"></div>
  </div>
</div>
<div class="abs" style="left:0;top:718.8px;width:1018px;height:3px;background:linear-gradient(to right,#f2f2f2 0%,#d6d6d6 13%,#bebebe 26%,#a4a4a4 40%,#a2a2a2 74%,#bdbdbd 87%,#e6e6e6 100%);"></div>
<div class="abs" style="left:1014px;top:0;width:4px;height:721px;background:#fff;"></div>
</body></html>
